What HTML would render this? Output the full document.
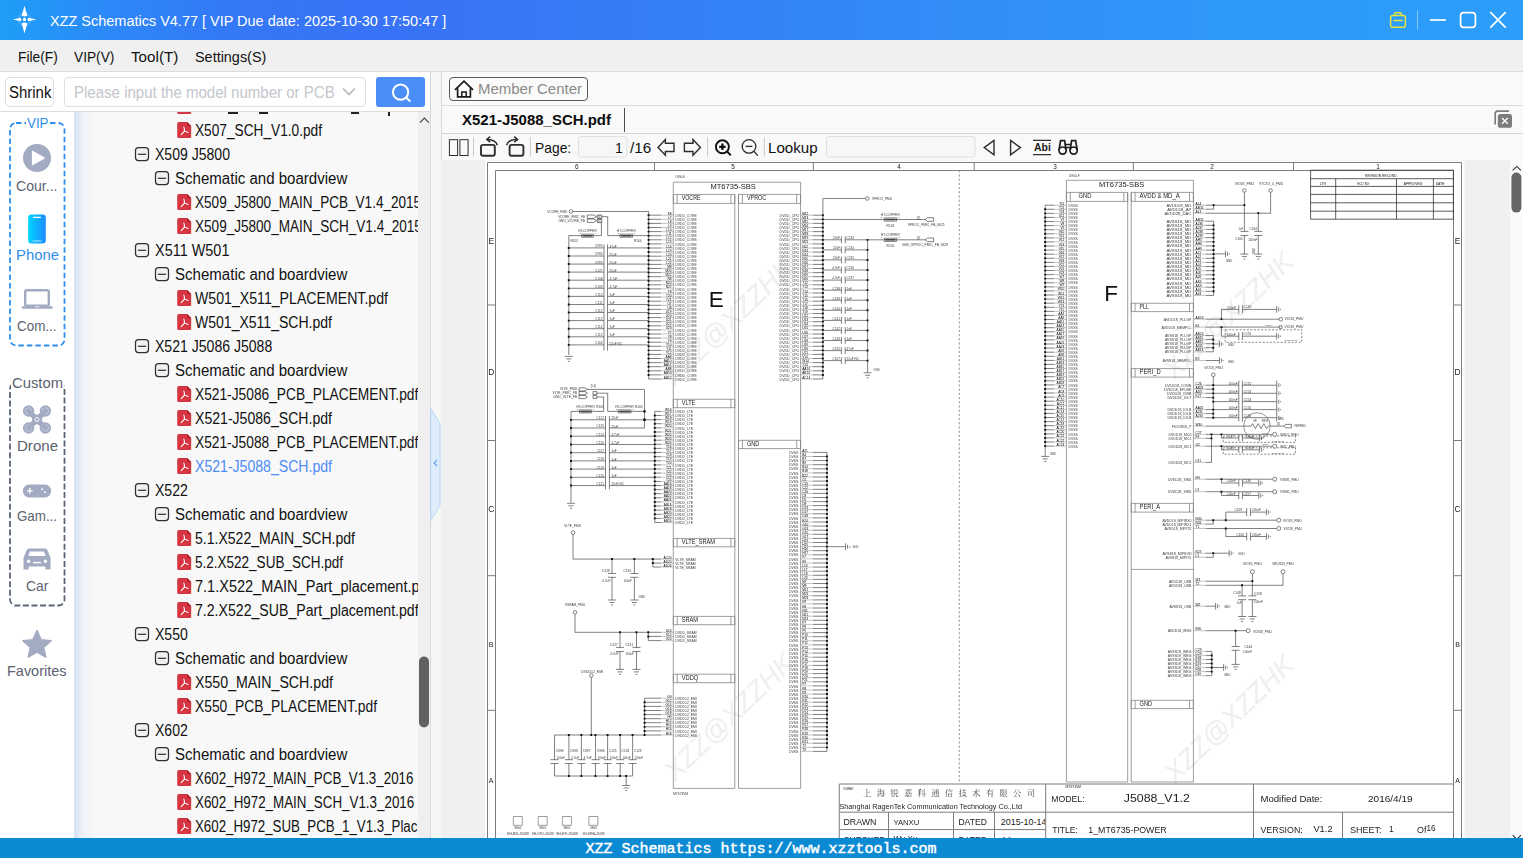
<!DOCTYPE html>
<html lang="en"><head><meta charset="utf-8"><title>XZZ Schematics</title>
<style>
html,body{margin:0;padding:0}
body{width:1523px;height:858px;overflow:hidden;position:relative;background:#fff;font-family:"Liberation Sans","Noto Sans CJK SC",sans-serif}
.a{position:absolute}
.t{position:absolute;white-space:nowrap;transform-origin:0 50%}
#tb{position:absolute;left:0;top:0;width:1523px;height:40px;background:linear-gradient(90deg,#1e9ef7 0%,#2495f8 3%,#2e86f8 8%,#3577f6 16%,#3872f6 26%,#367bf6 40%,#328bf8 60%,#2e98f9 80%,#2c9efa 100%)}
#mb{position:absolute;left:0;top:40px;width:1523px;height:31px;background:#f0f0f0;border-bottom:1px solid #dcdcdc}
#sr{position:absolute;left:0;top:72px;width:430px;height:39px;background:#fff;border-bottom:1px solid #dedede}
.btn{border:1px solid #dcdfe6;border-radius:4px;box-sizing:border-box;background:#fff}
#tree{position:absolute;left:74px;top:112px;width:344px;height:726px;overflow:hidden;background:linear-gradient(90deg,#d4e0f3 0,#eef2f8 9px,#f8f8f8 20px,#f8f8f8 100%)}
#sb{position:absolute;left:0;top:838px;width:1523px;height:20px;background:#0b8ad4}
#sbt{position:absolute;left:585.5px;top:840px;width:351px;height:18px;line-height:19px;font-family:"Liberation Mono",monospace;font-size:15px;color:#fff;-webkit-text-stroke:.45px #fff;white-space:nowrap}
</style></head>
<body>
<div id="tb"></div>
<svg class="a" style="left:10px;top:5px" width="30" height="30" viewBox="0 0 30 30">
<circle cx="14.5" cy="14.5" r="6.2" fill="none" stroke="#fff" stroke-opacity=".35" stroke-width="0.8"/>
<path d="M14.5 0.800 L17.300 10.600 Q14.5 12.400 11.700 10.600 Z M14.5 28.400 L17.300 18.400 Q14.5 16.600 11.700 18.400 Z M2.800 14.5 L10.800 12.700 Q12 14.5 10.800 16.300 Z M26.400 14.5 L18.200 12.700 Q17 14.5 18.200 16.300 Z" fill="#fff"/>
<circle cx="14.5" cy="14.5" r="1.7" fill="#fff"/></svg>
<span class="t" style="left:50.20px;top:13.08px;font-size:15.5px;line-height:15.5px;color:#fff;transform:scaleX(0.9336);">XZZ Schematics V4.77 [ VIP Due date: 2025-10-30 17:50:47 ]</span>
<svg class="a" style="left:1380px;top:0" width="143" height="40" viewBox="1380 0 143 40" fill="none">
<g stroke="#e6e43c" stroke-width="1.5" stroke-linejoin="round" stroke-linecap="round">
<rect x="1390.6" y="15.6" width="14.8" height="11.6" rx="2"/><path d="M1394.6 15.4v-1.2a1.4 1.4 0 0 1 1.4-1.4h4a1.4 1.4 0 0 1 1.4 1.4v1.2"/><path d="M1394 20.6h8.2"/></g>
<path d="M1417.5 10v20" stroke="#fff" stroke-opacity=".45" stroke-width="1"/>
<g stroke="#fff" stroke-width="1.7">
<path d="M1430 20h16"/><rect x="1460.6" y="12.6" width="14.8" height="14.8" rx="3.2"/><path d="M1490.3 12.2l15.4 15.4M1505.7 12.2l-15.4 15.4"/></g></svg>
<div id="mb"></div>
<span class="t" style="left:18.00px;top:49.18px;font-size:15.5px;line-height:15.5px;color:#111;transform:scaleX(0.8890);">File(F)</span>
<span class="t" style="left:74.20px;top:49.18px;font-size:15.5px;line-height:15.5px;color:#111;transform:scaleX(0.8850);">VIP(V)</span>
<span class="t" style="left:131.30px;top:49.18px;font-size:15.5px;line-height:15.5px;color:#111;transform:scaleX(0.9808);">Tool(T)</span>
<span class="t" style="left:195.30px;top:49.18px;font-size:15.5px;line-height:15.5px;color:#111;transform:scaleX(0.9300);">Settings(S)</span>
<div id="sr"></div>
<div class="a btn" style="left:5px;top:77px;width:49px;height:30px"></div>
<span class="t" style="left:8.60px;top:84.40px;font-size:16.3px;line-height:16.3px;color:#111;transform:scaleX(0.9177);">Shrink</span>
<div class="a btn" style="left:64px;top:77px;width:302px;height:30px"></div>
<span class="t" style="left:73.50px;top:84.40px;font-size:16.3px;line-height:16.3px;color:#c3c6cc;transform:scaleX(0.9233);">Please input the model number or PCB</span>
<svg class="a" style="left:341px;top:86px" width="16" height="12" viewBox="0 0 16 12" fill="none"><path d="M2 2.5l6 6 6-6" stroke="#b8b8b8" stroke-width="1.6"/></svg>
<div class="a" style="left:376px;top:77px;width:49px;height:30px;background:#4b8ef8;border-radius:3px"></div>
<svg class="a" style="left:388px;top:80px" width="26" height="26" viewBox="0 0 26 26" fill="none" stroke="#fff" stroke-width="2" stroke-linecap="round"><circle cx="12.6" cy="12.2" r="7.6"/><path d="M18.4 17.8l3.4 3.2"/></svg>
<div class="a" style="left:0;top:112px;width:74px;height:726px;background:#fff"></div>
<svg class="a" style="left:0;top:112px" width="74" height="726" viewBox="0 112 74 726" fill="none">
<rect x="10" y="123" width="54.5" height="222.5" rx="6" stroke="#2f8fef" stroke-width="1.8" stroke-dasharray="5.5 3"/>
<rect x="26" y="114" width="23" height="14" fill="#fff"/>
<rect x="10" y="383" width="54.5" height="222.5" rx="6" stroke="#5b6678" stroke-width="1.8" stroke-dasharray="6 2.600"/>
<rect x="11" y="374" width="53" height="15" fill="#fff"/>
<circle cx="37" cy="158" r="14" fill="#a3abc2"/><path d="M32.5 151.2v13.6l11.8-6.8z" fill="#fff" stroke="#fff" stroke-width="1.2" stroke-linejoin="round"/>
<defs><linearGradient id="pg" x1="0" x2="1"><stop offset="0" stop-color="#00d4ff"/><stop offset="1" stop-color="#1e8cff"/></linearGradient></defs>
<rect x="28.2" y="214.5" width="17.6" height="29" rx="3" fill="url(#pg)"/><path d="M33.5 217.3h7" stroke="#fff" stroke-width="1.2" stroke-linecap="round"/><path d="M32.5 241h9" stroke="#fff" stroke-opacity=".7" stroke-width="1"/>
<rect x="25.2" y="290.2" width="23.6" height="15.6" rx="1.5" stroke="#a3abc2" stroke-width="2.4"/><path d="M23 307.5h28.500" stroke="#a3abc2" stroke-width="2.6" stroke-linecap="round"/><path d="M35 306.8h4.5" stroke="#fff" stroke-width="0.8"/>
<g fill="#a3abc2"><circle cx="28.6" cy="411" r="5.700"/><circle cx="28.6" cy="428" r="5.700"/><circle cx="45.4" cy="411" r="5.700"/><circle cx="45.4" cy="428" r="5.700"/></g>
<g fill="none" stroke="#c9cedc" stroke-width=".8"><circle cx="28.6" cy="411" r="3.300"/><circle cx="28.6" cy="428" r="3.300"/><circle cx="45.4" cy="411" r="3.300"/><circle cx="45.4" cy="428" r="3.300"/></g>
<path d="M30 412.400l14 14.200M44 412.400l-14 14.200" stroke="#a3abc2" stroke-width="5.200"/><circle cx="37" cy="419.500" r="5" fill="#a3abc2"/><circle cx="37" cy="419.500" r="2" fill="none" stroke="#fff" stroke-width=".9"/>
<rect x="22.8" y="484.6" width="28.4" height="12.8" rx="6.4" fill="#a3abc2"/><path d="M29.8 488v5.6M27 490.8h5.6" stroke="#fff" stroke-width="1.3"/><circle cx="42.2" cy="489.3" r="1" fill="#fff"/><circle cx="45" cy="492.2" r="1" fill="#fff"/>
<path d="M23.5 569.5v-11.8l3.2-7.6q.6-1.6 2.4-1.6h15.8q1.8 0 2.4 1.6l3.2 7.6v11.8h-5.2v-3h-16.6v3z" fill="#a3abc2"/><path d="M28.2 556l1.9-4.6h13.8l1.9 4.6z" fill="#fff"/><circle cx="28.6" cy="561.2" r="1.7" fill="#fff"/><circle cx="45.4" cy="561.2" r="1.7" fill="#fff"/><path d="M33 562.6h8" stroke="#fff" stroke-width="1.4"/>
<path d="M37 630.5l4.1 9.2 10 1-7.5 6.7 2.2 9.8-8.8-5.1-8.8 5.1 2.2-9.8-7.5-6.7 10-1z" fill="#a3abc2" stroke="#a3abc2" stroke-width="1.5" stroke-linejoin="round"/>
</svg>
<span class="t" style="left:26.50px;top:115.08px;font-size:15.5px;line-height:15.5px;color:#2f8fef;transform:scaleX(0.8605);">VIP</span>
<span class="t" style="left:16.00px;top:177.70px;font-size:15px;line-height:15px;color:#5b6270;transform:scaleX(0.9392);">Cour...</span>
<span class="t" style="left:15.60px;top:247.30px;font-size:15px;line-height:15px;color:#2f8fef;transform:scaleX(0.9913);">Phone</span>
<span class="t" style="left:17.30px;top:317.50px;font-size:15px;line-height:15px;color:#5b6270;transform:scaleX(0.8942);">Com...</span>
<span class="t" style="left:12.00px;top:375.10px;font-size:15px;line-height:15px;color:#5b6270;transform:scaleX(0.9868);">Custom</span>
<span class="t" style="left:16.60px;top:437.60px;font-size:15px;line-height:15px;color:#5b6270;transform:scaleX(1.0035);">Drone</span>
<span class="t" style="left:17.20px;top:507.70px;font-size:15px;line-height:15px;color:#5b6270;transform:scaleX(0.8888);">Gam...</span>
<span class="t" style="left:26.00px;top:577.60px;font-size:15px;line-height:15px;color:#5b6270;transform:scaleX(0.9309);">Car</span>
<span class="t" style="left:7.30px;top:662.60px;font-size:15px;line-height:15px;color:#5b6270;transform:scaleX(0.9646);">Favorites</span>
<div id="tree">
<svg class="a" style="left:0;top:0" width="344" height="726" viewBox="74 112 344 726">
<g transform="translate(0,-24)"><g transform="translate(177,122)"><path d="M1.8 0h8.400l4 4v10.400a1.600 1.600 0 0 1-1.600 1.600H1.800A1.600 1.600 0 0 1 .2 14.400V1.600A1.600 1.600 0 0 1 1.800 0z" fill="#d63541"/><path d="M10.200 0l4 4h-2.800a1.200 1.200 0 0 1-1.200-1.200z" fill="#a3222d"/><path d="M6.900 5.400q.9 2.200.4 3.900L4.200 12.600M7.300 9.300q2 .2 3.700 1.100" fill="none" stroke="#fff" stroke-width="1.150" stroke-linecap="round" stroke-linejoin="round"/></g></g>
<g transform="translate(177,122)"><path d="M1.8 0h8.400l4 4v10.400a1.600 1.600 0 0 1-1.600 1.600H1.800A1.600 1.600 0 0 1 .2 14.400V1.600A1.600 1.600 0 0 1 1.800 0z" fill="#d63541"/><path d="M10.200 0l4 4h-2.800a1.200 1.200 0 0 1-1.200-1.200z" fill="#a3222d"/><path d="M6.900 5.400q.9 2.200.4 3.900L4.200 12.600M7.300 9.300q2 .2 3.700 1.100" fill="none" stroke="#fff" stroke-width="1.150" stroke-linecap="round" stroke-linejoin="round"/></g>
<rect x="135.5" y="147.5" width="13" height="13" rx="3" fill="#f1f1f1" stroke="#303030" stroke-width="1.25"/><path d="M137.9 154.3h8.200" stroke="#303030" stroke-width="1.200"/>
<rect x="155.5" y="171.5" width="13" height="13" rx="3" fill="#f1f1f1" stroke="#303030" stroke-width="1.25"/><path d="M157.9 178.3h8.200" stroke="#303030" stroke-width="1.200"/>
<g transform="translate(177,194)"><path d="M1.8 0h8.400l4 4v10.400a1.600 1.600 0 0 1-1.600 1.600H1.800A1.600 1.600 0 0 1 .2 14.400V1.600A1.600 1.600 0 0 1 1.800 0z" fill="#d63541"/><path d="M10.200 0l4 4h-2.800a1.200 1.200 0 0 1-1.200-1.200z" fill="#a3222d"/><path d="M6.900 5.400q.9 2.200.4 3.900L4.200 12.600M7.300 9.300q2 .2 3.700 1.100" fill="none" stroke="#fff" stroke-width="1.150" stroke-linecap="round" stroke-linejoin="round"/></g>
<g transform="translate(177,218)"><path d="M1.8 0h8.400l4 4v10.400a1.600 1.600 0 0 1-1.600 1.600H1.800A1.600 1.600 0 0 1 .2 14.400V1.600A1.600 1.600 0 0 1 1.800 0z" fill="#d63541"/><path d="M10.200 0l4 4h-2.800a1.200 1.200 0 0 1-1.200-1.200z" fill="#a3222d"/><path d="M6.900 5.400q.9 2.200.4 3.900L4.200 12.600M7.300 9.300q2 .2 3.700 1.100" fill="none" stroke="#fff" stroke-width="1.150" stroke-linecap="round" stroke-linejoin="round"/></g>
<rect x="135.5" y="243.5" width="13" height="13" rx="3" fill="#f1f1f1" stroke="#303030" stroke-width="1.25"/><path d="M137.9 250.3h8.200" stroke="#303030" stroke-width="1.200"/>
<rect x="155.5" y="267.5" width="13" height="13" rx="3" fill="#f1f1f1" stroke="#303030" stroke-width="1.25"/><path d="M157.9 274.3h8.200" stroke="#303030" stroke-width="1.200"/>
<g transform="translate(177,290)"><path d="M1.8 0h8.400l4 4v10.400a1.600 1.600 0 0 1-1.600 1.600H1.800A1.600 1.600 0 0 1 .2 14.400V1.600A1.600 1.600 0 0 1 1.800 0z" fill="#d63541"/><path d="M10.200 0l4 4h-2.800a1.200 1.200 0 0 1-1.200-1.200z" fill="#a3222d"/><path d="M6.900 5.400q.9 2.200.4 3.900L4.200 12.600M7.300 9.300q2 .2 3.700 1.100" fill="none" stroke="#fff" stroke-width="1.150" stroke-linecap="round" stroke-linejoin="round"/></g>
<g transform="translate(177,314)"><path d="M1.8 0h8.400l4 4v10.400a1.600 1.600 0 0 1-1.600 1.600H1.800A1.600 1.600 0 0 1 .2 14.400V1.600A1.600 1.600 0 0 1 1.800 0z" fill="#d63541"/><path d="M10.200 0l4 4h-2.800a1.200 1.200 0 0 1-1.200-1.200z" fill="#a3222d"/><path d="M6.900 5.400q.9 2.200.4 3.900L4.200 12.600M7.300 9.300q2 .2 3.700 1.100" fill="none" stroke="#fff" stroke-width="1.150" stroke-linecap="round" stroke-linejoin="round"/></g>
<rect x="135.5" y="339.5" width="13" height="13" rx="3" fill="#f1f1f1" stroke="#303030" stroke-width="1.25"/><path d="M137.9 346.3h8.200" stroke="#303030" stroke-width="1.200"/>
<rect x="155.5" y="363.5" width="13" height="13" rx="3" fill="#f1f1f1" stroke="#303030" stroke-width="1.25"/><path d="M157.9 370.3h8.200" stroke="#303030" stroke-width="1.200"/>
<g transform="translate(177,386)"><path d="M1.8 0h8.400l4 4v10.400a1.600 1.600 0 0 1-1.600 1.600H1.800A1.600 1.600 0 0 1 .2 14.400V1.600A1.600 1.600 0 0 1 1.800 0z" fill="#d63541"/><path d="M10.200 0l4 4h-2.800a1.200 1.200 0 0 1-1.200-1.200z" fill="#a3222d"/><path d="M6.900 5.400q.9 2.200.4 3.900L4.200 12.600M7.300 9.300q2 .2 3.700 1.100" fill="none" stroke="#fff" stroke-width="1.150" stroke-linecap="round" stroke-linejoin="round"/></g>
<g transform="translate(177,410)"><path d="M1.8 0h8.400l4 4v10.400a1.600 1.600 0 0 1-1.600 1.600H1.800A1.600 1.600 0 0 1 .2 14.400V1.600A1.600 1.600 0 0 1 1.800 0z" fill="#d63541"/><path d="M10.200 0l4 4h-2.800a1.200 1.200 0 0 1-1.200-1.200z" fill="#a3222d"/><path d="M6.900 5.400q.9 2.200.4 3.900L4.200 12.600M7.300 9.300q2 .2 3.700 1.100" fill="none" stroke="#fff" stroke-width="1.150" stroke-linecap="round" stroke-linejoin="round"/></g>
<g transform="translate(177,434)"><path d="M1.8 0h8.400l4 4v10.400a1.600 1.600 0 0 1-1.600 1.600H1.800A1.600 1.600 0 0 1 .2 14.400V1.600A1.600 1.600 0 0 1 1.800 0z" fill="#d63541"/><path d="M10.200 0l4 4h-2.800a1.200 1.200 0 0 1-1.200-1.200z" fill="#a3222d"/><path d="M6.900 5.400q.9 2.200.4 3.900L4.200 12.600M7.300 9.300q2 .2 3.700 1.100" fill="none" stroke="#fff" stroke-width="1.150" stroke-linecap="round" stroke-linejoin="round"/></g>
<g transform="translate(177,458)"><path d="M1.8 0h8.400l4 4v10.400a1.600 1.600 0 0 1-1.600 1.600H1.800A1.600 1.600 0 0 1 .2 14.400V1.600A1.600 1.600 0 0 1 1.800 0z" fill="#d63541"/><path d="M10.200 0l4 4h-2.800a1.200 1.200 0 0 1-1.200-1.200z" fill="#a3222d"/><path d="M6.900 5.400q.9 2.200.4 3.900L4.200 12.600M7.300 9.300q2 .2 3.700 1.100" fill="none" stroke="#fff" stroke-width="1.150" stroke-linecap="round" stroke-linejoin="round"/></g>
<rect x="135.5" y="483.5" width="13" height="13" rx="3" fill="#f1f1f1" stroke="#303030" stroke-width="1.25"/><path d="M137.9 490.3h8.200" stroke="#303030" stroke-width="1.200"/>
<rect x="155.5" y="507.5" width="13" height="13" rx="3" fill="#f1f1f1" stroke="#303030" stroke-width="1.25"/><path d="M157.9 514.3h8.200" stroke="#303030" stroke-width="1.200"/>
<g transform="translate(177,530)"><path d="M1.8 0h8.400l4 4v10.400a1.600 1.600 0 0 1-1.600 1.600H1.800A1.600 1.600 0 0 1 .2 14.400V1.600A1.600 1.600 0 0 1 1.800 0z" fill="#d63541"/><path d="M10.200 0l4 4h-2.800a1.200 1.200 0 0 1-1.200-1.200z" fill="#a3222d"/><path d="M6.900 5.400q.9 2.200.4 3.900L4.200 12.600M7.300 9.300q2 .2 3.700 1.100" fill="none" stroke="#fff" stroke-width="1.150" stroke-linecap="round" stroke-linejoin="round"/></g>
<g transform="translate(177,554)"><path d="M1.8 0h8.400l4 4v10.400a1.600 1.600 0 0 1-1.600 1.600H1.800A1.600 1.600 0 0 1 .2 14.400V1.600A1.600 1.600 0 0 1 1.800 0z" fill="#d63541"/><path d="M10.200 0l4 4h-2.800a1.200 1.200 0 0 1-1.200-1.200z" fill="#a3222d"/><path d="M6.900 5.400q.9 2.200.4 3.900L4.200 12.600M7.300 9.300q2 .2 3.700 1.100" fill="none" stroke="#fff" stroke-width="1.150" stroke-linecap="round" stroke-linejoin="round"/></g>
<g transform="translate(177,578)"><path d="M1.8 0h8.400l4 4v10.400a1.600 1.600 0 0 1-1.600 1.600H1.800A1.600 1.600 0 0 1 .2 14.400V1.600A1.600 1.600 0 0 1 1.800 0z" fill="#d63541"/><path d="M10.200 0l4 4h-2.800a1.200 1.200 0 0 1-1.200-1.200z" fill="#a3222d"/><path d="M6.900 5.400q.9 2.200.4 3.900L4.200 12.600M7.300 9.300q2 .2 3.700 1.100" fill="none" stroke="#fff" stroke-width="1.150" stroke-linecap="round" stroke-linejoin="round"/></g>
<g transform="translate(177,602)"><path d="M1.8 0h8.400l4 4v10.400a1.600 1.600 0 0 1-1.600 1.600H1.800A1.600 1.600 0 0 1 .2 14.400V1.600A1.600 1.600 0 0 1 1.800 0z" fill="#d63541"/><path d="M10.200 0l4 4h-2.800a1.200 1.200 0 0 1-1.200-1.200z" fill="#a3222d"/><path d="M6.900 5.400q.9 2.200.4 3.900L4.200 12.600M7.300 9.300q2 .2 3.700 1.100" fill="none" stroke="#fff" stroke-width="1.150" stroke-linecap="round" stroke-linejoin="round"/></g>
<rect x="135.5" y="627.5" width="13" height="13" rx="3" fill="#f1f1f1" stroke="#303030" stroke-width="1.25"/><path d="M137.9 634.3h8.200" stroke="#303030" stroke-width="1.200"/>
<rect x="155.5" y="651.5" width="13" height="13" rx="3" fill="#f1f1f1" stroke="#303030" stroke-width="1.25"/><path d="M157.9 658.3h8.200" stroke="#303030" stroke-width="1.200"/>
<g transform="translate(177,674)"><path d="M1.8 0h8.400l4 4v10.400a1.600 1.600 0 0 1-1.600 1.600H1.800A1.600 1.600 0 0 1 .2 14.400V1.600A1.600 1.600 0 0 1 1.800 0z" fill="#d63541"/><path d="M10.200 0l4 4h-2.800a1.200 1.200 0 0 1-1.200-1.200z" fill="#a3222d"/><path d="M6.900 5.400q.9 2.200.4 3.900L4.200 12.600M7.300 9.300q2 .2 3.700 1.100" fill="none" stroke="#fff" stroke-width="1.150" stroke-linecap="round" stroke-linejoin="round"/></g>
<g transform="translate(177,698)"><path d="M1.8 0h8.400l4 4v10.400a1.600 1.600 0 0 1-1.600 1.600H1.800A1.600 1.600 0 0 1 .2 14.400V1.600A1.600 1.600 0 0 1 1.800 0z" fill="#d63541"/><path d="M10.200 0l4 4h-2.800a1.200 1.200 0 0 1-1.200-1.200z" fill="#a3222d"/><path d="M6.900 5.400q.9 2.200.4 3.900L4.200 12.600M7.300 9.300q2 .2 3.700 1.100" fill="none" stroke="#fff" stroke-width="1.150" stroke-linecap="round" stroke-linejoin="round"/></g>
<rect x="135.5" y="723.5" width="13" height="13" rx="3" fill="#f1f1f1" stroke="#303030" stroke-width="1.25"/><path d="M137.9 730.3h8.200" stroke="#303030" stroke-width="1.200"/>
<rect x="155.5" y="747.5" width="13" height="13" rx="3" fill="#f1f1f1" stroke="#303030" stroke-width="1.25"/><path d="M157.9 754.3h8.200" stroke="#303030" stroke-width="1.200"/>
<g transform="translate(177,770)"><path d="M1.8 0h8.400l4 4v10.400a1.600 1.600 0 0 1-1.600 1.600H1.800A1.600 1.600 0 0 1 .2 14.400V1.600A1.600 1.600 0 0 1 1.800 0z" fill="#d63541"/><path d="M10.200 0l4 4h-2.800a1.200 1.200 0 0 1-1.200-1.200z" fill="#a3222d"/><path d="M6.900 5.400q.9 2.200.4 3.900L4.200 12.600M7.300 9.300q2 .2 3.700 1.100" fill="none" stroke="#fff" stroke-width="1.150" stroke-linecap="round" stroke-linejoin="round"/></g>
<g transform="translate(177,794)"><path d="M1.8 0h8.400l4 4v10.400a1.600 1.600 0 0 1-1.600 1.600H1.800A1.600 1.600 0 0 1 .2 14.400V1.600A1.600 1.600 0 0 1 1.800 0z" fill="#d63541"/><path d="M10.200 0l4 4h-2.800a1.200 1.200 0 0 1-1.200-1.200z" fill="#a3222d"/><path d="M6.900 5.400q.9 2.200.4 3.900L4.200 12.600M7.300 9.300q2 .2 3.700 1.100" fill="none" stroke="#fff" stroke-width="1.150" stroke-linecap="round" stroke-linejoin="round"/></g>
<g transform="translate(177,818)"><path d="M1.8 0h8.400l4 4v10.400a1.600 1.600 0 0 1-1.600 1.600H1.800A1.600 1.600 0 0 1 .2 14.400V1.600A1.600 1.600 0 0 1 1.800 0z" fill="#d63541"/><path d="M10.200 0l4 4h-2.800a1.200 1.200 0 0 1-1.200-1.200z" fill="#a3222d"/><path d="M6.900 5.400q.9 2.200.4 3.900L4.200 12.600M7.300 9.300q2 .2 3.700 1.100" fill="none" stroke="#fff" stroke-width="1.150" stroke-linecap="round" stroke-linejoin="round"/></g>
</svg>
<div class="a" style="left:154px;top:0;width:10px;height:1.6px;background:#222"></div>
<div class="a" style="left:185px;top:0;width:9px;height:1.6px;background:#222"></div>
<div class="a" style="left:277px;top:0;width:8px;height:1.6px;background:#222"></div>
<div class="a" style="left:314px;top:0;width:2px;height:4px;background:#222"></div>
<span class="t" style="left:121.00px;top:10.76px;font-size:16px;line-height:16px;color:#111;transform:scaleX(0.8549);">X507_SCH_V1.0.pdf</span>
<span class="t" style="left:80.60px;top:34.76px;font-size:16px;line-height:16px;color:#111;transform:scaleX(0.8781);">X509 J5800</span>
<span class="t" style="left:101.30px;top:58.76px;font-size:16px;line-height:16px;color:#111;transform:scaleX(0.9404);">Schematic and boardview</span>
<span class="t" style="left:121.00px;top:82.76px;font-size:16px;line-height:16px;color:#111;transform:scaleX(0.8475);">X509_J5800_MAIN_PCB_V1.4_2015</span>
<span class="t" style="left:121.00px;top:106.76px;font-size:16px;line-height:16px;color:#111;transform:scaleX(0.8475);">X509_J5800_MAIN_SCH_V1.4_2015</span>
<span class="t" style="left:80.60px;top:130.76px;font-size:16px;line-height:16px;color:#111;transform:scaleX(0.9028);">X511 W501</span>
<span class="t" style="left:101.30px;top:154.76px;font-size:16px;line-height:16px;color:#111;transform:scaleX(0.9404);">Schematic and boardview</span>
<span class="t" style="left:121.00px;top:178.76px;font-size:16px;line-height:16px;color:#111;transform:scaleX(0.8833);">W501_X511_PLACEMENT.pdf</span>
<span class="t" style="left:121.00px;top:202.76px;font-size:16px;line-height:16px;color:#111;transform:scaleX(0.8768);">W501_X511_SCH.pdf</span>
<span class="t" style="left:80.60px;top:226.76px;font-size:16px;line-height:16px;color:#111;transform:scaleX(0.8784);">X521 J5086 J5088</span>
<span class="t" style="left:101.30px;top:250.76px;font-size:16px;line-height:16px;color:#111;transform:scaleX(0.9404);">Schematic and boardview</span>
<span class="t" style="left:121.00px;top:274.76px;font-size:16px;line-height:16px;color:#111;transform:scaleX(0.8597);">X521-J5086_PCB_PLACEMENT.pdf</span>
<span class="t" style="left:121.00px;top:298.76px;font-size:16px;line-height:16px;color:#111;transform:scaleX(0.8801);">X521-J5086_SCH.pdf</span>
<span class="t" style="left:121.00px;top:322.76px;font-size:16px;line-height:16px;color:#111;transform:scaleX(0.8597);">X521-J5088_PCB_PLACEMENT.pdf</span>
<span class="t" style="left:121.00px;top:346.76px;font-size:16px;line-height:16px;color:#4e8cf6;transform:scaleX(0.8801);">X521-J5088_SCH.pdf</span>
<span class="t" style="left:80.60px;top:370.76px;font-size:16px;line-height:16px;color:#111;transform:scaleX(0.8784);">X522</span>
<span class="t" style="left:101.30px;top:394.76px;font-size:16px;line-height:16px;color:#111;transform:scaleX(0.9404);">Schematic and boardview</span>
<span class="t" style="left:121.00px;top:418.76px;font-size:16px;line-height:16px;color:#111;transform:scaleX(0.8776);">5.1.X522_MAIN_SCH.pdf</span>
<span class="t" style="left:121.00px;top:442.76px;font-size:16px;line-height:16px;color:#111;transform:scaleX(0.8446);">5.2.X522_SUB_SCH.pdf</span>
<span class="t" style="left:121.00px;top:466.76px;font-size:16px;line-height:16px;color:#111;transform:scaleX(0.9084);">7.1.X522_MAIN_Part_placement.pdf</span>
<span class="t" style="left:121.00px;top:490.76px;font-size:16px;line-height:16px;color:#111;transform:scaleX(0.8822);">7.2.X522_SUB_Part_placement.pdf</span>
<span class="t" style="left:80.60px;top:514.76px;font-size:16px;line-height:16px;color:#111;transform:scaleX(0.8784);">X550</span>
<span class="t" style="left:101.30px;top:538.76px;font-size:16px;line-height:16px;color:#111;transform:scaleX(0.9404);">Schematic and boardview</span>
<span class="t" style="left:121.00px;top:562.76px;font-size:16px;line-height:16px;color:#111;transform:scaleX(0.8867);">X550_MAIN_SCH.pdf</span>
<span class="t" style="left:121.00px;top:586.76px;font-size:16px;line-height:16px;color:#111;transform:scaleX(0.8635);">X550_PCB_PLACEMENT.pdf</span>
<span class="t" style="left:80.60px;top:610.76px;font-size:16px;line-height:16px;color:#111;transform:scaleX(0.8784);">X602</span>
<span class="t" style="left:101.30px;top:634.76px;font-size:16px;line-height:16px;color:#111;transform:scaleX(0.9404);">Schematic and boardview</span>
<span class="t" style="left:121.00px;top:658.76px;font-size:16px;line-height:16px;color:#111;transform:scaleX(0.8353);">X602_H972_MAIN_PCB_V1.3_2016</span>
<span class="t" style="left:121.00px;top:682.76px;font-size:16px;line-height:16px;color:#111;transform:scaleX(0.8353);">X602_H972_MAIN_SCH_V1.3_2016</span>
<span class="t" style="left:121.00px;top:706.76px;font-size:16px;line-height:16px;color:#111;transform:scaleX(0.8306);">X602_H972_SUB_PCB_1_V1.3_Place</span>
</div>
<div class="a" style="left:418px;top:112px;width:12.5px;height:726px;background:#efefef"></div>
<svg class="a" style="left:418px;top:112px" width="13" height="726" viewBox="418 112 13 726" fill="none"><path d="M420 122.6l4.4-4.6 4.4 4.600" stroke="#444" stroke-width="1.1"/><rect x="419" y="656.5" width="10" height="71" rx="5" fill="#616161"/></svg>
<div class="a" style="left:430px;top:72px;width:1px;height:766px;background:#d9d9d9"></div>
<div class="a" style="left:431px;top:72px;width:9.5px;height:766px;background:#f5f7f5"></div>
<svg class="a" style="left:430px;top:405px" width="12" height="120" viewBox="430 405 12 120" fill="none"><path d="M430.8 408.5L440 423.6V505.5L430.800 520.6z" fill="#dfecfb" stroke="#b9d5f5" stroke-width="1"/><path d="M437.2 459.8l-3.2 3.2 3.2 3.200" stroke="#5a9cf0" stroke-width="1.1"/></svg>
<div class="a" style="left:440.5px;top:72px;width:1082.5px;height:88px;background:#f9f9f9;border-left:1px solid #dadada"></div>
<div class="a" style="left:441px;top:105px;width:1082px;height:1px;background:#dcdcdc"></div>
<div class="a" style="left:441px;top:133px;width:1082px;height:1px;background:#d4d4d4"></div>
<div class="a" style="left:448.5px;top:76.5px;width:139px;height:24.500px;border:1px solid #5a5a5a;border-radius:4px;box-sizing:border-box;background:#fafafa"></div>
<svg class="a" style="left:453px;top:78px" width="22" height="22" viewBox="453 78 22 22" fill="none" stroke="#1a1a1a" stroke-width="1.7" stroke-linejoin="miter"><path d="M455 89.8l9-8.600 9 8.600"/><path d="M457.6 88.200v8.600h12.800v-8.600"/><path d="M461.8 96.600v-4.600h4.400v4.600" stroke-width="1.5"/></svg>
<span class="t" style="left:477.70px;top:80.98px;font-size:15.5px;line-height:15.5px;color:#8a8a8a;transform:scaleX(0.9658);">Member Center</span>
<span class="t" style="left:461.80px;top:112.28px;font-size:15.5px;line-height:15.5px;color:#0c0c0c;font-weight:bold;transform:scaleX(0.9662);">X521-J5088_SCH.pdf</span>
<div class="a" style="left:624px;top:108px;width:1.3px;height:24px;background:#4a4a4a"></div>
<svg class="a" style="left:1490px;top:107px" width="26" height="24" viewBox="1490 107 26 24" fill="none"><path d="M1495.2 124.400V113.400a2.200 2.200 0 0 1 2.200-2.200H1509" stroke="#7c7c7c" stroke-width="1.7"/><rect x="1497.8" y="114" width="14.200" height="13.800" rx="2.600" fill="#7c7c7c"/><path d="M1502 118l5.800 5.800M1507.800 118l-5.800 5.800" stroke="#fff" stroke-width="1.3"/></svg>
<svg class="a" style="left:441px;top:134px" width="700" height="26" viewBox="441 134 700 26" fill="none" stroke="#2e2e2e">
<rect x="449.400" y="139.700" width="8.200" height="15.800" stroke-width="1"/><rect x="459.900" y="139.700" width="8.200" height="15.800" stroke-width="1"/>
<path d="M473.5 137.300v19.400" stroke="#c9c9c9" stroke-width="1"/>
<path d="M530.4 137.300v19.400" stroke="#c9c9c9" stroke-width="1"/>
<path d="M707.6 137.300v19.400" stroke="#c9c9c9" stroke-width="1"/>
<path d="M764.3 137.300v19.400" stroke="#c9c9c9" stroke-width="1"/>
<rect x="481" y="144.900" width="13.800" height="10.800" rx="2" stroke-width="1.900"/><path d="M497.400 145.200q-1.600-5.600-9.800-5.800" stroke-width="1.500"/><path d="M490.200 136.600l-3.400 2.800 3.400 2.800" stroke-width="1.500"/>
<rect x="509.600" y="144.900" width="13.800" height="10.800" rx="2" stroke-width="1.900"/><path d="M506.600 145.200q1.600-5.600 9.800-5.800" stroke-width="1.500"/><path d="M514.200 136.600l3.400 2.800-3.400 2.800" stroke-width="1.500"/>
<rect x="578.500" y="136.500" width="48.500" height="20.600" rx="2.500" fill="#f7f7f7" stroke="#e0e0e0" stroke-width="1"/>
<path d="M658 147.400l7.400-7.800v3.700h8.600v8.200h-8.600v3.700z" stroke-width="1.400" stroke-linejoin="miter"/>
<path d="M700.400 147.400l-7.400-7.800v3.700h-8.600v8.200h8.600v3.700z" stroke-width="1.400" stroke-linejoin="miter"/>
<circle cx="722.400" cy="146.800" r="6.500" stroke="#111" stroke-width="1.900"/><path d="M727.200 151.600l3.600 3.800" stroke="#111" stroke-width="2"/><path d="M719.200 146.800h6.400M722.400 143.600v6.400" stroke="#111" stroke-width="2.200"/>
<circle cx="749" cy="146.400" r="6.800" stroke-width="1.300"/><path d="M754 151.400l3.800 4.200" stroke-width="1.400"/><path d="M745.600 146.400h6.800" stroke-width="1.300"/>
<rect x="826.500" y="136.500" width="148.500" height="20.600" rx="2.500" fill="#f7f7f7" stroke="#e0e0e0" stroke-width="1"/>
<path d="M994 140.400v14.400l-9.800-7.200z" stroke-width="1.400"/><path d="M1010.600 140.400v14.400l9.800-7.200z" stroke-width="1.400"/>
<path d="M1033 140.400h18M1033 154.600h18" stroke-width="1.100"/>
<g stroke="#1c1c1c" stroke-width="1.700"><circle cx="1062.600" cy="150.600" r="3.600"/><circle cx="1073.600" cy="150.600" r="3.600"/><path d="M1059 150l1.600-9.400h4l1.400 9.400M1070.200 150l1.400-9.400h4l1.600 9.400"/><path d="M1065.800 144.400h4.600M1066 147.600h4.200" stroke-width="1.500"/></g>
</svg>
<span class="t" style="left:534.80px;top:140.30px;font-size:15px;line-height:15px;color:#111;transform:scaleX(0.9235);">Page:</span>
<span class="t" style="left:614.60px;top:140.30px;font-size:15px;line-height:15px;color:#111;transform:scaleX(0.9300);">1</span>
<span class="t" style="left:630.20px;top:140.30px;font-size:15px;line-height:15px;color:#111;transform:scaleX(1.0215);">/16</span>
<span class="t" style="left:768.40px;top:140.30px;font-size:15px;line-height:15px;color:#111;transform:scaleX(1.0079);">Lookup</span>
<span class="t" style="left:1033.60px;top:142.39px;font-size:11px;line-height:11px;color:#222;font-weight:bold;transform:scaleX(0.9481);">Abi</span>
<div class="a" style="left:441px;top:160px;width:1069px;height:678px;background:#f0f0f0"></div>
<div class="a" style="left:1510px;top:160px;width:13px;height:678px;background:#fafafa"></div>
<svg class="a" style="left:1510px;top:160px" width="13" height="678" viewBox="1510 160 13 678" fill="none"><path d="M1512.600 170.400l4.200-4 4.200 4" stroke="#333" stroke-width="1.100"/><rect x="1511.400" y="172.600" width="10" height="40" rx="5" fill="#666"/><path d="M1512.600 835.200l4.200 4 4.200-4" stroke="#333" stroke-width="1.100"/></svg>
<svg class="a" style="left:441px;top:160px;opacity:.999" width="1069" height="678" viewBox="441 160 1069 678" font-family="Liberation Sans,sans-serif" fill="#3a3a3a">
<rect x="485" y="160.5" width="979.5" height="678" fill="#fff"/>
<g font-size="27.2" font-style="italic" fill="#edeff1" text-anchor="middle">
<text transform="translate(728 321) rotate(-44)" x="0" y="9.8">XZZ@XZZHK</text>
<text transform="translate(1228 315) rotate(-44)" x="0" y="9.8">XZZ@XZZHK</text>
<text transform="translate(728.6 716.5) rotate(-44)" x="0" y="9.8">XZZ@XZZHK</text>
<text transform="translate(1228.7 718.5) rotate(-44)" x="0" y="9.8">XZZ@XZZHK</text>
</g>
<clipPath id="cd"><rect x="995" y="812" width="50.300" height="26"/></clipPath>
<g clip-path="url(#cd)" font-size="8.600" fill="#222"><text x="1000.800" y="824.700" textLength="45.600" lengthAdjust="spacingAndGlyphs">2015-10-14</text></g>
<text x="949" y="796.300" font-family="Noto Serif CJK SC,serif" font-size="8.400" fill="#4a4a4a" text-anchor="middle" textLength="172" lengthAdjust="spacing">上海锐嘉科通信技术有限公司</text>
<path fill="none" stroke="#7c7c7c" stroke-width="1" d="M487.5 838.0 L487.5 162.5 L1461.5 162.5 L1461.5 838.0M495.5 838.0 L495.5 170.5 L1453.5 170.5 L1453.5 838.0M654.5 162.5 L654.5 170.5M813.3 162.5 L813.3 170.5M974.2 162.5 L974.2 170.5M1133.3 162.5 L1133.3 170.5M1293.5 162.5 L1293.5 170.5M487.5 305.0 L495.5 305.0M1453.5 305.0 L1461.5 305.0M487.5 440.5 L495.5 440.5M1453.5 440.5 L1461.5 440.5M487.5 575.7 L495.5 575.7M1453.5 575.7 L1461.5 575.7M487.5 710.3 L495.5 710.3M1453.5 710.3 L1461.5 710.3M839.3 784.0 L1453.4 784.0M839.3 784.0 L839.3 838.0M1045.7 784.0 L1045.7 838.0M1253.5 784.0 L1253.5 838.0M839.3 812.2 L1453.4 812.2M839.3 829.6 L1045.7 829.6M888.5 812.2 L888.5 838.0M953.5 812.2 L953.5 838.0M994.5 812.2 L994.5 838.0M1342.5 812.2 L1342.5 838.0"/>
<path fill="none" stroke="#777" stroke-width=".8" stroke-dasharray="2.2 2" d="M959.3 170.2 L959.3 782.0"/>
<path fill="none" stroke="#7d7d7d" stroke-width=".75" d="M673.3 194.4 L673.3 182.2 L800.6 182.2 L800.6 194.4M673.3 194.4 L673.3 788.4 L734.8 788.4 L734.8 194.4M738.5 194.4 L738.5 788.4 L800.6 788.4 L800.6 194.4M673.3 194.4H734.8V203.4H673.3ZM677.2 194.4 L677.2 203.4M730.9 194.4 L730.9 203.4M738.5 194.4H800.6V203.4H738.5ZM742.4 194.4 L742.4 203.4M796.7 194.4 L796.7 203.4M673.3 399.3H734.8V407.7H673.3ZM677.2 399.3 L677.2 407.7M730.9 399.3 L730.9 407.7M673.3 538.4H734.8V546.8H673.3ZM677.2 538.4 L677.2 546.8M730.9 538.4 L730.9 546.8M673.3 616.4H734.8V624.7H673.3ZM677.2 616.4 L677.2 624.7M730.9 616.4 L730.9 624.7M673.3 674.2H734.8V682.7H673.3ZM677.2 674.2 L677.2 682.7M730.9 674.2 L730.9 682.7M738.5 440.3H800.6V448.6H738.5ZM742.4 440.3 L742.4 448.6M796.7 440.3 L796.7 448.6M513.3 816.5H522.3V825.3H513.3ZM538.2 816.5H547.2V825.3H538.2ZM562.4 816.5H571.4V825.3H562.4ZM588.9 816.5H597.9V825.3H588.9ZM1066.4 192.4 L1066.4 180.3 L1193.4 180.3 L1193.4 192.4M1066.4 192.4 L1066.4 782.0 L1127.7 782.0 L1127.7 192.4M1131.2 192.4 L1131.2 782.0 L1193.4 782.0 L1193.4 192.4M1066.4 192.4H1127.7V201.4H1066.4ZM1070.3 192.4 L1070.3 201.4M1123.8 192.4 L1123.8 201.4M1131.2 192.4H1193.4V201.4H1131.2ZM1135.1 192.4 L1135.1 201.4M1189.5 192.4 L1189.5 201.4M1131.2 303.3H1193.4V311.6H1131.2ZM1135.1 303.3 L1135.1 311.6M1189.5 303.3 L1189.5 311.6M1131.2 368.6H1193.4V377.1H1131.2ZM1135.1 368.6 L1135.1 377.1M1189.5 368.6 L1189.5 377.1M1131.2 503.4H1193.4V512.1H1131.2ZM1135.1 503.4 L1135.1 512.1M1189.5 503.4 L1189.5 512.1M1131.2 700.3H1193.4V708.6H1131.2ZM1135.1 700.3 L1135.1 708.6M1189.5 700.3 L1189.5 708.6M1131.2 569.4 L1193.4 569.4"/>
<path fill="none" stroke="#3c3c3c" stroke-width=".65" d="M648.6 215.2 L661.0 215.2M648.6 219.3 L661.0 219.3M648.6 223.4 L661.0 223.4M648.6 227.5 L661.0 227.5M648.6 231.6 L661.0 231.6M648.6 235.7 L661.0 235.7M648.6 239.8 L661.0 239.8M648.6 243.9 L661.0 243.9M648.6 248.0 L661.0 248.0M648.6 252.1 L661.0 252.1M648.6 256.2 L661.0 256.2M648.6 260.3 L661.0 260.3M648.6 264.4 L661.0 264.4M648.6 268.5 L661.0 268.5M648.6 272.6 L661.0 272.6M648.6 276.7 L661.0 276.7M648.6 280.8 L661.0 280.8M648.6 284.8 L661.0 284.8M648.6 288.9 L661.0 288.9M648.6 293.0 L661.0 293.0M648.6 297.1 L661.0 297.1M648.6 301.2 L661.0 301.2M648.6 305.3 L661.0 305.3M648.6 309.4 L661.0 309.4M648.6 313.5 L661.0 313.5M648.6 317.6 L661.0 317.6M648.6 321.7 L661.0 321.7M648.6 325.8 L661.0 325.8M648.6 329.9 L661.0 329.9M648.6 334.0 L661.0 334.0M648.6 338.1 L661.0 338.1M648.6 342.2 L661.0 342.2M648.6 346.3 L661.0 346.3M648.6 350.4 L661.0 350.4M648.6 354.4 L661.0 354.4M648.6 358.5 L661.0 358.5M648.6 362.6 L661.0 362.6M648.6 366.7 L661.0 366.7M648.6 370.8 L661.0 370.8M648.6 374.9 L661.0 374.9M648.6 379.0 L661.0 379.0M648.6 211.5 L648.6 379.0M572.8 211.5 L648.6 211.5M587.3 215.0 L593.6 215.0 L596.6 216.7 L593.6 218.4 L587.3 218.4 L587.3 215.0M587.3 219.0 L593.6 219.0 L596.6 220.7 L593.6 222.4 L587.3 222.4 L587.3 219.0M597.4 215.0H601.8V218.6H597.4ZM597.4 219.0H601.8V222.6H597.4ZM601.8 216.7 L607.7 216.7 L607.7 235.6 L648.6 235.6M601.4 222.6 L601.4 235.6 L568.8 235.6 L568.8 355.0M564.8 356.4 L572.8 356.4M566.3 358.9 L571.3 358.9M567.8 361.4 L569.8 361.4M581.7 234.2H593.3V237.2H581.7ZM620.0 234.2H632.7V237.2H620.0ZM568.8 247.9 L604.0 247.9M607.5 247.9 L648.6 247.9M568.8 256.0 L604.0 256.0M607.5 256.0 L648.6 256.0M568.8 264.1 L604.0 264.1M607.5 264.1 L648.6 264.1M568.8 272.1 L604.0 272.1M607.5 272.1 L648.6 272.1M568.8 280.2 L604.0 280.2M607.5 280.2 L648.6 280.2M568.8 288.3 L604.0 288.3M607.5 288.3 L648.6 288.3M568.8 296.4 L604.0 296.4M607.5 296.4 L648.6 296.4M568.8 304.5 L604.0 304.5M607.5 304.5 L648.6 304.5M568.8 312.5 L604.0 312.5M607.5 312.5 L648.6 312.5M568.8 320.6 L604.0 320.6M607.5 320.6 L648.6 320.6M568.8 328.7 L604.0 328.7M607.5 328.7 L648.6 328.7M568.8 336.8 L604.0 336.8M607.5 336.8 L648.6 336.8M568.8 344.9 L604.0 344.9M607.5 344.9 L648.6 344.9M604.0 244.4 L604.0 350.6M607.5 244.4 L607.5 350.6M822.9 215.2 L812.9 215.2M822.9 219.3 L812.9 219.3M822.9 223.4 L812.9 223.4M822.9 227.5 L812.9 227.5M822.9 231.6 L812.9 231.6M822.9 235.7 L812.9 235.7M822.9 239.8 L812.9 239.8M822.9 243.9 L812.9 243.9M822.9 248.0 L812.9 248.0M822.9 252.1 L812.9 252.1M822.9 256.2 L812.9 256.2M822.9 260.3 L812.9 260.3M822.9 264.4 L812.9 264.4M822.9 268.5 L812.9 268.5M822.9 272.6 L812.9 272.6M822.9 276.7 L812.9 276.7M822.9 280.8 L812.9 280.8M822.9 284.8 L812.9 284.8M822.9 288.9 L812.9 288.9M822.9 293.0 L812.9 293.0M822.9 297.1 L812.9 297.1M822.9 301.2 L812.9 301.2M822.9 305.3 L812.9 305.3M822.9 309.4 L812.9 309.4M822.9 313.5 L812.9 313.5M822.9 317.6 L812.9 317.6M822.9 321.7 L812.9 321.7M822.9 325.8 L812.9 325.8M822.9 329.9 L812.9 329.9M822.9 334.0 L812.9 334.0M822.9 338.1 L812.9 338.1M822.9 342.2 L812.9 342.2M822.9 346.3 L812.9 346.3M822.9 350.4 L812.9 350.4M822.9 354.4 L812.9 354.4M822.9 358.5 L812.9 358.5M822.9 362.6 L812.9 362.6M822.9 366.7 L812.9 366.7M822.9 370.8 L812.9 370.8M822.9 374.9 L812.9 374.9M822.9 379.0 L812.9 379.0M822.9 379.0 L822.9 198.5 L865.5 198.5M822.9 219.5 L925.0 219.5M867.6 239.8 L925.0 239.8M884.2 217.9H896.7V221.1H884.2ZM925.0 219.5 L927.6 217.7 L933.6 217.7 L933.6 221.3 L927.6 221.3 L925.0 219.5M884.2 238.2H896.7V241.4H884.2ZM925.0 239.8 L927.6 238.0 L933.6 238.0 L933.6 241.6 L927.6 241.6 L925.0 239.8M822.9 239.8 L841.4 239.8M845.2 239.8 L867.6 239.8M841.4 236.4 L841.4 243.2M845.2 236.4 L845.2 243.2M822.9 249.9 L841.4 249.9M845.2 249.9 L867.6 249.9M841.4 246.5 L841.4 253.3M845.2 246.5 L845.2 253.3M822.9 259.9 L841.4 259.9M845.2 259.9 L867.6 259.9M841.4 256.5 L841.4 263.3M845.2 256.5 L845.2 263.3M822.9 270.0 L841.4 270.0M845.2 270.0 L867.6 270.0M841.4 266.6 L841.4 273.4M845.2 266.6 L845.2 273.4M822.9 280.1 L841.4 280.1M845.2 280.1 L867.6 280.1M841.4 276.7 L841.4 283.5M845.2 276.7 L845.2 283.5M822.9 290.2 L841.4 290.2M845.2 290.2 L867.6 290.2M841.4 286.8 L841.4 293.6M845.2 286.8 L845.2 293.6M822.9 300.2 L841.4 300.2M845.2 300.2 L867.6 300.2M841.4 296.8 L841.4 303.6M845.2 296.8 L845.2 303.6M822.9 310.3 L841.4 310.3M845.2 310.3 L867.6 310.3M841.4 306.9 L841.4 313.7M845.2 306.9 L845.2 313.7M822.9 320.4 L841.4 320.4M845.2 320.4 L867.6 320.4M841.4 317.0 L841.4 323.8M845.2 317.0 L845.2 323.8M822.9 330.4 L841.4 330.4M845.2 330.4 L867.6 330.4M841.4 327.0 L841.4 333.8M845.2 327.0 L845.2 333.8M822.9 340.5 L841.4 340.5M845.2 340.5 L867.6 340.5M841.4 337.1 L841.4 343.9M845.2 337.1 L845.2 343.9M822.9 350.6 L841.4 350.6M845.2 350.6 L867.6 350.6M841.4 347.2 L841.4 354.0M845.2 347.2 L845.2 354.0M822.9 360.6 L841.4 360.6M845.2 360.6 L867.6 360.6M841.4 357.2 L841.4 364.0M845.2 357.2 L845.2 364.0M867.6 239.8 L867.6 372.6M863.6 372.8 L871.6 372.8M865.1 375.3 L870.1 375.3M866.6 377.8 L868.6 377.8M654.8 411.4 L661.0 411.4M654.8 415.5 L661.0 415.5M654.8 419.6 L661.0 419.6M654.8 423.7 L661.0 423.7M654.8 427.9 L661.0 427.9M654.8 432.0 L661.0 432.0M654.8 436.1 L661.0 436.1M654.8 440.2 L661.0 440.2M654.8 444.3 L661.0 444.3M654.8 448.4 L661.0 448.4M654.8 452.5 L661.0 452.5M654.8 456.7 L661.0 456.7M654.8 460.8 L661.0 460.8M654.8 464.9 L661.0 464.9M654.8 469.0 L661.0 469.0M654.8 473.1 L661.0 473.1M654.8 477.2 L661.0 477.2M654.8 481.4 L661.0 481.4M654.8 485.5 L661.0 485.5M654.8 489.6 L661.0 489.6M654.8 493.7 L661.0 493.7M654.8 497.8 L661.0 497.8M654.8 501.9 L661.0 501.9M654.8 506.0 L661.0 506.0M654.8 510.2 L661.0 510.2M654.8 514.3 L661.0 514.3M654.8 518.4 L661.0 518.4M654.8 522.5 L661.0 522.5M654.8 411.4 L654.8 522.5M579.0 387.8 L585.0 387.8 L587.5 389.4 L585.0 391.0 L579.0 391.0 L579.0 387.8M579.0 391.6 L585.0 391.6 L587.5 393.2 L585.0 394.8 L579.0 394.8 L579.0 391.6M579.0 395.4 L585.0 395.4 L587.5 397.0 L585.0 398.6 L579.0 398.6 L579.0 395.4M593.0 391.6H596.8V394.6H593.0ZM593.0 395.4H596.8V398.4H593.0ZM587.5 389.4 L644.5 389.4 L644.5 428.0 L609.4 428.0M596.8 393.2 L607.7 393.2 L607.7 411.4 L644.5 411.4M596.8 397.0 L603.6 397.0 L603.6 411.4 L571.0 411.4 L571.0 502.6M567.0 503.3 L575.0 503.3M568.5 505.8 L573.5 505.8M570.0 508.3 L572.0 508.3M579.4 409.9H591.5V412.9H579.4ZM618.3 409.9H631.0V412.9H618.3ZM571.0 419.8 L605.5 419.8M609.4 419.8 L654.8 419.8M571.0 428.0 L605.5 428.0M571.0 436.2 L605.5 436.2M609.4 436.2 L654.8 436.2M571.0 444.5 L605.5 444.5M609.4 444.5 L654.8 444.5M571.0 452.7 L605.5 452.7M609.4 452.7 L654.8 452.7M571.0 460.9 L605.5 460.9M609.4 460.9 L654.8 460.9M571.0 469.1 L605.5 469.1M609.4 469.1 L654.8 469.1M571.0 477.3 L605.5 477.3M609.4 477.3 L654.8 477.3M571.0 485.6 L605.5 485.6M609.4 485.6 L654.8 485.6M605.5 416.0 L605.5 489.4M609.4 416.0 L609.4 489.4M573.0 534.4 L573.0 559.1 L661.0 559.1M652.9 563.1 L661.0 563.1M652.9 567.0 L661.0 567.0M652.9 559.1 L652.9 567.0M612.0 559.1 L612.0 573.5M608.0 573.5 L616.0 573.5M608.0 577.3 L616.0 577.3M612.0 577.3 L612.0 600.0M608.0 600.0 L616.0 600.0M609.5 602.5 L614.5 602.5M611.0 605.0 L613.0 605.0M634.4 559.1 L634.4 573.5M630.4 573.5 L638.4 573.5M630.4 577.3 L638.4 577.3M634.4 577.3 L634.4 600.0M630.4 600.0 L638.4 600.0M631.9 602.5 L636.9 602.5M633.4 605.0 L635.4 605.0M575.0 614.2 L575.0 632.3 L661.0 632.3M648.3 636.4 L661.0 636.4M648.3 640.6 L661.0 640.6M648.3 632.3 L648.3 640.6M620.0 632.3 L620.0 647.4M616.0 647.4 L624.0 647.4M616.0 651.5 L624.0 651.5M620.0 651.5 L620.0 669.4M616.0 669.4 L624.0 669.4M617.5 671.9 L622.5 671.9M619.0 674.4 L621.0 674.4M636.5 632.3 L636.5 647.4M632.5 647.4 L640.5 647.4M632.5 651.5 L640.5 651.5M636.5 651.5 L636.5 669.4M632.5 669.4 L640.5 669.4M634.0 671.9 L639.0 671.9M635.5 674.4 L637.5 674.4M591.3 677.3 L591.3 735.0M644.6 698.2 L661.0 698.2M644.6 702.3 L661.0 702.3M644.6 706.4 L661.0 706.4M644.6 710.5 L661.0 710.5M644.6 714.6 L661.0 714.6M644.6 718.7 L661.0 718.7M644.6 722.7 L661.0 722.7M644.6 726.8 L661.0 726.8M644.6 730.9 L661.0 730.9M644.6 735.0 L661.0 735.0M644.6 698.2 L644.6 735.0M554.5 735.0 L644.6 735.0M554.5 776.0 L632.6 776.0M554.5 735.0 L554.5 759.7M550.5 759.7 L558.5 759.7M550.5 763.5 L558.5 763.5M554.5 763.5 L554.5 776.0M568.9 735.0 L568.9 759.7M564.9 759.7 L572.9 759.7M564.9 763.5 L572.9 763.5M568.9 763.5 L568.9 776.0M581.4 735.0 L581.4 759.7M577.4 759.7 L585.4 759.7M577.4 763.5 L585.4 763.5M581.4 763.5 L581.4 776.0M595.5 735.0 L595.5 759.7M591.5 759.7 L599.5 759.7M591.5 763.5 L599.5 763.5M595.5 763.5 L595.5 776.0M607.6 735.0 L607.6 759.7M603.6 759.7 L611.6 759.7M603.6 763.5 L611.6 763.5M607.6 763.5 L607.6 776.0M620.2 735.0 L620.2 759.7M616.2 759.7 L624.2 759.7M616.2 763.5 L624.2 763.5M620.2 763.5 L620.2 776.0M632.6 735.0 L632.6 759.7M628.6 759.7 L636.6 759.7M628.6 763.5 L636.6 763.5M632.6 763.5 L632.6 776.0M626.2 776.0 L626.2 785.5M622.2 785.5 L630.2 785.5M623.7 788.0 L628.7 788.0M625.2 790.5 L627.2 790.5M827.0 452.4 L812.9 452.4M827.0 456.5 L812.9 456.5M827.0 460.6 L812.9 460.6M827.0 464.7 L812.9 464.7M827.0 468.8 L812.9 468.8M827.0 472.9 L812.9 472.9M827.0 477.0 L812.9 477.0M827.0 481.1 L812.9 481.1M827.0 485.2 L812.9 485.2M827.0 489.3 L812.9 489.3M827.0 493.4 L812.9 493.4M827.0 497.5 L812.9 497.5M827.0 501.6 L812.9 501.6M827.0 505.6 L812.9 505.6M827.0 509.7 L812.9 509.7M827.0 513.8 L812.9 513.8M827.0 517.9 L812.9 517.9M827.0 522.0 L812.9 522.0M827.0 526.1 L812.9 526.1M827.0 530.2 L812.9 530.2M827.0 534.3 L812.9 534.3M827.0 538.4 L812.9 538.4M827.0 542.5 L812.9 542.5M827.0 546.6 L812.9 546.6M827.0 550.7 L812.9 550.7M827.0 554.8 L812.9 554.8M827.0 558.9 L812.9 558.9M827.0 563.0 L812.9 563.0M827.0 567.1 L812.9 567.1M827.0 571.2 L812.9 571.2M827.0 575.3 L812.9 575.3M827.0 579.4 L812.9 579.4M827.0 583.5 L812.9 583.5M827.0 587.6 L812.9 587.6M827.0 591.7 L812.9 591.7M827.0 595.8 L812.9 595.8M827.0 599.9 L812.9 599.9M827.0 603.9 L812.9 603.9M827.0 608.0 L812.9 608.0M827.0 612.1 L812.9 612.1M827.0 616.2 L812.9 616.2M827.0 620.3 L812.9 620.3M827.0 624.4 L812.9 624.4M827.0 628.5 L812.9 628.5M827.0 632.6 L812.9 632.6M827.0 636.7 L812.9 636.7M827.0 640.8 L812.9 640.8M827.0 644.9 L812.9 644.9M827.0 649.0 L812.9 649.0M827.0 653.1 L812.9 653.1M827.0 657.2 L812.9 657.2M827.0 661.3 L812.9 661.3M827.0 665.4 L812.9 665.4M827.0 669.5 L812.9 669.5M827.0 673.6 L812.9 673.6M827.0 677.7 L812.9 677.7M827.0 681.8 L812.9 681.8M827.0 685.9 L812.9 685.9M827.0 690.0 L812.9 690.0M827.0 694.1 L812.9 694.1M827.0 698.2 L812.9 698.2M827.0 702.2 L812.9 702.2M827.0 706.3 L812.9 706.3M827.0 710.4 L812.9 710.4M827.0 714.5 L812.9 714.5M827.0 718.6 L812.9 718.6M827.0 722.7 L812.9 722.7M827.0 726.8 L812.9 726.8M827.0 730.9 L812.9 730.9M827.0 735.0 L812.9 735.0M827.0 739.1 L812.9 739.1M827.0 743.2 L812.9 743.2M827.0 747.3 L812.9 747.3M827.0 751.4 L812.9 751.4M827.0 452.4 L827.0 751.4M827.0 546.7 L845.5 546.7M845.5 543.4 L845.5 550.0M847.5 544.7 L847.5 548.7M849.3 546.1 L849.3 547.3M1045.2 205.2 L1054.1 205.2M1045.2 209.3 L1054.1 209.3M1045.2 213.4 L1054.1 213.4M1045.2 217.4 L1054.1 217.4M1045.2 221.5 L1054.1 221.5M1045.2 225.6 L1054.1 225.6M1045.2 229.7 L1054.1 229.7M1045.2 233.8 L1054.1 233.8M1045.2 237.9 L1054.1 237.9M1045.2 241.9 L1054.1 241.9M1045.2 246.0 L1054.1 246.0M1045.2 250.1 L1054.1 250.1M1045.2 254.2 L1054.1 254.2M1045.2 258.3 L1054.1 258.3M1045.2 262.4 L1054.1 262.4M1045.2 266.4 L1054.1 266.4M1045.2 270.5 L1054.1 270.5M1045.2 274.6 L1054.1 274.6M1045.2 278.7 L1054.1 278.7M1045.2 282.8 L1054.1 282.8M1045.2 286.9 L1054.1 286.9M1045.2 290.9 L1054.1 290.9M1045.2 295.0 L1054.1 295.0M1045.2 299.1 L1054.1 299.1M1045.2 303.2 L1054.1 303.2M1045.2 307.3 L1054.1 307.3M1045.2 311.4 L1054.1 311.4M1045.2 315.4 L1054.1 315.4M1045.2 319.5 L1054.1 319.5M1045.2 323.6 L1054.1 323.6M1045.2 327.7 L1054.1 327.7M1045.2 331.8 L1054.1 331.8M1045.2 335.9 L1054.1 335.9M1045.2 339.9 L1054.1 339.9M1045.2 344.0 L1054.1 344.0M1045.2 348.1 L1054.1 348.1M1045.2 352.2 L1054.1 352.2M1045.2 356.3 L1054.1 356.3M1045.2 360.4 L1054.1 360.4M1045.2 364.4 L1054.1 364.4M1045.2 368.5 L1054.1 368.5M1045.2 372.6 L1054.1 372.6M1045.2 376.7 L1054.1 376.7M1045.2 380.8 L1054.1 380.8M1045.2 384.9 L1054.1 384.9M1045.2 388.9 L1054.1 388.9M1045.2 393.0 L1054.1 393.0M1045.2 397.1 L1054.1 397.1M1045.2 401.2 L1054.1 401.2M1045.2 405.3 L1054.1 405.3M1045.2 409.4 L1054.1 409.4M1045.2 413.4 L1054.1 413.4M1045.2 417.5 L1054.1 417.5M1045.2 421.6 L1054.1 421.6M1045.2 425.7 L1054.1 425.7M1045.2 429.8 L1054.1 429.8M1045.2 433.9 L1054.1 433.9M1045.2 437.9 L1054.1 437.9M1045.2 442.0 L1054.1 442.0M1045.2 446.1 L1054.1 446.1M1045.2 205.2 L1045.2 456.4M1041.2 456.4 L1049.2 456.4M1042.7 458.9 L1047.7 458.9M1044.2 461.4 L1046.2 461.4M1244.4 205.2 L1205.7 205.2M1213.6 209.2 L1205.7 209.2M1270.6 213.2 L1205.7 213.2M1213.6 205.2 L1213.6 209.2M1270.6 213.2 L1270.6 192.3M1244.4 192.3 L1244.4 231.4M1240.4 231.4 L1248.4 231.4M1240.4 235.5 L1248.4 235.5M1244.4 235.5 L1244.4 254.1M1240.4 254.1 L1248.4 254.1M1241.9 256.6 L1246.9 256.6M1243.4 259.1 L1245.4 259.1M1258.3 213.2 L1258.3 231.4M1254.3 231.4 L1262.3 231.4M1254.3 235.5 L1262.3 235.5M1258.3 235.5 L1258.3 254.1M1254.3 254.1 L1262.3 254.1M1255.8 256.6 L1260.8 256.6M1257.3 259.1 L1259.3 259.1M1213.6 221.2 L1205.7 221.2M1213.6 225.3 L1205.7 225.3M1213.6 229.4 L1205.7 229.4M1213.6 233.6 L1205.7 233.6M1213.6 237.7 L1205.7 237.7M1213.6 241.8 L1205.7 241.8M1213.6 245.9 L1205.7 245.9M1213.6 250.1 L1205.7 250.1M1213.6 254.2 L1205.7 254.2M1213.6 258.3 L1205.7 258.3M1213.6 262.4 L1205.7 262.4M1213.6 266.5 L1205.7 266.5M1213.6 270.7 L1205.7 270.7M1213.6 274.8 L1205.7 274.8M1213.6 278.9 L1205.7 278.9M1213.6 283.0 L1205.7 283.0M1213.6 287.2 L1205.7 287.2M1213.6 291.3 L1205.7 291.3M1213.6 295.4 L1205.7 295.4M1213.6 221.2 L1213.6 295.4M1213.6 253.9 L1225.5 253.9M1225.5 250.6 L1225.5 257.2M1227.5 251.9 L1227.5 255.9M1229.3 253.3 L1229.3 254.5M1279.0 319.2 L1205.7 319.2M1279.2 327.1 L1205.7 327.1M1279.2 325.8H1282.0V328.4H1279.2ZM1221.4 319.2 L1221.4 309.4 L1238.8 309.4M1242.4 309.4 L1276.7 309.4M1221.4 327.1 L1221.4 336.2 L1238.8 336.2M1242.4 336.2 L1276.7 336.2M1238.8 305.4 L1238.8 313.4M1242.4 305.4 L1242.4 313.4M1276.7 306.1 L1276.7 312.7M1278.7 307.4 L1278.7 311.4M1280.5 308.8 L1280.5 310.0M1238.8 332.2 L1238.8 340.2M1242.4 332.2 L1242.4 340.2M1276.7 332.9 L1276.7 339.5M1278.7 334.2 L1278.7 338.2M1280.5 335.6 L1280.5 336.8M1213.3 335.5 L1205.7 335.5M1213.3 339.6 L1205.7 339.6M1213.3 343.7 L1205.7 343.7M1213.3 347.7 L1205.7 347.7M1213.3 351.8 L1205.7 351.8M1213.3 335.5 L1213.3 351.8M1213.3 344.0 L1219.4 344.0M1219.4 340.7 L1219.4 347.3M1221.4 342.0 L1221.4 346.0M1223.2 343.4 L1223.2 344.6M1219.4 360.5 L1205.7 360.5M1219.4 357.2 L1219.4 363.8M1221.4 358.5 L1221.4 362.5M1223.2 359.9 L1223.2 361.1M1213.3 376.6 L1213.3 417.7M1213.3 385.2 L1205.7 385.2M1213.3 389.2 L1205.7 389.2M1213.3 393.3 L1205.7 393.3M1213.3 397.6 L1205.7 397.6M1213.3 409.6 L1205.7 409.6M1213.3 413.6 L1205.7 413.6M1213.3 417.7 L1205.7 417.7M1213.3 385.2 L1238.8 385.2M1242.4 385.2 L1276.7 385.2M1278.8 383.2 L1278.8 387.2M1280.6 384.6 L1280.6 385.8M1213.3 393.3 L1238.8 393.3M1242.4 393.3 L1276.7 393.3M1278.8 391.3 L1278.8 395.3M1280.6 392.7 L1280.6 393.9M1213.3 401.6 L1238.8 401.6M1242.4 401.6 L1276.7 401.6M1278.8 399.6 L1278.8 403.6M1280.6 401.0 L1280.6 402.2M1213.3 409.6 L1238.8 409.6M1242.4 409.6 L1276.7 409.6M1278.8 407.6 L1278.8 411.6M1280.6 409.0 L1280.6 410.2M1213.3 417.7 L1238.8 417.7M1242.4 417.7 L1276.7 417.7M1278.8 415.7 L1278.8 419.7M1280.6 417.1 L1280.6 418.3M1238.8 380.6 L1238.8 421.5M1242.4 380.6 L1242.4 421.5M1276.7 380.6 L1276.7 421.5M1251.2 426.1 L1205.7 426.1M1251.2 426.1 L1252.6 423.6 L1255.4 428.6 L1258.2 423.6 L1261.0 428.6 L1263.8 423.6 L1266.6 428.6 L1268.2 426.1 L1283.8 426.1M1283.8 426.1 L1285.8 424.4 L1291.4 424.4 L1291.4 427.8 L1285.8 427.8 L1283.8 426.1M1272.8 434.4 L1205.7 434.4M1211.5 438.3 L1205.7 438.3M1272.8 446.2 L1205.7 446.2M1211.5 462.4 L1205.7 462.4M1211.5 434.4 L1211.5 462.4M1221.4 434.4 L1221.4 438.0 L1238.8 438.0M1242.4 438.0 L1259.4 438.0M1238.8 435.0 L1238.8 441.4M1242.4 435.0 L1242.4 441.4M1259.4 434.7 L1259.4 441.3M1261.4 436.0 L1261.4 440.0M1263.2 437.4 L1263.2 438.6M1221.4 446.2 L1221.4 449.8 L1238.8 449.8M1242.4 449.8 L1259.4 449.8M1238.8 446.8 L1238.8 453.2M1242.4 446.8 L1242.4 453.2M1259.4 446.5 L1259.4 453.1M1261.4 447.8 L1261.4 451.8M1263.2 449.2 L1263.2 450.4M1272.8 479.2 L1205.7 479.2M1221.4 479.2 L1221.4 483.0 L1238.8 483.0M1242.4 483.0 L1258.8 483.0M1238.8 479.6 L1238.8 486.6M1242.4 479.6 L1242.4 486.6M1258.8 479.7 L1258.8 486.3M1260.8 481.0 L1260.8 485.0M1262.6 482.4 L1262.6 483.6M1272.8 491.7 L1205.7 491.7M1221.4 491.7 L1221.4 495.5 L1238.8 495.5M1242.4 495.5 L1258.8 495.5M1238.8 492.1 L1238.8 499.1M1242.4 492.1 L1242.4 499.1M1258.8 492.2 L1258.8 498.8M1260.8 493.5 L1260.8 497.5M1262.6 494.9 L1262.6 496.1M1276.9 520.2 L1205.7 520.2M1213.3 524.1 L1205.7 524.1M1276.9 528.5 L1205.7 528.5M1213.3 520.2 L1213.3 524.1M1225.8 520.2 L1225.8 512.1 L1246.7 512.1M1250.5 512.1 L1266.4 512.1M1246.7 508.1 L1246.7 516.1M1250.5 508.1 L1250.5 516.1M1266.4 508.8 L1266.4 515.4M1268.4 510.1 L1268.4 514.1M1270.2 511.5 L1270.2 512.7M1225.8 528.5 L1225.8 536.5 L1246.7 536.5M1250.5 536.5 L1266.4 536.5M1246.7 532.5 L1246.7 540.5M1250.5 532.5 L1250.5 540.5M1266.4 533.2 L1266.4 539.8M1268.4 534.5 L1268.4 538.5M1270.2 535.9 L1270.2 537.1M1229.2 553.2 L1205.7 553.2M1213.3 557.3 L1205.7 557.3M1213.3 553.2 L1213.3 557.3M1229.2 549.9 L1229.2 556.5M1231.2 551.2 L1231.2 555.2M1233.0 552.6 L1233.0 553.8M1252.4 581.2 L1205.7 581.2M1283.0 585.3 L1205.7 585.3M1283.0 585.3 L1283.0 573.6M1242.1 585.3 L1242.1 595.9M1238.1 595.9 L1246.1 595.9M1238.1 599.7 L1246.1 599.7M1242.1 599.7 L1242.1 616.5M1238.1 616.5 L1246.1 616.5M1239.6 619.0 L1244.6 619.0M1241.1 621.5 L1243.1 621.5M1252.4 573.6 L1252.4 595.9M1248.4 595.9 L1256.4 595.9M1248.4 599.7 L1256.4 599.7M1252.4 599.7 L1252.4 616.5M1248.4 616.5 L1256.4 616.5M1249.9 619.0 L1254.9 619.0M1251.4 621.5 L1253.4 621.5M1215.6 606.2 L1205.7 606.2M1215.6 602.9 L1215.6 609.5M1217.6 604.2 L1217.6 608.2M1219.4 605.6 L1219.4 606.8M1246.4 630.7 L1205.7 630.7M1235.6 630.7 L1235.6 646.5M1231.6 646.5 L1239.6 646.5M1231.6 650.3 L1239.6 650.3M1235.6 650.3 L1235.6 664.4M1231.6 664.4 L1239.6 664.4M1233.1 666.9 L1238.1 666.9M1234.6 669.4 L1236.6 669.4M1211.8 651.4 L1205.7 651.4M1211.8 655.4 L1205.7 655.4M1211.8 659.5 L1205.7 659.5M1211.8 663.5 L1205.7 663.5M1211.8 667.6 L1205.7 667.6M1211.8 671.6 L1205.7 671.6M1211.8 675.7 L1205.7 675.7M1211.8 651.4 L1211.8 675.7M1211.8 667.5 L1223.6 667.5M1223.6 664.2 L1223.6 670.8M1225.6 665.5 L1225.6 669.5M1227.4 666.9 L1227.4 668.1"/>
<path fill="none" stroke="#9a9a9a" stroke-width=".6" d="M661.0 215.2 L673.3 215.2M661.0 219.3 L673.3 219.3M661.0 223.4 L673.3 223.4M661.0 227.5 L673.3 227.5M661.0 231.6 L673.3 231.6M661.0 235.7 L673.3 235.7M661.0 239.8 L673.3 239.8M661.0 243.9 L673.3 243.9M661.0 248.0 L673.3 248.0M661.0 252.1 L673.3 252.1M661.0 256.2 L673.3 256.2M661.0 260.3 L673.3 260.3M661.0 264.4 L673.3 264.4M661.0 268.5 L673.3 268.5M661.0 272.6 L673.3 272.6M661.0 276.7 L673.3 276.7M661.0 280.8 L673.3 280.8M661.0 284.8 L673.3 284.8M661.0 288.9 L673.3 288.9M661.0 293.0 L673.3 293.0M661.0 297.1 L673.3 297.1M661.0 301.2 L673.3 301.2M661.0 305.3 L673.3 305.3M661.0 309.4 L673.3 309.4M661.0 313.5 L673.3 313.5M661.0 317.6 L673.3 317.6M661.0 321.7 L673.3 321.7M661.0 325.8 L673.3 325.8M661.0 329.9 L673.3 329.9M661.0 334.0 L673.3 334.0M661.0 338.1 L673.3 338.1M661.0 342.2 L673.3 342.2M661.0 346.3 L673.3 346.3M661.0 350.4 L673.3 350.4M661.0 354.4 L673.3 354.4M661.0 358.5 L673.3 358.5M661.0 362.6 L673.3 362.6M661.0 366.7 L673.3 366.7M661.0 370.8 L673.3 370.8M661.0 374.9 L673.3 374.9M661.0 379.0 L673.3 379.0M812.9 215.2 L800.6 215.2M812.9 219.3 L800.6 219.3M812.9 223.4 L800.6 223.4M812.9 227.5 L800.6 227.5M812.9 231.6 L800.6 231.6M812.9 235.7 L800.6 235.7M812.9 239.8 L800.6 239.8M812.9 243.9 L800.6 243.9M812.9 248.0 L800.6 248.0M812.9 252.1 L800.6 252.1M812.9 256.2 L800.6 256.2M812.9 260.3 L800.6 260.3M812.9 264.4 L800.6 264.4M812.9 268.5 L800.6 268.5M812.9 272.6 L800.6 272.6M812.9 276.7 L800.6 276.7M812.9 280.8 L800.6 280.8M812.9 284.8 L800.6 284.8M812.9 288.9 L800.6 288.9M812.9 293.0 L800.6 293.0M812.9 297.1 L800.6 297.1M812.9 301.2 L800.6 301.2M812.9 305.3 L800.6 305.3M812.9 309.4 L800.6 309.4M812.9 313.5 L800.6 313.5M812.9 317.6 L800.6 317.6M812.9 321.7 L800.6 321.7M812.9 325.8 L800.6 325.8M812.9 329.9 L800.6 329.9M812.9 334.0 L800.6 334.0M812.9 338.1 L800.6 338.1M812.9 342.2 L800.6 342.2M812.9 346.3 L800.6 346.3M812.9 350.4 L800.6 350.4M812.9 354.4 L800.6 354.4M812.9 358.5 L800.6 358.5M812.9 362.6 L800.6 362.6M812.9 366.7 L800.6 366.7M812.9 370.8 L800.6 370.8M812.9 374.9 L800.6 374.9M812.9 379.0 L800.6 379.0M661.0 411.4 L673.3 411.4M661.0 415.5 L673.3 415.5M661.0 419.6 L673.3 419.6M661.0 423.7 L673.3 423.7M661.0 427.9 L673.3 427.9M661.0 432.0 L673.3 432.0M661.0 436.1 L673.3 436.1M661.0 440.2 L673.3 440.2M661.0 444.3 L673.3 444.3M661.0 448.4 L673.3 448.4M661.0 452.5 L673.3 452.5M661.0 456.7 L673.3 456.7M661.0 460.8 L673.3 460.8M661.0 464.9 L673.3 464.9M661.0 469.0 L673.3 469.0M661.0 473.1 L673.3 473.1M661.0 477.2 L673.3 477.2M661.0 481.4 L673.3 481.4M661.0 485.5 L673.3 485.5M661.0 489.6 L673.3 489.6M661.0 493.7 L673.3 493.7M661.0 497.8 L673.3 497.8M661.0 501.9 L673.3 501.9M661.0 506.0 L673.3 506.0M661.0 510.2 L673.3 510.2M661.0 514.3 L673.3 514.3M661.0 518.4 L673.3 518.4M661.0 522.5 L673.3 522.5M661.0 559.1 L673.3 559.1M661.0 563.1 L673.3 563.1M661.0 567.0 L673.3 567.0M661.0 632.3 L673.3 632.3M661.0 636.4 L673.3 636.4M661.0 640.6 L673.3 640.6M661.0 698.2 L673.3 698.2M661.0 702.3 L673.3 702.3M661.0 706.4 L673.3 706.4M661.0 710.5 L673.3 710.5M661.0 714.6 L673.3 714.6M661.0 718.7 L673.3 718.7M661.0 722.7 L673.3 722.7M661.0 726.8 L673.3 726.8M661.0 730.9 L673.3 730.9M661.0 735.0 L673.3 735.0M812.9 452.4 L800.6 452.4M812.9 456.5 L800.6 456.5M812.9 460.6 L800.6 460.6M812.9 464.7 L800.6 464.7M812.9 468.8 L800.6 468.8M812.9 472.9 L800.6 472.9M812.9 477.0 L800.6 477.0M812.9 481.1 L800.6 481.1M812.9 485.2 L800.6 485.2M812.9 489.3 L800.6 489.3M812.9 493.4 L800.6 493.4M812.9 497.5 L800.6 497.5M812.9 501.6 L800.6 501.6M812.9 505.6 L800.6 505.6M812.9 509.7 L800.6 509.7M812.9 513.8 L800.6 513.8M812.9 517.9 L800.6 517.9M812.9 522.0 L800.6 522.0M812.9 526.1 L800.6 526.1M812.9 530.2 L800.6 530.2M812.9 534.3 L800.6 534.3M812.9 538.4 L800.6 538.4M812.9 542.5 L800.6 542.5M812.9 546.6 L800.6 546.6M812.9 550.7 L800.6 550.7M812.9 554.8 L800.6 554.8M812.9 558.9 L800.6 558.9M812.9 563.0 L800.6 563.0M812.9 567.1 L800.6 567.1M812.9 571.2 L800.6 571.2M812.9 575.3 L800.6 575.3M812.9 579.4 L800.6 579.4M812.9 583.5 L800.6 583.5M812.9 587.6 L800.6 587.6M812.9 591.7 L800.6 591.7M812.9 595.8 L800.6 595.8M812.9 599.9 L800.6 599.9M812.9 603.9 L800.6 603.9M812.9 608.0 L800.6 608.0M812.9 612.1 L800.6 612.1M812.9 616.2 L800.6 616.2M812.9 620.3 L800.6 620.3M812.9 624.4 L800.6 624.4M812.9 628.5 L800.6 628.5M812.9 632.6 L800.6 632.6M812.9 636.7 L800.6 636.7M812.9 640.8 L800.6 640.8M812.9 644.9 L800.6 644.9M812.9 649.0 L800.6 649.0M812.9 653.1 L800.6 653.1M812.9 657.2 L800.6 657.2M812.9 661.3 L800.6 661.3M812.9 665.4 L800.6 665.4M812.9 669.5 L800.6 669.5M812.9 673.6 L800.6 673.6M812.9 677.7 L800.6 677.7M812.9 681.8 L800.6 681.8M812.9 685.9 L800.6 685.9M812.9 690.0 L800.6 690.0M812.9 694.1 L800.6 694.1M812.9 698.2 L800.6 698.2M812.9 702.2 L800.6 702.2M812.9 706.3 L800.6 706.3M812.9 710.4 L800.6 710.4M812.9 714.5 L800.6 714.5M812.9 718.6 L800.6 718.6M812.9 722.7 L800.6 722.7M812.9 726.8 L800.6 726.8M812.9 730.9 L800.6 730.9M812.9 735.0 L800.6 735.0M812.9 739.1 L800.6 739.1M812.9 743.2 L800.6 743.2M812.9 747.3 L800.6 747.3M812.9 751.4 L800.6 751.4M1054.1 205.2 L1066.4 205.2M1054.1 209.3 L1066.4 209.3M1054.1 213.4 L1066.4 213.4M1054.1 217.4 L1066.4 217.4M1054.1 221.5 L1066.4 221.5M1054.1 225.6 L1066.4 225.6M1054.1 229.7 L1066.4 229.7M1054.1 233.8 L1066.4 233.8M1054.1 237.9 L1066.4 237.9M1054.1 241.9 L1066.4 241.9M1054.1 246.0 L1066.4 246.0M1054.1 250.1 L1066.4 250.1M1054.1 254.2 L1066.4 254.2M1054.1 258.3 L1066.4 258.3M1054.1 262.4 L1066.4 262.4M1054.1 266.4 L1066.4 266.4M1054.1 270.5 L1066.4 270.5M1054.1 274.6 L1066.4 274.6M1054.1 278.7 L1066.4 278.7M1054.1 282.8 L1066.4 282.8M1054.1 286.9 L1066.4 286.9M1054.1 290.9 L1066.4 290.9M1054.1 295.0 L1066.4 295.0M1054.1 299.1 L1066.4 299.1M1054.1 303.2 L1066.4 303.2M1054.1 307.3 L1066.4 307.3M1054.1 311.4 L1066.4 311.4M1054.1 315.4 L1066.4 315.4M1054.1 319.5 L1066.4 319.5M1054.1 323.6 L1066.4 323.6M1054.1 327.7 L1066.4 327.7M1054.1 331.8 L1066.4 331.8M1054.1 335.9 L1066.4 335.9M1054.1 339.9 L1066.4 339.9M1054.1 344.0 L1066.4 344.0M1054.1 348.1 L1066.4 348.1M1054.1 352.2 L1066.4 352.2M1054.1 356.3 L1066.4 356.3M1054.1 360.4 L1066.4 360.4M1054.1 364.4 L1066.4 364.4M1054.1 368.5 L1066.4 368.5M1054.1 372.6 L1066.4 372.6M1054.1 376.7 L1066.4 376.7M1054.1 380.8 L1066.4 380.8M1054.1 384.9 L1066.4 384.9M1054.1 388.9 L1066.4 388.9M1054.1 393.0 L1066.4 393.0M1054.1 397.1 L1066.4 397.1M1054.1 401.2 L1066.4 401.2M1054.1 405.3 L1066.4 405.3M1054.1 409.4 L1066.4 409.4M1054.1 413.4 L1066.4 413.4M1054.1 417.5 L1066.4 417.5M1054.1 421.6 L1066.4 421.6M1054.1 425.7 L1066.4 425.7M1054.1 429.8 L1066.4 429.8M1054.1 433.9 L1066.4 433.9M1054.1 437.9 L1066.4 437.9M1054.1 442.0 L1066.4 442.0M1054.1 446.1 L1066.4 446.1M1205.7 205.2 L1193.4 205.2M1205.7 209.2 L1193.4 209.2M1205.7 213.2 L1193.4 213.2M1205.7 221.2 L1193.4 221.2M1205.7 225.3 L1193.4 225.3M1205.7 229.4 L1193.4 229.4M1205.7 233.6 L1193.4 233.6M1205.7 237.7 L1193.4 237.7M1205.7 241.8 L1193.4 241.8M1205.7 245.9 L1193.4 245.9M1205.7 250.1 L1193.4 250.1M1205.7 254.2 L1193.4 254.2M1205.7 258.3 L1193.4 258.3M1205.7 262.4 L1193.4 262.4M1205.7 266.5 L1193.4 266.5M1205.7 270.7 L1193.4 270.7M1205.7 274.8 L1193.4 274.8M1205.7 278.9 L1193.4 278.9M1205.7 283.0 L1193.4 283.0M1205.7 287.2 L1193.4 287.2M1205.7 291.3 L1193.4 291.3M1205.7 295.4 L1193.4 295.4M1205.7 319.2 L1193.4 319.2M1205.7 327.1 L1193.4 327.1M1205.7 335.5 L1193.4 335.5M1205.7 339.6 L1193.4 339.6M1205.7 343.7 L1193.4 343.7M1205.7 347.7 L1193.4 347.7M1205.7 351.8 L1193.4 351.8M1205.7 360.5 L1193.4 360.5M1205.7 385.2 L1193.4 385.2M1205.7 389.2 L1193.4 389.2M1205.7 393.3 L1193.4 393.3M1205.7 397.6 L1193.4 397.6M1205.7 409.6 L1193.4 409.6M1205.7 413.6 L1193.4 413.6M1205.7 417.7 L1193.4 417.7M1205.7 426.1 L1193.4 426.1M1205.7 434.4 L1193.4 434.4M1205.7 438.3 L1193.4 438.3M1205.7 446.2 L1193.4 446.2M1205.7 462.4 L1193.4 462.4M1205.7 479.2 L1193.4 479.2M1205.7 491.7 L1193.4 491.7M1205.7 520.2 L1193.4 520.2M1205.7 524.1 L1193.4 524.1M1205.7 528.5 L1193.4 528.5M1205.7 553.2 L1193.4 553.2M1205.7 557.3 L1193.4 557.3M1205.7 581.2 L1193.4 581.2M1205.7 585.3 L1193.4 585.3M1205.7 606.2 L1193.4 606.2M1205.7 630.7 L1193.4 630.7M1205.7 651.4 L1193.4 651.4M1205.7 655.4 L1193.4 655.4M1205.7 659.5 L1193.4 659.5M1205.7 663.5 L1193.4 663.5M1205.7 667.6 L1193.4 667.6M1205.7 671.6 L1193.4 671.6M1205.7 675.7 L1193.4 675.7"/>
<path fill="none" stroke="#444" stroke-width="1.5" d="M582.9 235.7 L592.1 235.7M621.2 235.7 L631.5 235.7M885.4 219.5 L895.5 219.5M885.4 239.8 L895.5 239.8M580.6 411.4 L590.3 411.4M619.5 411.4 L629.8 411.4"/>
<path fill="none" stroke="#555" stroke-width=".7" stroke-dasharray="2 1.6" d="M1225.2 329.8H1301.7V342.3H1225.2ZM1223.2 436.0H1295.5V442.4H1223.2ZM1223.2 447.8H1295.5V454.2H1223.2Z"/>
<path fill="none" stroke="#333" stroke-width=".8" d="M1310.6 170.2H1453.4V219.2H1310.6ZM1310.6 178.7 L1453.4 178.7M1310.6 186.4 L1453.4 186.4M1310.6 194.4 L1453.4 194.4M1310.6 202.8 L1453.4 202.8M1310.6 211.2 L1453.4 211.2M1335.7 178.7 L1335.7 219.2M1396.5 178.7 L1396.5 219.2M1433.4 178.7 L1433.4 219.2"/>
<path fill="#111" d="M647.6 214.3h1.9v1.9h-1.9zM647.6 218.4h1.9v1.9h-1.9zM647.6 222.5h1.9v1.9h-1.9zM647.6 226.6h1.9v1.9h-1.9zM647.6 230.7h1.9v1.9h-1.9zM647.6 234.8h1.9v1.9h-1.9zM647.6 238.9h1.9v1.9h-1.9zM647.6 243.0h1.9v1.9h-1.9zM647.6 247.1h1.9v1.9h-1.9zM647.6 251.1h1.9v1.9h-1.9zM647.6 255.2h1.9v1.9h-1.9zM647.6 259.3h1.9v1.9h-1.9zM647.6 263.4h1.9v1.9h-1.9zM647.6 267.5h1.9v1.9h-1.9zM647.6 271.6h1.9v1.9h-1.9zM647.6 275.7h1.9v1.9h-1.9zM647.6 279.8h1.9v1.9h-1.9zM647.6 283.9h1.9v1.9h-1.9zM647.6 288.0h1.9v1.9h-1.9zM647.6 292.1h1.9v1.9h-1.9zM647.6 296.2h1.9v1.9h-1.9zM647.6 300.3h1.9v1.9h-1.9zM647.6 304.4h1.9v1.9h-1.9zM647.6 308.5h1.9v1.9h-1.9zM647.6 312.6h1.9v1.9h-1.9zM647.6 316.7h1.9v1.9h-1.9zM647.6 320.7h1.9v1.9h-1.9zM647.6 324.8h1.9v1.9h-1.9zM647.6 328.9h1.9v1.9h-1.9zM647.6 333.0h1.9v1.9h-1.9zM647.6 337.1h1.9v1.9h-1.9zM647.6 341.2h1.9v1.9h-1.9zM647.6 345.3h1.9v1.9h-1.9zM647.6 349.4h1.9v1.9h-1.9zM647.6 353.5h1.9v1.9h-1.9zM647.6 357.6h1.9v1.9h-1.9zM647.6 361.7h1.9v1.9h-1.9zM647.6 365.8h1.9v1.9h-1.9zM647.6 369.9h1.9v1.9h-1.9zM647.6 374.0h1.9v1.9h-1.9zM647.6 234.7h1.9v1.9h-1.9zM567.8 247.0h1.9v1.9h-1.9zM567.8 255.0h1.9v1.9h-1.9zM567.8 263.1h1.9v1.9h-1.9zM567.8 271.2h1.9v1.9h-1.9zM567.8 279.3h1.9v1.9h-1.9zM567.8 287.4h1.9v1.9h-1.9zM567.8 295.4h1.9v1.9h-1.9zM567.8 303.5h1.9v1.9h-1.9zM567.8 311.6h1.9v1.9h-1.9zM567.8 319.7h1.9v1.9h-1.9zM567.8 327.8h1.9v1.9h-1.9zM567.8 335.8h1.9v1.9h-1.9zM567.8 343.9h1.9v1.9h-1.9zM821.9 214.3h1.9v1.9h-1.9zM821.9 218.4h1.9v1.9h-1.9zM821.9 222.5h1.9v1.9h-1.9zM821.9 226.6h1.9v1.9h-1.9zM821.9 230.7h1.9v1.9h-1.9zM821.9 234.8h1.9v1.9h-1.9zM821.9 238.9h1.9v1.9h-1.9zM821.9 243.0h1.9v1.9h-1.9zM821.9 247.1h1.9v1.9h-1.9zM821.9 251.1h1.9v1.9h-1.9zM821.9 255.2h1.9v1.9h-1.9zM821.9 259.3h1.9v1.9h-1.9zM821.9 263.4h1.9v1.9h-1.9zM821.9 267.5h1.9v1.9h-1.9zM821.9 271.6h1.9v1.9h-1.9zM821.9 275.7h1.9v1.9h-1.9zM821.9 279.8h1.9v1.9h-1.9zM821.9 283.9h1.9v1.9h-1.9zM821.9 288.0h1.9v1.9h-1.9zM821.9 292.1h1.9v1.9h-1.9zM821.9 296.2h1.9v1.9h-1.9zM821.9 300.3h1.9v1.9h-1.9zM821.9 304.4h1.9v1.9h-1.9zM821.9 308.5h1.9v1.9h-1.9zM821.9 312.6h1.9v1.9h-1.9zM821.9 316.7h1.9v1.9h-1.9zM821.9 320.7h1.9v1.9h-1.9zM821.9 324.8h1.9v1.9h-1.9zM821.9 328.9h1.9v1.9h-1.9zM821.9 333.0h1.9v1.9h-1.9zM821.9 337.1h1.9v1.9h-1.9zM821.9 341.2h1.9v1.9h-1.9zM821.9 345.3h1.9v1.9h-1.9zM821.9 349.4h1.9v1.9h-1.9zM821.9 353.5h1.9v1.9h-1.9zM821.9 357.6h1.9v1.9h-1.9zM821.9 361.7h1.9v1.9h-1.9zM821.9 365.8h1.9v1.9h-1.9zM821.9 369.9h1.9v1.9h-1.9zM821.9 374.0h1.9v1.9h-1.9zM866.6 238.9h1.9v1.9h-1.9zM866.6 248.9h1.9v1.9h-1.9zM866.6 259.0h1.9v1.9h-1.9zM866.6 269.1h1.9v1.9h-1.9zM866.6 279.1h1.9v1.9h-1.9zM866.6 289.2h1.9v1.9h-1.9zM866.6 299.3h1.9v1.9h-1.9zM866.6 309.3h1.9v1.9h-1.9zM866.6 319.4h1.9v1.9h-1.9zM866.6 329.5h1.9v1.9h-1.9zM866.6 339.6h1.9v1.9h-1.9zM866.6 349.6h1.9v1.9h-1.9zM866.6 359.7h1.9v1.9h-1.9zM653.8 414.6h1.9v1.9h-1.9zM653.8 418.7h1.9v1.9h-1.9zM653.8 422.8h1.9v1.9h-1.9zM653.8 426.9h1.9v1.9h-1.9zM653.8 431.0h1.9v1.9h-1.9zM653.8 435.1h1.9v1.9h-1.9zM653.8 439.3h1.9v1.9h-1.9zM653.8 443.4h1.9v1.9h-1.9zM653.8 447.5h1.9v1.9h-1.9zM653.8 451.6h1.9v1.9h-1.9zM653.8 455.7h1.9v1.9h-1.9zM653.8 459.8h1.9v1.9h-1.9zM653.8 463.9h1.9v1.9h-1.9zM653.8 468.1h1.9v1.9h-1.9zM653.8 472.2h1.9v1.9h-1.9zM653.8 476.3h1.9v1.9h-1.9zM653.8 480.4h1.9v1.9h-1.9zM653.8 484.5h1.9v1.9h-1.9zM653.8 488.6h1.9v1.9h-1.9zM653.8 492.8h1.9v1.9h-1.9zM653.8 496.9h1.9v1.9h-1.9zM653.8 501.0h1.9v1.9h-1.9zM653.8 505.1h1.9v1.9h-1.9zM653.8 509.2h1.9v1.9h-1.9zM653.8 513.3h1.9v1.9h-1.9zM653.8 517.4h1.9v1.9h-1.9zM643.3 410.2h2.4v2.4h-2.4zM643.3 418.6h2.4v2.4h-2.4zM570.0 418.9h1.9v1.9h-1.9zM570.0 427.1h1.9v1.9h-1.9zM570.0 435.3h1.9v1.9h-1.9zM570.0 443.5h1.9v1.9h-1.9zM570.0 451.7h1.9v1.9h-1.9zM570.0 460.0h1.9v1.9h-1.9zM570.0 468.2h1.9v1.9h-1.9zM570.0 476.4h1.9v1.9h-1.9zM570.0 484.6h1.9v1.9h-1.9zM651.9 558.1h1.9v1.9h-1.9zM651.9 562.1h1.9v1.9h-1.9zM611.0 558.1h1.9v1.9h-1.9zM633.4 558.1h1.9v1.9h-1.9zM647.3 631.3h1.9v1.9h-1.9zM647.3 635.5h1.9v1.9h-1.9zM619.0 631.3h1.9v1.9h-1.9zM635.5 631.3h1.9v1.9h-1.9zM643.6 701.3h1.9v1.9h-1.9zM643.6 705.4h1.9v1.9h-1.9zM643.6 709.5h1.9v1.9h-1.9zM643.6 713.6h1.9v1.9h-1.9zM643.6 717.7h1.9v1.9h-1.9zM643.6 721.8h1.9v1.9h-1.9zM643.6 725.9h1.9v1.9h-1.9zM643.6 730.0h1.9v1.9h-1.9zM643.6 734.1h1.9v1.9h-1.9zM567.9 734.0h1.9v1.9h-1.9zM567.9 775.0h1.9v1.9h-1.9zM580.4 734.0h1.9v1.9h-1.9zM580.4 775.0h1.9v1.9h-1.9zM594.5 734.0h1.9v1.9h-1.9zM594.5 775.0h1.9v1.9h-1.9zM606.6 734.0h1.9v1.9h-1.9zM606.6 775.0h1.9v1.9h-1.9zM619.2 734.0h1.9v1.9h-1.9zM619.2 775.0h1.9v1.9h-1.9zM631.6 734.0h1.9v1.9h-1.9zM590.3 734.0h1.9v1.9h-1.9zM625.2 775.0h1.9v1.9h-1.9zM826.0 455.5h1.9v1.9h-1.9zM826.0 459.6h1.9v1.9h-1.9zM826.0 463.7h1.9v1.9h-1.9zM826.0 467.8h1.9v1.9h-1.9zM826.0 471.9h1.9v1.9h-1.9zM826.0 476.0h1.9v1.9h-1.9zM826.0 480.1h1.9v1.9h-1.9zM826.0 484.2h1.9v1.9h-1.9zM826.0 488.3h1.9v1.9h-1.9zM826.0 492.4h1.9v1.9h-1.9zM826.0 496.5h1.9v1.9h-1.9zM826.0 500.6h1.9v1.9h-1.9zM826.0 504.7h1.9v1.9h-1.9zM826.0 508.8h1.9v1.9h-1.9zM826.0 512.9h1.9v1.9h-1.9zM826.0 517.0h1.9v1.9h-1.9zM826.0 521.1h1.9v1.9h-1.9zM826.0 525.2h1.9v1.9h-1.9zM826.0 529.3h1.9v1.9h-1.9zM826.0 533.4h1.9v1.9h-1.9zM826.0 537.5h1.9v1.9h-1.9zM826.0 541.6h1.9v1.9h-1.9zM826.0 545.7h1.9v1.9h-1.9zM826.0 549.8h1.9v1.9h-1.9zM826.0 553.8h1.9v1.9h-1.9zM826.0 557.9h1.9v1.9h-1.9zM826.0 562.0h1.9v1.9h-1.9zM826.0 566.1h1.9v1.9h-1.9zM826.0 570.2h1.9v1.9h-1.9zM826.0 574.3h1.9v1.9h-1.9zM826.0 578.4h1.9v1.9h-1.9zM826.0 582.5h1.9v1.9h-1.9zM826.0 586.6h1.9v1.9h-1.9zM826.0 590.7h1.9v1.9h-1.9zM826.0 594.8h1.9v1.9h-1.9zM826.0 598.9h1.9v1.9h-1.9zM826.0 603.0h1.9v1.9h-1.9zM826.0 607.1h1.9v1.9h-1.9zM826.0 611.2h1.9v1.9h-1.9zM826.0 615.3h1.9v1.9h-1.9zM826.0 619.4h1.9v1.9h-1.9zM826.0 623.5h1.9v1.9h-1.9zM826.0 627.6h1.9v1.9h-1.9zM826.0 631.7h1.9v1.9h-1.9zM826.0 635.8h1.9v1.9h-1.9zM826.0 639.9h1.9v1.9h-1.9zM826.0 644.0h1.9v1.9h-1.9zM826.0 648.1h1.9v1.9h-1.9zM826.0 652.1h1.9v1.9h-1.9zM826.0 656.2h1.9v1.9h-1.9zM826.0 660.3h1.9v1.9h-1.9zM826.0 664.4h1.9v1.9h-1.9zM826.0 668.5h1.9v1.9h-1.9zM826.0 672.6h1.9v1.9h-1.9zM826.0 676.7h1.9v1.9h-1.9zM826.0 680.8h1.9v1.9h-1.9zM826.0 684.9h1.9v1.9h-1.9zM826.0 689.0h1.9v1.9h-1.9zM826.0 693.1h1.9v1.9h-1.9zM826.0 697.2h1.9v1.9h-1.9zM826.0 701.3h1.9v1.9h-1.9zM826.0 705.4h1.9v1.9h-1.9zM826.0 709.5h1.9v1.9h-1.9zM826.0 713.6h1.9v1.9h-1.9zM826.0 717.7h1.9v1.9h-1.9zM826.0 721.8h1.9v1.9h-1.9zM826.0 725.9h1.9v1.9h-1.9zM826.0 730.0h1.9v1.9h-1.9zM826.0 734.1h1.9v1.9h-1.9zM826.0 738.2h1.9v1.9h-1.9zM826.0 742.3h1.9v1.9h-1.9zM826.0 746.4h1.9v1.9h-1.9zM1044.2 208.3h1.9v1.9h-1.9zM1044.2 212.4h1.9v1.9h-1.9zM1044.2 216.5h1.9v1.9h-1.9zM1044.2 220.6h1.9v1.9h-1.9zM1044.2 224.7h1.9v1.9h-1.9zM1044.2 228.7h1.9v1.9h-1.9zM1044.2 232.8h1.9v1.9h-1.9zM1044.2 236.9h1.9v1.9h-1.9zM1044.2 241.0h1.9v1.9h-1.9zM1044.2 245.1h1.9v1.9h-1.9zM1044.2 249.2h1.9v1.9h-1.9zM1044.2 253.2h1.9v1.9h-1.9zM1044.2 257.3h1.9v1.9h-1.9zM1044.2 261.4h1.9v1.9h-1.9zM1044.2 265.5h1.9v1.9h-1.9zM1044.2 269.6h1.9v1.9h-1.9zM1044.2 273.7h1.9v1.9h-1.9zM1044.2 277.7h1.9v1.9h-1.9zM1044.2 281.8h1.9v1.9h-1.9zM1044.2 285.9h1.9v1.9h-1.9zM1044.2 290.0h1.9v1.9h-1.9zM1044.2 294.1h1.9v1.9h-1.9zM1044.2 298.2h1.9v1.9h-1.9zM1044.2 302.2h1.9v1.9h-1.9zM1044.2 306.3h1.9v1.9h-1.9zM1044.2 310.4h1.9v1.9h-1.9zM1044.2 314.5h1.9v1.9h-1.9zM1044.2 318.6h1.9v1.9h-1.9zM1044.2 322.7h1.9v1.9h-1.9zM1044.2 326.7h1.9v1.9h-1.9zM1044.2 330.8h1.9v1.9h-1.9zM1044.2 334.9h1.9v1.9h-1.9zM1044.2 339.0h1.9v1.9h-1.9zM1044.2 343.1h1.9v1.9h-1.9zM1044.2 347.2h1.9v1.9h-1.9zM1044.2 351.2h1.9v1.9h-1.9zM1044.2 355.3h1.9v1.9h-1.9zM1044.2 359.4h1.9v1.9h-1.9zM1044.2 363.5h1.9v1.9h-1.9zM1044.2 367.6h1.9v1.9h-1.9zM1044.2 371.7h1.9v1.9h-1.9zM1044.2 375.7h1.9v1.9h-1.9zM1044.2 379.8h1.9v1.9h-1.9zM1044.2 383.9h1.9v1.9h-1.9zM1044.2 388.0h1.9v1.9h-1.9zM1044.2 392.1h1.9v1.9h-1.9zM1044.2 396.2h1.9v1.9h-1.9zM1044.2 400.2h1.9v1.9h-1.9zM1044.2 404.3h1.9v1.9h-1.9zM1044.2 408.4h1.9v1.9h-1.9zM1044.2 412.5h1.9v1.9h-1.9zM1044.2 416.6h1.9v1.9h-1.9zM1044.2 420.7h1.9v1.9h-1.9zM1044.2 424.7h1.9v1.9h-1.9zM1044.2 428.8h1.9v1.9h-1.9zM1044.2 432.9h1.9v1.9h-1.9zM1044.2 437.0h1.9v1.9h-1.9zM1044.2 441.1h1.9v1.9h-1.9zM1044.2 445.2h1.9v1.9h-1.9zM1212.6 204.2h1.9v1.9h-1.9zM1243.5 204.2h1.9v1.9h-1.9zM1257.3 212.2h1.9v1.9h-1.9zM1212.6 224.4h1.9v1.9h-1.9zM1212.6 228.5h1.9v1.9h-1.9zM1212.6 232.6h1.9v1.9h-1.9zM1212.6 236.7h1.9v1.9h-1.9zM1212.6 240.9h1.9v1.9h-1.9zM1212.6 245.0h1.9v1.9h-1.9zM1212.6 249.1h1.9v1.9h-1.9zM1212.6 253.2h1.9v1.9h-1.9zM1212.6 257.3h1.9v1.9h-1.9zM1212.6 261.5h1.9v1.9h-1.9zM1212.6 265.6h1.9v1.9h-1.9zM1212.6 269.7h1.9v1.9h-1.9zM1212.6 273.8h1.9v1.9h-1.9zM1212.6 278.0h1.9v1.9h-1.9zM1212.6 282.1h1.9v1.9h-1.9zM1212.6 286.2h1.9v1.9h-1.9zM1212.6 290.3h1.9v1.9h-1.9zM1220.5 318.2h1.9v1.9h-1.9zM1220.5 326.2h1.9v1.9h-1.9zM1212.3 338.6h1.9v1.9h-1.9zM1212.3 342.7h1.9v1.9h-1.9zM1212.3 346.8h1.9v1.9h-1.9zM1212.3 384.2h1.9v1.9h-1.9zM1212.3 388.3h1.9v1.9h-1.9zM1212.3 392.4h1.9v1.9h-1.9zM1212.3 396.7h1.9v1.9h-1.9zM1212.3 408.7h1.9v1.9h-1.9zM1212.3 412.7h1.9v1.9h-1.9zM1212.3 416.8h1.9v1.9h-1.9zM1212.3 400.7h1.9v1.9h-1.9zM1210.5 433.4h1.9v1.9h-1.9zM1210.5 437.4h1.9v1.9h-1.9zM1220.5 433.4h1.9v1.9h-1.9zM1220.5 445.2h1.9v1.9h-1.9zM1220.5 478.2h1.9v1.9h-1.9zM1220.5 490.8h1.9v1.9h-1.9zM1212.3 519.3h1.9v1.9h-1.9zM1224.8 519.3h1.9v1.9h-1.9zM1224.8 527.5h1.9v1.9h-1.9zM1212.3 552.2h1.9v1.9h-1.9zM1251.5 580.2h1.9v1.9h-1.9zM1241.1 584.3h1.9v1.9h-1.9zM1234.6 629.8h1.9v1.9h-1.9zM1210.8 654.5h1.9v1.9h-1.9zM1210.8 658.5h1.9v1.9h-1.9zM1210.8 662.6h1.9v1.9h-1.9zM1210.8 666.6h1.9v1.9h-1.9zM1210.8 670.7h1.9v1.9h-1.9z"/>
<circle cx="571.0" cy="211.5" r="1.8" fill="#fff" stroke="#333" stroke-width=".6"/>
<circle cx="867.3" cy="198.5" r="1.8" fill="#fff" stroke="#333" stroke-width=".6"/>
<circle cx="573.0" cy="532.6" r="1.8" fill="#fff" stroke="#333" stroke-width=".6"/>
<circle cx="575.0" cy="612.4" r="1.8" fill="#fff" stroke="#333" stroke-width=".6"/>
<circle cx="591.4" cy="675.5" r="1.8" fill="#fff" stroke="#333" stroke-width=".6"/>
<circle cx="1270.6" cy="190.5" r="1.8" fill="#fff" stroke="#333" stroke-width=".6"/>
<circle cx="1244.4" cy="190.5" r="1.8" fill="#fff" stroke="#333" stroke-width=".6"/>
<text font-size="2.6" transform="translate(1254.6 254) rotate(-90)">GND</text>
<circle cx="1280.8" cy="319.2" r="1.8" fill="#fff" stroke="#333" stroke-width=".6"/>
<circle cx="1213.3" cy="374.8" r="1.8" fill="#fff" stroke="#333" stroke-width=".6"/>
<circle cx="1257" cy="426" r="13.3" fill="none" stroke="#555" stroke-width=".6"/>
<circle cx="1274.7" cy="434.4" r="2" fill="#fff" stroke="#333" stroke-width=".6"/>
<circle cx="1274.7" cy="446.2" r="2" fill="#fff" stroke="#333" stroke-width=".6"/>
<circle cx="1274.7" cy="479.2" r="2" fill="#fff" stroke="#333" stroke-width=".6"/>
<circle cx="1274.7" cy="491.7" r="2" fill="#fff" stroke="#333" stroke-width=".6"/>
<circle cx="1278.8" cy="520.2" r="2" fill="#fff" stroke="#333" stroke-width=".6"/>
<circle cx="1278.8" cy="528.5" r="2" fill="#fff" stroke="#333" stroke-width=".6"/>
<circle cx="1252.4" cy="571.7" r="2" fill="#fff" stroke="#333" stroke-width=".6"/>
<circle cx="1283.0" cy="571.7" r="2" fill="#fff" stroke="#333" stroke-width=".6"/>
<circle cx="1248.2" cy="630.7" r="2" fill="#fff" stroke="#333" stroke-width=".6"/>
<g font-size="6.4"><text x="576.8" y="168.9" text-anchor="middle" fill="#222">6</text><text x="733.0" y="168.9" text-anchor="middle" fill="#222">5</text><text x="899.0" y="168.9" text-anchor="middle" fill="#222">4</text><text x="1055.0" y="168.9" text-anchor="middle" fill="#222">3</text><text x="1212.0" y="168.9" text-anchor="middle" fill="#222">2</text><text x="1378.0" y="168.9" text-anchor="middle" fill="#222">1</text></g>
<g font-size="8.4"><text x="491.2" y="244.0" text-anchor="middle" fill="#222">E</text><text x="1457.6" y="244.0" text-anchor="middle" fill="#222">E</text><text x="491.2" y="375.0" text-anchor="middle" fill="#222">D</text><text x="1457.6" y="375.0" text-anchor="middle" fill="#222">D</text><text x="491.2" y="512.3" text-anchor="middle" fill="#222">C</text><text x="1457.6" y="512.3" text-anchor="middle" fill="#222">C</text><text x="1088.3" y="833.2" textLength="78.4" lengthAdjust="spacingAndGlyphs" fill="#222">1_MT6735-POWER</text></g>
<g font-size="7"><text x="491.2" y="646.8" text-anchor="middle" fill="#222">B</text><text x="1457.6" y="646.8" text-anchor="middle" fill="#222">B</text><text x="491.2" y="783.0" text-anchor="middle" fill="#222">A</text><text x="1457.6" y="783.0" text-anchor="middle" fill="#222">A</text></g>
<g font-size="2.9"><text x="675.4" y="178.3" textLength="9.5" lengthAdjust="spacingAndGlyphs">U900-E</text><text x="673.0" y="795.0" textLength="15.0" lengthAdjust="spacingAndGlyphs">MT6735M</text><text x="907.7" y="225.7" textLength="36.8" lengthAdjust="spacingAndGlyphs">VPROC_PMIC_FB_6625</text><text x="902.0" y="246.0" textLength="46.0" lengthAdjust="spacingAndGlyphs">GND_VPROC_PMIC_FB_6328</text><text x="1069.0" y="177.4" textLength="10.6" lengthAdjust="spacingAndGlyphs">U900-F</text><text x="1238.2" y="230.4">1uF</text><text x="1249.4" y="230.2" textLength="7.6" lengthAdjust="spacingAndGlyphs">C164</text><text x="1235.2" y="240.2" textLength="7.6" lengthAdjust="spacingAndGlyphs">C165</text><text x="1248.2" y="240.8" textLength="9.4" lengthAdjust="spacingAndGlyphs">100nF</text><text x="1227.0" y="308.6" textLength="9.4" lengthAdjust="spacingAndGlyphs">100nF</text><text x="1243.6" y="308.4" textLength="7.8" lengthAdjust="spacingAndGlyphs">C150</text><text x="1226.4" y="335.6" textLength="9.4" lengthAdjust="spacingAndGlyphs">100nF</text><text x="1243.6" y="335.2" textLength="7.8" lengthAdjust="spacingAndGlyphs">C151</text><text x="1237.6" y="384.5" text-anchor="end" textLength="9.0" lengthAdjust="spacingAndGlyphs">100nF</text><text x="1243.8" y="384.5" textLength="7.6" lengthAdjust="spacingAndGlyphs">C152</text><text x="1237.6" y="392.6" text-anchor="end" textLength="9.0" lengthAdjust="spacingAndGlyphs">100nF</text><text x="1243.8" y="392.6" textLength="7.6" lengthAdjust="spacingAndGlyphs">C153</text><text x="1237.6" y="400.9" text-anchor="end" textLength="9.0" lengthAdjust="spacingAndGlyphs">100nF</text><text x="1243.8" y="400.9" textLength="7.6" lengthAdjust="spacingAndGlyphs">C154</text><text x="1237.6" y="408.9" text-anchor="end" textLength="9.0" lengthAdjust="spacingAndGlyphs">100nF</text><text x="1243.8" y="408.9" textLength="7.6" lengthAdjust="spacingAndGlyphs">C155</text><text x="1237.6" y="417.0" text-anchor="end" textLength="9.0" lengthAdjust="spacingAndGlyphs">100nF</text><text x="1243.8" y="417.0" textLength="7.6" lengthAdjust="spacingAndGlyphs">C156</text><text x="1294.4" y="426.6" textLength="11.6" lengthAdjust="spacingAndGlyphs">REFBNC</text><text x="1234.5" y="511.3" textLength="7.6" lengthAdjust="spacingAndGlyphs">C159</text><text x="1252.0" y="511.3" textLength="9.0" lengthAdjust="spacingAndGlyphs">220nF</text><text x="1236.4" y="535.7" textLength="7.6" lengthAdjust="spacingAndGlyphs">C160</text><text x="1252.0" y="535.7" textLength="9.0" lengthAdjust="spacingAndGlyphs">220nF</text><text x="1233.3" y="594.0" textLength="7.6" lengthAdjust="spacingAndGlyphs">C148</text><text x="1236.5" y="604.0">1uF</text><text x="1254.0" y="595.0" textLength="7.8" lengthAdjust="spacingAndGlyphs">C158</text><text x="1254.0" y="602.8" textLength="9.0" lengthAdjust="spacingAndGlyphs">100nF</text><text x="1244.4" y="647.6" textLength="7.8" lengthAdjust="spacingAndGlyphs">C144</text><text x="1243.0" y="653.4" textLength="9.0" lengthAdjust="spacingAndGlyphs">100nF</text><text x="1380.8" y="176.6" text-anchor="middle" textLength="31.6" lengthAdjust="spacingAndGlyphs" fill="#111">REVISION RECORD</text><text x="1322.9" y="184.6" text-anchor="middle" textLength="6.2" lengthAdjust="spacingAndGlyphs" fill="#111">LTR</text><text x="1363.7" y="184.6" text-anchor="middle" textLength="12.4" lengthAdjust="spacingAndGlyphs" fill="#111">ECO NO:</text><text x="1413.4" y="184.6" text-anchor="middle" textLength="19.4" lengthAdjust="spacingAndGlyphs" fill="#111">APPROVED:</text><text x="1440.5" y="184.6" text-anchor="middle" textLength="9.6" lengthAdjust="spacingAndGlyphs" fill="#111">DATE:</text></g>
<g font-size="7.3"><text x="733.1" y="189.3" text-anchor="middle" textLength="45.4" lengthAdjust="spacingAndGlyphs" fill="#222">MT6735-SBS</text><text x="1121.6" y="187.4" text-anchor="middle" textLength="45.2" lengthAdjust="spacingAndGlyphs" fill="#222">MT6735-SBS</text><text x="839.4" y="808.6" textLength="182.6" lengthAdjust="spacingAndGlyphs" fill="#222">Shanghai RagenTek Communication Technology Co.,Ltd</text></g>
<g font-size="6.3"><text x="681.7" y="200.4" textLength="18.8" lengthAdjust="spacingAndGlyphs" fill="#222">VOCRE</text><text x="746.9" y="200.4" textLength="19.4" lengthAdjust="spacingAndGlyphs" fill="#222">VPROC</text><text x="681.7" y="404.7" textLength="13.6" lengthAdjust="spacingAndGlyphs" fill="#222">VLTE</text><text x="681.7" y="543.8" textLength="33.4" lengthAdjust="spacingAndGlyphs" fill="#222">VLTE_SRAM</text><text x="681.7" y="621.7" textLength="16.4" lengthAdjust="spacingAndGlyphs" fill="#222">SRAM</text><text x="681.7" y="679.7" textLength="16.6" lengthAdjust="spacingAndGlyphs" fill="#222">VDDQ</text><text x="746.9" y="445.6" textLength="12.5" lengthAdjust="spacingAndGlyphs" fill="#222">GND</text><text x="1078.5" y="198.4" textLength="12.8" lengthAdjust="spacingAndGlyphs" fill="#222">GND</text><text x="1139.6" y="198.4" textLength="40.2" lengthAdjust="spacingAndGlyphs" fill="#222">AVDD &amp; MD_A</text><text x="1139.6" y="308.6" textLength="9.4" lengthAdjust="spacingAndGlyphs" fill="#222">PLL</text><text x="1139.6" y="374.1" textLength="21.0" lengthAdjust="spacingAndGlyphs" fill="#222">PERI_D</text><text x="1139.6" y="509.1" textLength="20.4" lengthAdjust="spacingAndGlyphs" fill="#222">PERI_A</text><text x="1139.6" y="705.6" textLength="12.4" lengthAdjust="spacingAndGlyphs" fill="#222">GND</text></g>
<g font-size="22.5"><text x="716.3" y="307.2" text-anchor="middle" fill="#111">E</text><text x="1111.2" y="301.0" text-anchor="middle" fill="#111">F</text></g>
<g font-size="3.2"><text x="671.6" y="214.8" text-anchor="end" fill="#000">K8</text><text x="671.6" y="218.8" text-anchor="end" fill="#000">L7</text><text x="671.6" y="222.9" text-anchor="end" fill="#000">L8</text><text x="671.6" y="227.0" text-anchor="end" fill="#000">L9</text><text x="671.6" y="231.1" text-anchor="end" fill="#000">L10</text><text x="671.6" y="235.2" text-anchor="end" fill="#000">L11</text><text x="671.6" y="239.3" text-anchor="end" fill="#000">L12</text><text x="671.6" y="243.4" text-anchor="end" fill="#000">L15</text><text x="671.6" y="247.5" text-anchor="end" fill="#000">L16</text><text x="671.6" y="251.6" text-anchor="end" fill="#000">L19</text><text x="671.6" y="255.7" text-anchor="end" fill="#000">L20</text><text x="671.6" y="259.8" text-anchor="end" fill="#000">L21</text><text x="671.6" y="263.9" text-anchor="end" fill="#000">L22</text><text x="671.6" y="268.0" text-anchor="end" fill="#000">M8</text><text x="671.6" y="272.1" text-anchor="end" fill="#000">M20</text><text x="671.6" y="276.2" text-anchor="end" fill="#000">M22</text><text x="671.6" y="280.3" text-anchor="end" fill="#000">N8</text><text x="671.6" y="284.3" text-anchor="end" fill="#000">N20</text><text x="671.6" y="288.4" text-anchor="end" fill="#000">N22</text><text x="671.6" y="292.5" text-anchor="end" fill="#000">T8</text><text x="671.6" y="296.6" text-anchor="end" fill="#000">T20</text><text x="671.6" y="300.7" text-anchor="end" fill="#000">T21</text><text x="671.6" y="304.8" text-anchor="end" fill="#000">U7</text><text x="671.6" y="308.9" text-anchor="end" fill="#000">U8</text><text x="671.6" y="313.0" text-anchor="end" fill="#000">U19</text><text x="671.6" y="317.1" text-anchor="end" fill="#000">U20</text><text x="671.6" y="321.2" text-anchor="end" fill="#000">U21</text><text x="671.6" y="325.3" text-anchor="end" fill="#000">U22</text><text x="671.6" y="329.4" text-anchor="end" fill="#000">U23</text><text x="671.6" y="333.5" text-anchor="end" fill="#000">Y7</text><text x="671.6" y="337.6" text-anchor="end" fill="#000">Y8</text><text x="671.6" y="341.7" text-anchor="end" fill="#000">Y9</text><text x="671.6" y="345.8" text-anchor="end" fill="#000">Y10</text><text x="671.6" y="349.9" text-anchor="end" fill="#000">Y11</text><text x="671.6" y="353.9" text-anchor="end" fill="#000">Y12</text><text x="671.6" y="358.0" text-anchor="end" fill="#000">AA8</text><text x="671.6" y="362.1" text-anchor="end" fill="#000">AA10</text><text x="671.6" y="366.2" text-anchor="end" fill="#000">AA12</text><text x="671.6" y="370.3" text-anchor="end" fill="#000">AB8</text><text x="671.6" y="374.4" text-anchor="end" fill="#000">AB10</text><text x="671.6" y="378.5" text-anchor="end" fill="#000">AB12</text><text x="802.2" y="214.8" fill="#000">M12</text><text x="802.2" y="218.8" fill="#000">M13</text><text x="802.2" y="222.9" fill="#000">M15</text><text x="802.2" y="227.0" fill="#000">M16</text><text x="802.2" y="231.1" fill="#000">M17</text><text x="802.2" y="235.2" fill="#000">M18</text><text x="802.2" y="239.3" fill="#000">M19</text><text x="802.2" y="243.4" fill="#000">M21</text><text x="802.2" y="247.5" fill="#000">N12</text><text x="802.2" y="251.6" fill="#000">N13</text><text x="802.2" y="255.7" fill="#000">N14</text><text x="802.2" y="259.8" fill="#000">N15</text><text x="802.2" y="263.9" fill="#000">N16</text><text x="802.2" y="268.0" fill="#000">N17</text><text x="802.2" y="272.1" fill="#000">N18</text><text x="802.2" y="276.2" fill="#000">N19</text><text x="802.2" y="280.3" fill="#000">N20</text><text x="802.2" y="284.3" fill="#000">T12</text><text x="802.2" y="288.4" fill="#000">T13</text><text x="802.2" y="292.5" fill="#000">T14</text><text x="802.2" y="296.6" fill="#000">T15</text><text x="802.2" y="300.7" fill="#000">T16</text><text x="802.2" y="304.8" fill="#000">T17</text><text x="802.2" y="308.9" fill="#000">T18</text><text x="802.2" y="313.0" fill="#000">T19</text><text x="802.2" y="317.1" fill="#000">U12</text><text x="802.2" y="321.2" fill="#000">U13</text><text x="802.2" y="325.3" fill="#000">U14</text><text x="802.2" y="329.4" fill="#000">U15</text><text x="802.2" y="333.5" fill="#000">U16</text><text x="802.2" y="337.6" fill="#000">U17</text><text x="802.2" y="341.7" fill="#000">U18</text><text x="802.2" y="345.8" fill="#000">U19</text><text x="802.2" y="349.9" fill="#000">U20</text><text x="802.2" y="353.9" fill="#000">U21</text><text x="802.2" y="358.0" fill="#000">V14</text><text x="802.2" y="362.1" fill="#000">W14</text><text x="802.2" y="366.2" fill="#000">Y14</text><text x="802.2" y="370.3" fill="#000">AA14</text><text x="802.2" y="374.4" fill="#000">AB14</text><text x="802.2" y="378.5" fill="#000">AC14</text><text x="671.6" y="410.9" text-anchor="end" fill="#000">W16</text><text x="671.6" y="415.0" text-anchor="end" fill="#000">W17</text><text x="671.6" y="419.1" text-anchor="end" fill="#000">W18</text><text x="671.6" y="423.2" text-anchor="end" fill="#000">W19</text><text x="671.6" y="427.4" text-anchor="end" fill="#000">W20</text><text x="671.6" y="431.5" text-anchor="end" fill="#000">W21</text><text x="671.6" y="435.6" text-anchor="end" fill="#000">W22</text><text x="671.6" y="439.7" text-anchor="end" fill="#000">W23</text><text x="671.6" y="443.8" text-anchor="end" fill="#000">W24</text><text x="671.6" y="447.9" text-anchor="end" fill="#000">Y16</text><text x="671.6" y="452.0" text-anchor="end" fill="#000">Y17</text><text x="671.6" y="456.2" text-anchor="end" fill="#000">Y18</text><text x="671.6" y="460.3" text-anchor="end" fill="#000">Y19</text><text x="671.6" y="464.4" text-anchor="end" fill="#000">Y20</text><text x="671.6" y="468.5" text-anchor="end" fill="#000">Y21</text><text x="671.6" y="472.6" text-anchor="end" fill="#000">Y22</text><text x="671.6" y="476.7" text-anchor="end" fill="#000">Y23</text><text x="671.6" y="480.9" text-anchor="end" fill="#000">Y24</text><text x="671.6" y="485.0" text-anchor="end" fill="#000">AA16</text><text x="671.6" y="489.1" text-anchor="end" fill="#000">AA18</text><text x="671.6" y="493.2" text-anchor="end" fill="#000">AA20</text><text x="671.6" y="497.3" text-anchor="end" fill="#000">AA22</text><text x="671.6" y="501.4" text-anchor="end" fill="#000">AA24</text><text x="671.6" y="505.5" text-anchor="end" fill="#000">AB16</text><text x="671.6" y="509.7" text-anchor="end" fill="#000">AB18</text><text x="671.6" y="513.8" text-anchor="end" fill="#000">AB20</text><text x="671.6" y="517.9" text-anchor="end" fill="#000">AB22</text><text x="671.6" y="522.0" text-anchor="end" fill="#000">AB24</text><text x="671.6" y="558.6" text-anchor="end" fill="#000">AC20</text><text x="671.6" y="562.6" text-anchor="end" fill="#000">AD20</text><text x="671.6" y="566.5" text-anchor="end" fill="#000">AD24</text><text x="671.6" y="631.8" text-anchor="end" fill="#000">U14</text><text x="671.6" y="635.9" text-anchor="end" fill="#000">V15</text><text x="671.6" y="640.1" text-anchor="end" fill="#000">V20</text><text x="671.6" y="697.7" text-anchor="end" fill="#000">G9</text><text x="671.6" y="701.8" text-anchor="end" fill="#000">G12</text><text x="671.6" y="705.9" text-anchor="end" fill="#000">G14</text><text x="671.6" y="710.0" text-anchor="end" fill="#000">G16</text><text x="671.6" y="714.1" text-anchor="end" fill="#000">G18</text><text x="671.6" y="718.2" text-anchor="end" fill="#000">H9</text><text x="671.6" y="722.2" text-anchor="end" fill="#000">H12</text><text x="671.6" y="726.3" text-anchor="end" fill="#000">H14</text><text x="671.6" y="730.4" text-anchor="end" fill="#000">H16</text><text x="671.6" y="734.5" text-anchor="end" fill="#000">H18</text><text x="802.2" y="451.9" fill="#000">A21</text><text x="802.2" y="456.0" fill="#000">B4</text><text x="802.2" y="460.1" fill="#000">B7</text><text x="802.2" y="464.2" fill="#000">B9</text><text x="802.2" y="468.3" fill="#000">B14</text><text x="802.2" y="472.4" fill="#000">B18</text><text x="802.2" y="476.5" fill="#000">B22</text><text x="802.2" y="480.6" fill="#000">C5</text><text x="802.2" y="484.7" fill="#000">C15</text><text x="802.2" y="488.8" fill="#000">C22</text><text x="802.2" y="492.9" fill="#000">C26</text><text x="802.2" y="497.0" fill="#000">D3</text><text x="802.2" y="501.1" fill="#000">D5</text><text x="802.2" y="505.1" fill="#000">D8</text><text x="802.2" y="509.2" fill="#000">D13</text><text x="802.2" y="513.3" fill="#000">D17</text><text x="802.2" y="517.4" fill="#000">D18</text><text x="802.2" y="521.5" fill="#000">E24</text><text x="802.2" y="525.6" fill="#000">G10</text><text x="802.2" y="529.7" fill="#000">G13</text><text x="802.2" y="533.8" fill="#000">G15</text><text x="802.2" y="537.9" fill="#000">G17</text><text x="802.2" y="542.0" fill="#000">H13</text><text x="802.2" y="546.1" fill="#000">H15</text><text x="802.2" y="550.2" fill="#000">H16</text><text x="802.2" y="554.3" fill="#000">H17</text><text x="802.2" y="558.4" fill="#000">K7</text><text x="802.2" y="562.5" fill="#000">K9</text><text x="802.2" y="566.6" fill="#000">L13</text><text x="802.2" y="570.7" fill="#000">L17</text><text x="802.2" y="574.8" fill="#000">L18</text><text x="802.2" y="578.9" fill="#000">L23</text><text x="802.2" y="583.0" fill="#000">M7</text><text x="802.2" y="587.1" fill="#000">M9</text><text x="802.2" y="591.2" fill="#000">M11</text><text x="802.2" y="595.3" fill="#000">M21</text><text x="802.2" y="599.4" fill="#000">M23</text><text x="802.2" y="603.4" fill="#000">N7</text><text x="802.2" y="607.5" fill="#000">N9</text><text x="802.2" y="611.6" fill="#000">N11</text><text x="802.2" y="615.7" fill="#000">N21</text><text x="802.2" y="619.8" fill="#000">N23</text><text x="802.2" y="623.9" fill="#000">P7</text><text x="802.2" y="628.0" fill="#000">P8</text><text x="802.2" y="632.1" fill="#000">P9</text><text x="802.2" y="636.2" fill="#000">P10</text><text x="802.2" y="640.3" fill="#000">P11</text><text x="802.2" y="644.4" fill="#000">P12</text><text x="802.2" y="648.5" fill="#000">P13</text><text x="802.2" y="652.6" fill="#000">P14</text><text x="802.2" y="656.7" fill="#000">P15</text><text x="802.2" y="660.8" fill="#000">P16</text><text x="802.2" y="664.9" fill="#000">P17</text><text x="802.2" y="669.0" fill="#000">P18</text><text x="802.2" y="673.1" fill="#000">P19</text><text x="802.2" y="677.2" fill="#000">P20</text><text x="802.2" y="681.3" fill="#000">P21</text><text x="802.2" y="685.4" fill="#000">R7</text><text x="802.2" y="689.5" fill="#000">R8</text><text x="802.2" y="693.6" fill="#000">R9</text><text x="802.2" y="697.7" fill="#000">R10</text><text x="802.2" y="701.7" fill="#000">R11</text><text x="802.2" y="705.8" fill="#000">R12</text><text x="802.2" y="709.9" fill="#000">R13</text><text x="802.2" y="714.0" fill="#000">R14</text><text x="802.2" y="718.1" fill="#000">R15</text><text x="802.2" y="722.2" fill="#000">R16</text><text x="802.2" y="726.3" fill="#000">R17</text><text x="802.2" y="730.4" fill="#000">R18</text><text x="802.2" y="734.5" fill="#000">R19</text><text x="802.2" y="738.6" fill="#000">R20</text><text x="802.2" y="742.7" fill="#000">R21</text><text x="802.2" y="746.8" fill="#000">T7</text><text x="802.2" y="750.9" fill="#000">T9</text><text x="1064.4" y="204.7" text-anchor="end" fill="#000">T11</text><text x="1064.4" y="208.8" text-anchor="end" fill="#000">T21</text><text x="1064.4" y="212.9" text-anchor="end" fill="#000">T23</text><text x="1064.4" y="216.9" text-anchor="end" fill="#000">U11</text><text x="1064.4" y="221.0" text-anchor="end" fill="#000">V7</text><text x="1064.4" y="225.1" text-anchor="end" fill="#000">V8</text><text x="1064.4" y="229.2" text-anchor="end" fill="#000">V9</text><text x="1064.4" y="233.3" text-anchor="end" fill="#000">V10</text><text x="1064.4" y="237.4" text-anchor="end" fill="#000">V11</text><text x="1064.4" y="241.4" text-anchor="end" fill="#000">V12</text><text x="1064.4" y="245.5" text-anchor="end" fill="#000">V13</text><text x="1064.4" y="249.6" text-anchor="end" fill="#000">V15</text><text x="1064.4" y="253.7" text-anchor="end" fill="#000">V16</text><text x="1064.4" y="257.8" text-anchor="end" fill="#000">V17</text><text x="1064.4" y="261.9" text-anchor="end" fill="#000">V18</text><text x="1064.4" y="265.9" text-anchor="end" fill="#000">V21</text><text x="1064.4" y="270.0" text-anchor="end" fill="#000">V22</text><text x="1064.4" y="274.1" text-anchor="end" fill="#000">V23</text><text x="1064.4" y="278.2" text-anchor="end" fill="#000">W7</text><text x="1064.4" y="282.3" text-anchor="end" fill="#000">W8</text><text x="1064.4" y="286.4" text-anchor="end" fill="#000">W9</text><text x="1064.4" y="290.4" text-anchor="end" fill="#000">W10</text><text x="1064.4" y="294.5" text-anchor="end" fill="#000">W11</text><text x="1064.4" y="298.6" text-anchor="end" fill="#000">W12</text><text x="1064.4" y="302.7" text-anchor="end" fill="#000">W13</text><text x="1064.4" y="306.8" text-anchor="end" fill="#000">Y13</text><text x="1064.4" y="310.9" text-anchor="end" fill="#000">Y15</text><text x="1064.4" y="314.9" text-anchor="end" fill="#000">AA7</text><text x="1064.4" y="319.0" text-anchor="end" fill="#000">AA9</text><text x="1064.4" y="323.1" text-anchor="end" fill="#000">AA11</text><text x="1064.4" y="327.2" text-anchor="end" fill="#000">AA13</text><text x="1064.4" y="331.3" text-anchor="end" fill="#000">AA15</text><text x="1064.4" y="335.4" text-anchor="end" fill="#000">AA17</text><text x="1064.4" y="339.4" text-anchor="end" fill="#000">AA19</text><text x="1064.4" y="343.5" text-anchor="end" fill="#000">AA21</text><text x="1064.4" y="347.6" text-anchor="end" fill="#000">AA23</text><text x="1064.4" y="351.7" text-anchor="end" fill="#000">AB7</text><text x="1064.4" y="355.8" text-anchor="end" fill="#000">AB9</text><text x="1064.4" y="359.9" text-anchor="end" fill="#000">AB11</text><text x="1064.4" y="363.9" text-anchor="end" fill="#000">AB13</text><text x="1064.4" y="368.0" text-anchor="end" fill="#000">AB15</text><text x="1064.4" y="372.1" text-anchor="end" fill="#000">AB17</text><text x="1064.4" y="376.2" text-anchor="end" fill="#000">AB19</text><text x="1064.4" y="380.3" text-anchor="end" fill="#000">AB21</text><text x="1064.4" y="384.4" text-anchor="end" fill="#000">AB23</text><text x="1064.4" y="388.4" text-anchor="end" fill="#000">AC7</text><text x="1064.4" y="392.5" text-anchor="end" fill="#000">AC8</text><text x="1064.4" y="396.6" text-anchor="end" fill="#000">AC9</text><text x="1064.4" y="400.7" text-anchor="end" fill="#000">AC10</text><text x="1064.4" y="404.8" text-anchor="end" fill="#000">AC11</text><text x="1064.4" y="408.9" text-anchor="end" fill="#000">AC12</text><text x="1064.4" y="412.9" text-anchor="end" fill="#000">AC13</text><text x="1064.4" y="417.0" text-anchor="end" fill="#000">AC15</text><text x="1064.4" y="421.1" text-anchor="end" fill="#000">AC17</text><text x="1064.4" y="425.2" text-anchor="end" fill="#000">AC18</text><text x="1064.4" y="429.3" text-anchor="end" fill="#000">AC19</text><text x="1064.4" y="433.4" text-anchor="end" fill="#000">AC20</text><text x="1064.4" y="437.4" text-anchor="end" fill="#000">AC21</text><text x="1064.4" y="441.5" text-anchor="end" fill="#000">AC22</text><text x="1064.4" y="445.6" text-anchor="end" fill="#000">AC23</text><text x="1191.4" y="206.7" text-anchor="end" textLength="25.0" lengthAdjust="spacingAndGlyphs">AVDD18_MD</text><text x="1195.6" y="204.7" fill="#000">AL4</text><text x="1191.4" y="210.7" text-anchor="end" textLength="24.2" lengthAdjust="spacingAndGlyphs">AVDD18_AP</text><text x="1195.6" y="208.7" fill="#000">AM11</text><text x="1191.4" y="214.7" text-anchor="end" textLength="27.0" lengthAdjust="spacingAndGlyphs">AVDD28_DAC</text><text x="1195.6" y="212.7" fill="#000">AL3</text><text x="1191.4" y="222.7" text-anchor="end" textLength="25.0" lengthAdjust="spacingAndGlyphs">AVSS18_MD</text><text x="1195.6" y="220.7" fill="#000">AM11</text><text x="1191.4" y="226.8" text-anchor="end" textLength="25.0" lengthAdjust="spacingAndGlyphs">AVSS18_MD</text><text x="1195.6" y="224.8" fill="#000">AJ36</text><text x="1191.4" y="230.9" text-anchor="end" textLength="25.0" lengthAdjust="spacingAndGlyphs">AVSS18_MD</text><text x="1195.6" y="228.9" fill="#000">AJ37</text><text x="1191.4" y="235.1" text-anchor="end" textLength="25.0" lengthAdjust="spacingAndGlyphs">AVSS18_MD</text><text x="1195.6" y="233.1" fill="#000">AJ38</text><text x="1191.4" y="239.2" text-anchor="end" textLength="25.0" lengthAdjust="spacingAndGlyphs">AVSS18_MD</text><text x="1195.6" y="237.2" fill="#000">AJ39</text><text x="1191.4" y="243.3" text-anchor="end" textLength="25.0" lengthAdjust="spacingAndGlyphs">AVSS18_MD</text><text x="1195.6" y="241.3" fill="#000">AH3</text><text x="1191.4" y="247.4" text-anchor="end" textLength="25.0" lengthAdjust="spacingAndGlyphs">AVSS18_MD</text><text x="1195.6" y="245.4" fill="#000">AH6</text><text x="1191.4" y="251.6" text-anchor="end" textLength="25.0" lengthAdjust="spacingAndGlyphs">AVSS18_MD</text><text x="1195.6" y="249.6" fill="#000">AH9</text><text x="1191.4" y="255.7" text-anchor="end" textLength="25.0" lengthAdjust="spacingAndGlyphs">AVSS18_MD</text><text x="1195.6" y="253.7" fill="#000">AJ1</text><text x="1191.4" y="259.8" text-anchor="end" textLength="25.0" lengthAdjust="spacingAndGlyphs">AVSS18_MD</text><text x="1195.6" y="257.8" fill="#000">AJ2</text><text x="1191.4" y="263.9" text-anchor="end" textLength="25.0" lengthAdjust="spacingAndGlyphs">AVSS18_MD</text><text x="1195.6" y="261.9" fill="#000">AJ3</text><text x="1191.4" y="268.0" text-anchor="end" textLength="25.0" lengthAdjust="spacingAndGlyphs">AVSS18_MD</text><text x="1195.6" y="266.0" fill="#000">AJ4</text><text x="1191.4" y="272.2" text-anchor="end" textLength="25.0" lengthAdjust="spacingAndGlyphs">AVSS18_MD</text><text x="1195.6" y="270.2" fill="#000">AJ5</text><text x="1191.4" y="276.3" text-anchor="end" textLength="25.0" lengthAdjust="spacingAndGlyphs">AVSS18_MD</text><text x="1195.6" y="274.3" fill="#000">AJ6</text><text x="1191.4" y="280.4" text-anchor="end" textLength="25.0" lengthAdjust="spacingAndGlyphs">AVSS18_MD</text><text x="1195.6" y="278.4" fill="#000">AJ8</text><text x="1191.4" y="284.5" text-anchor="end" textLength="25.0" lengthAdjust="spacingAndGlyphs">AVSS18_MD</text><text x="1195.6" y="282.5" fill="#000">AK5</text><text x="1191.4" y="288.7" text-anchor="end" textLength="25.0" lengthAdjust="spacingAndGlyphs">AVSS18_MD</text><text x="1195.6" y="286.7" fill="#000">AK9</text><text x="1191.4" y="292.8" text-anchor="end" textLength="25.0" lengthAdjust="spacingAndGlyphs">AVSS18_MD</text><text x="1195.6" y="290.8" fill="#000">AL6</text><text x="1191.4" y="296.9" text-anchor="end" textLength="25.0" lengthAdjust="spacingAndGlyphs">AVSS18_MD</text><text x="1195.6" y="294.9" fill="#000">AL8</text><text x="1191.4" y="320.7" text-anchor="end" textLength="27.6" lengthAdjust="spacingAndGlyphs">AVDD18_PLLGP</text><text x="1195.6" y="318.7" fill="#000">AD16</text><text x="1191.4" y="328.6" text-anchor="end" textLength="30.0" lengthAdjust="spacingAndGlyphs">AVDD18_MEMPLL</text><text x="1195.6" y="326.6" fill="#000">E1</text><text x="1191.4" y="337.0" text-anchor="end" textLength="26.4" lengthAdjust="spacingAndGlyphs">AVSS18_PLLGP</text><text x="1195.6" y="335.0" fill="#000">AD14</text><text x="1191.4" y="341.1" text-anchor="end" textLength="26.4" lengthAdjust="spacingAndGlyphs">AVSS18_PLLGP</text><text x="1195.6" y="339.1" fill="#000">AK15</text><text x="1191.4" y="345.2" text-anchor="end" textLength="26.4" lengthAdjust="spacingAndGlyphs">AVSS18_PLLGP</text><text x="1195.6" y="343.2" fill="#000">AE15</text><text x="1191.4" y="349.2" text-anchor="end" textLength="26.4" lengthAdjust="spacingAndGlyphs">AVSS18_PLLGP</text><text x="1195.6" y="347.2" fill="#000">AJ15</text><text x="1191.4" y="353.3" text-anchor="end" textLength="26.4" lengthAdjust="spacingAndGlyphs">AVSS18_PLLGP</text><text x="1195.6" y="351.3" fill="#000">AK13</text><text x="1191.4" y="362.0" text-anchor="end" textLength="29.0" lengthAdjust="spacingAndGlyphs">AVSS18_MEMPLL</text><text x="1195.6" y="360.0" fill="#000">E2</text><text x="1191.4" y="386.7" text-anchor="end" textLength="26.4" lengthAdjust="spacingAndGlyphs">DVDD18_CONN</text><text x="1195.6" y="384.7" fill="#000">C26</text><text x="1191.4" y="390.8" text-anchor="end" textLength="27.4" lengthAdjust="spacingAndGlyphs">DVDD18_EFUSE</text><text x="1195.6" y="388.8" fill="#000">AB23</text><text x="1191.4" y="394.8" text-anchor="end" textLength="24.4" lengthAdjust="spacingAndGlyphs">DVDD18_IORB</text><text x="1195.6" y="392.8" fill="#000">AD3</text><text x="1191.4" y="399.1" text-anchor="end" textLength="24.0" lengthAdjust="spacingAndGlyphs">DVDD18_IOLT</text><text x="1195.6" y="397.1" fill="#000">K27</text><text x="1191.4" y="411.1" text-anchor="end" textLength="24.0" lengthAdjust="spacingAndGlyphs">DVDD18_IOLB</text><text x="1195.6" y="409.1" fill="#000">AA20</text><text x="1191.4" y="415.1" text-anchor="end" textLength="24.0" lengthAdjust="spacingAndGlyphs">DVDD18_IOLB</text><text x="1195.6" y="413.1" fill="#000">AJ31</text><text x="1191.4" y="419.2" text-anchor="end" textLength="24.0" lengthAdjust="spacingAndGlyphs">DVDD18_IOLB</text><text x="1195.6" y="417.2" fill="#000">AJ34</text><text x="1191.4" y="427.6" text-anchor="end" textLength="19.6" lengthAdjust="spacingAndGlyphs">FSOURCE_P</text><text x="1195.6" y="425.6" fill="#000">W30</text><text x="1191.4" y="435.9" text-anchor="end" textLength="23.0" lengthAdjust="spacingAndGlyphs">DVDD18_MC0</text><text x="1195.6" y="433.9" fill="#000">C27</text><text x="1191.4" y="439.8" text-anchor="end" textLength="23.0" lengthAdjust="spacingAndGlyphs">DVDD18_MC1</text><text x="1195.6" y="437.8" fill="#000">F3</text><text x="1191.4" y="447.7" text-anchor="end" textLength="23.0" lengthAdjust="spacingAndGlyphs">DVDD28_MC1</text><text x="1195.6" y="445.7" fill="#000">G2</text><text x="1191.4" y="463.9" text-anchor="end" textLength="23.0" lengthAdjust="spacingAndGlyphs">DVDD28_MC2</text><text x="1195.6" y="461.9" fill="#000">L31</text><text x="1191.4" y="480.7" text-anchor="end" textLength="23.4" lengthAdjust="spacingAndGlyphs">DVDD28_SIM1</text><text x="1195.6" y="478.7" fill="#000">H3</text><text x="1191.4" y="493.2" text-anchor="end" textLength="23.4" lengthAdjust="spacingAndGlyphs">DVDD28_SIM2</text><text x="1195.6" y="491.2" fill="#000">L3</text><text x="1191.4" y="521.8" text-anchor="end" textLength="29.0" lengthAdjust="spacingAndGlyphs">AVDD18_MIPIRX0</text><text x="1195.6" y="519.8" fill="#000">N30</text><text x="1191.4" y="525.6" text-anchor="end" textLength="29.0" lengthAdjust="spacingAndGlyphs">AVDD18_MIPIRX1</text><text x="1195.6" y="523.6" fill="#000">N31</text><text x="1191.4" y="530.0" text-anchor="end" textLength="27.0" lengthAdjust="spacingAndGlyphs">AVDD18_MIPITX</text><text x="1195.6" y="528.0" fill="#000">T1</text><text x="1191.4" y="554.7" text-anchor="end" textLength="29.0" lengthAdjust="spacingAndGlyphs">AVSS18_MIPIDSI</text><text x="1195.6" y="552.7" fill="#000">N27</text><text x="1191.4" y="558.8" text-anchor="end" textLength="26.0" lengthAdjust="spacingAndGlyphs">AVSS18_MIPITX</text><text x="1195.6" y="556.8" fill="#000">L1</text><text x="1191.4" y="582.7" text-anchor="end" textLength="22.4" lengthAdjust="spacingAndGlyphs">AVDD18_USB</text><text x="1195.6" y="580.7" fill="#000">W1</text><text x="1191.4" y="586.8" text-anchor="end" textLength="22.4" lengthAdjust="spacingAndGlyphs">AVDD33_USB</text><text x="1195.6" y="584.8" fill="#000">T2</text><text x="1191.4" y="607.7" text-anchor="end" textLength="22.0" lengthAdjust="spacingAndGlyphs">AVSS33_USB</text><text x="1195.6" y="605.7" fill="#000">W2</text><text x="1191.4" y="632.2" text-anchor="end" textLength="23.4" lengthAdjust="spacingAndGlyphs">AVDD18_WBG</text><text x="1195.6" y="630.2" fill="#000">B30</text><text x="1191.4" y="652.9" text-anchor="end" textLength="23.6" lengthAdjust="spacingAndGlyphs">AVSS18_WBG</text><text x="1195.6" y="650.9" fill="#000">C29</text><text x="1191.4" y="656.9" text-anchor="end" textLength="23.6" lengthAdjust="spacingAndGlyphs">AVSS18_WBG</text><text x="1195.6" y="654.9" fill="#000">D29</text><text x="1191.4" y="661.0" text-anchor="end" textLength="23.6" lengthAdjust="spacingAndGlyphs">AVSS18_WBG</text><text x="1195.6" y="659.0" fill="#000">E28</text><text x="1191.4" y="665.0" text-anchor="end" textLength="23.6" lengthAdjust="spacingAndGlyphs">AVSS18_WBG</text><text x="1195.6" y="663.0" fill="#000">E31</text><text x="1191.4" y="669.1" text-anchor="end" textLength="23.6" lengthAdjust="spacingAndGlyphs">AVSS18_WBG</text><text x="1195.6" y="667.1" fill="#000">F27</text><text x="1191.4" y="673.1" text-anchor="end" textLength="23.6" lengthAdjust="spacingAndGlyphs">AVSS18_WBG</text><text x="1195.6" y="671.1" fill="#000">F28</text><text x="1191.4" y="677.2" text-anchor="end" textLength="23.6" lengthAdjust="spacingAndGlyphs">AVSS18_WBG</text><text x="1195.6" y="675.2" fill="#000">L30</text></g>
<g font-size="3.3"><text x="675.3" y="216.8" textLength="21.4" lengthAdjust="spacingAndGlyphs">DVDD_CORE</text><text x="675.3" y="220.9" textLength="21.4" lengthAdjust="spacingAndGlyphs">DVDD_CORE</text><text x="675.3" y="225.0" textLength="21.4" lengthAdjust="spacingAndGlyphs">DVDD_CORE</text><text x="675.3" y="229.1" textLength="21.4" lengthAdjust="spacingAndGlyphs">DVDD_CORE</text><text x="675.3" y="233.2" textLength="21.4" lengthAdjust="spacingAndGlyphs">DVDD_CORE</text><text x="675.3" y="237.3" textLength="21.4" lengthAdjust="spacingAndGlyphs">DVDD_CORE</text><text x="675.3" y="241.4" textLength="21.4" lengthAdjust="spacingAndGlyphs">DVDD_CORE</text><text x="675.3" y="245.5" textLength="21.4" lengthAdjust="spacingAndGlyphs">DVDD_CORE</text><text x="675.3" y="249.6" textLength="21.4" lengthAdjust="spacingAndGlyphs">DVDD_CORE</text><text x="675.3" y="253.7" textLength="21.4" lengthAdjust="spacingAndGlyphs">DVDD_CORE</text><text x="675.3" y="257.8" textLength="21.4" lengthAdjust="spacingAndGlyphs">DVDD_CORE</text><text x="675.3" y="261.9" textLength="21.4" lengthAdjust="spacingAndGlyphs">DVDD_CORE</text><text x="675.3" y="266.0" textLength="21.4" lengthAdjust="spacingAndGlyphs">DVDD_CORE</text><text x="675.3" y="270.1" textLength="21.4" lengthAdjust="spacingAndGlyphs">DVDD_CORE</text><text x="675.3" y="274.2" textLength="21.4" lengthAdjust="spacingAndGlyphs">DVDD_CORE</text><text x="675.3" y="278.3" textLength="21.4" lengthAdjust="spacingAndGlyphs">DVDD_CORE</text><text x="675.3" y="282.4" textLength="21.4" lengthAdjust="spacingAndGlyphs">DVDD_CORE</text><text x="675.3" y="286.4" textLength="21.4" lengthAdjust="spacingAndGlyphs">DVDD_CORE</text><text x="675.3" y="290.5" textLength="21.4" lengthAdjust="spacingAndGlyphs">DVDD_CORE</text><text x="675.3" y="294.6" textLength="21.4" lengthAdjust="spacingAndGlyphs">DVDD_CORE</text><text x="675.3" y="298.7" textLength="21.4" lengthAdjust="spacingAndGlyphs">DVDD_CORE</text><text x="675.3" y="302.8" textLength="21.4" lengthAdjust="spacingAndGlyphs">DVDD_CORE</text><text x="675.3" y="306.9" textLength="21.4" lengthAdjust="spacingAndGlyphs">DVDD_CORE</text><text x="675.3" y="311.0" textLength="21.4" lengthAdjust="spacingAndGlyphs">DVDD_CORE</text><text x="675.3" y="315.1" textLength="21.4" lengthAdjust="spacingAndGlyphs">DVDD_CORE</text><text x="675.3" y="319.2" textLength="21.4" lengthAdjust="spacingAndGlyphs">DVDD_CORE</text><text x="675.3" y="323.3" textLength="21.4" lengthAdjust="spacingAndGlyphs">DVDD_CORE</text><text x="675.3" y="327.4" textLength="21.4" lengthAdjust="spacingAndGlyphs">DVDD_CORE</text><text x="675.3" y="331.5" textLength="21.4" lengthAdjust="spacingAndGlyphs">DVDD_CORE</text><text x="675.3" y="335.6" textLength="21.4" lengthAdjust="spacingAndGlyphs">DVDD_CORE</text><text x="675.3" y="339.7" textLength="21.4" lengthAdjust="spacingAndGlyphs">DVDD_CORE</text><text x="675.3" y="343.8" textLength="21.4" lengthAdjust="spacingAndGlyphs">DVDD_CORE</text><text x="675.3" y="347.9" textLength="21.4" lengthAdjust="spacingAndGlyphs">DVDD_CORE</text><text x="675.3" y="352.0" textLength="21.4" lengthAdjust="spacingAndGlyphs">DVDD_CORE</text><text x="675.3" y="356.0" textLength="21.4" lengthAdjust="spacingAndGlyphs">DVDD_CORE</text><text x="675.3" y="360.1" textLength="21.4" lengthAdjust="spacingAndGlyphs">DVDD_CORE</text><text x="675.3" y="364.2" textLength="21.4" lengthAdjust="spacingAndGlyphs">DVDD_CORE</text><text x="675.3" y="368.3" textLength="21.4" lengthAdjust="spacingAndGlyphs">DVDD_CORE</text><text x="675.3" y="372.4" textLength="21.4" lengthAdjust="spacingAndGlyphs">DVDD_CORE</text><text x="675.3" y="376.5" textLength="21.4" lengthAdjust="spacingAndGlyphs">DVDD_CORE</text><text x="675.3" y="380.6" textLength="21.4" lengthAdjust="spacingAndGlyphs">DVDD_CORE</text><text x="799.2" y="216.8" text-anchor="end" textLength="19.6" lengthAdjust="spacingAndGlyphs">DVDD_CPU</text><text x="799.2" y="220.9" text-anchor="end" textLength="19.6" lengthAdjust="spacingAndGlyphs">DVDD_CPU</text><text x="799.2" y="225.0" text-anchor="end" textLength="19.6" lengthAdjust="spacingAndGlyphs">DVDD_CPU</text><text x="799.2" y="229.1" text-anchor="end" textLength="19.6" lengthAdjust="spacingAndGlyphs">DVDD_CPU</text><text x="799.2" y="233.2" text-anchor="end" textLength="19.6" lengthAdjust="spacingAndGlyphs">DVDD_CPU</text><text x="799.2" y="237.3" text-anchor="end" textLength="19.6" lengthAdjust="spacingAndGlyphs">DVDD_CPU</text><text x="799.2" y="241.4" text-anchor="end" textLength="19.6" lengthAdjust="spacingAndGlyphs">DVDD_CPU</text><text x="799.2" y="245.5" text-anchor="end" textLength="19.6" lengthAdjust="spacingAndGlyphs">DVDD_CPU</text><text x="799.2" y="249.6" text-anchor="end" textLength="19.6" lengthAdjust="spacingAndGlyphs">DVDD_CPU</text><text x="799.2" y="253.7" text-anchor="end" textLength="19.6" lengthAdjust="spacingAndGlyphs">DVDD_CPU</text><text x="799.2" y="257.8" text-anchor="end" textLength="19.6" lengthAdjust="spacingAndGlyphs">DVDD_CPU</text><text x="799.2" y="261.9" text-anchor="end" textLength="19.6" lengthAdjust="spacingAndGlyphs">DVDD_CPU</text><text x="799.2" y="266.0" text-anchor="end" textLength="19.6" lengthAdjust="spacingAndGlyphs">DVDD_CPU</text><text x="799.2" y="270.1" text-anchor="end" textLength="19.6" lengthAdjust="spacingAndGlyphs">DVDD_CPU</text><text x="799.2" y="274.2" text-anchor="end" textLength="19.6" lengthAdjust="spacingAndGlyphs">DVDD_CPU</text><text x="799.2" y="278.3" text-anchor="end" textLength="19.6" lengthAdjust="spacingAndGlyphs">DVDD_CPU</text><text x="799.2" y="282.4" text-anchor="end" textLength="19.6" lengthAdjust="spacingAndGlyphs">DVDD_CPU</text><text x="799.2" y="286.4" text-anchor="end" textLength="19.6" lengthAdjust="spacingAndGlyphs">DVDD_CPU</text><text x="799.2" y="290.5" text-anchor="end" textLength="19.6" lengthAdjust="spacingAndGlyphs">DVDD_CPU</text><text x="799.2" y="294.6" text-anchor="end" textLength="19.6" lengthAdjust="spacingAndGlyphs">DVDD_CPU</text><text x="799.2" y="298.7" text-anchor="end" textLength="19.6" lengthAdjust="spacingAndGlyphs">DVDD_CPU</text><text x="799.2" y="302.8" text-anchor="end" textLength="19.6" lengthAdjust="spacingAndGlyphs">DVDD_CPU</text><text x="799.2" y="306.9" text-anchor="end" textLength="19.6" lengthAdjust="spacingAndGlyphs">DVDD_CPU</text><text x="799.2" y="311.0" text-anchor="end" textLength="19.6" lengthAdjust="spacingAndGlyphs">DVDD_CPU</text><text x="799.2" y="315.1" text-anchor="end" textLength="19.6" lengthAdjust="spacingAndGlyphs">DVDD_CPU</text><text x="799.2" y="319.2" text-anchor="end" textLength="19.6" lengthAdjust="spacingAndGlyphs">DVDD_CPU</text><text x="799.2" y="323.3" text-anchor="end" textLength="19.6" lengthAdjust="spacingAndGlyphs">DVDD_CPU</text><text x="799.2" y="327.4" text-anchor="end" textLength="19.6" lengthAdjust="spacingAndGlyphs">DVDD_CPU</text><text x="799.2" y="331.5" text-anchor="end" textLength="19.6" lengthAdjust="spacingAndGlyphs">DVDD_CPU</text><text x="799.2" y="335.6" text-anchor="end" textLength="19.6" lengthAdjust="spacingAndGlyphs">DVDD_CPU</text><text x="799.2" y="339.7" text-anchor="end" textLength="19.6" lengthAdjust="spacingAndGlyphs">DVDD_CPU</text><text x="799.2" y="343.8" text-anchor="end" textLength="19.6" lengthAdjust="spacingAndGlyphs">DVDD_CPU</text><text x="799.2" y="347.9" text-anchor="end" textLength="19.6" lengthAdjust="spacingAndGlyphs">DVDD_CPU</text><text x="799.2" y="352.0" text-anchor="end" textLength="19.6" lengthAdjust="spacingAndGlyphs">DVDD_CPU</text><text x="799.2" y="356.0" text-anchor="end" textLength="19.6" lengthAdjust="spacingAndGlyphs">DVDD_CPU</text><text x="799.2" y="360.1" text-anchor="end" textLength="19.6" lengthAdjust="spacingAndGlyphs">DVDD_CPU</text><text x="799.2" y="364.2" text-anchor="end" textLength="19.6" lengthAdjust="spacingAndGlyphs">DVDD_CPU</text><text x="799.2" y="368.3" text-anchor="end" textLength="19.6" lengthAdjust="spacingAndGlyphs">DVDD_CPU</text><text x="799.2" y="372.4" text-anchor="end" textLength="19.6" lengthAdjust="spacingAndGlyphs">DVDD_CPU</text><text x="799.2" y="376.5" text-anchor="end" textLength="19.6" lengthAdjust="spacingAndGlyphs">DVDD_CPU</text><text x="799.2" y="380.6" text-anchor="end" textLength="19.6" lengthAdjust="spacingAndGlyphs">DVDD_CPU</text><text x="675.3" y="413.0" textLength="17.8" lengthAdjust="spacingAndGlyphs">DVDD_LTE</text><text x="675.3" y="417.1" textLength="17.8" lengthAdjust="spacingAndGlyphs">DVDD_LTE</text><text x="675.3" y="421.2" textLength="17.8" lengthAdjust="spacingAndGlyphs">DVDD_LTE</text><text x="675.3" y="425.3" textLength="17.8" lengthAdjust="spacingAndGlyphs">DVDD_LTE</text><text x="675.3" y="429.5" textLength="17.8" lengthAdjust="spacingAndGlyphs">DVDD_LTE</text><text x="675.3" y="433.6" textLength="17.8" lengthAdjust="spacingAndGlyphs">DVDD_LTE</text><text x="675.3" y="437.7" textLength="17.8" lengthAdjust="spacingAndGlyphs">DVDD_LTE</text><text x="675.3" y="441.8" textLength="17.8" lengthAdjust="spacingAndGlyphs">DVDD_LTE</text><text x="675.3" y="445.9" textLength="17.8" lengthAdjust="spacingAndGlyphs">DVDD_LTE</text><text x="675.3" y="450.0" textLength="17.8" lengthAdjust="spacingAndGlyphs">DVDD_LTE</text><text x="675.3" y="454.1" textLength="17.8" lengthAdjust="spacingAndGlyphs">DVDD_LTE</text><text x="675.3" y="458.3" textLength="17.8" lengthAdjust="spacingAndGlyphs">DVDD_LTE</text><text x="675.3" y="462.4" textLength="17.8" lengthAdjust="spacingAndGlyphs">DVDD_LTE</text><text x="675.3" y="466.5" textLength="17.8" lengthAdjust="spacingAndGlyphs">DVDD_LTE</text><text x="675.3" y="470.6" textLength="17.8" lengthAdjust="spacingAndGlyphs">DVDD_LTE</text><text x="675.3" y="474.7" textLength="17.8" lengthAdjust="spacingAndGlyphs">DVDD_LTE</text><text x="675.3" y="478.8" textLength="17.8" lengthAdjust="spacingAndGlyphs">DVDD_LTE</text><text x="675.3" y="483.0" textLength="17.8" lengthAdjust="spacingAndGlyphs">DVDD_LTE</text><text x="675.3" y="487.1" textLength="17.8" lengthAdjust="spacingAndGlyphs">DVDD_LTE</text><text x="675.3" y="491.2" textLength="17.8" lengthAdjust="spacingAndGlyphs">DVDD_LTE</text><text x="675.3" y="495.3" textLength="17.8" lengthAdjust="spacingAndGlyphs">DVDD_LTE</text><text x="675.3" y="499.4" textLength="17.8" lengthAdjust="spacingAndGlyphs">DVDD_LTE</text><text x="675.3" y="503.5" textLength="17.8" lengthAdjust="spacingAndGlyphs">DVDD_LTE</text><text x="675.3" y="507.6" textLength="17.8" lengthAdjust="spacingAndGlyphs">DVDD_LTE</text><text x="675.3" y="511.8" textLength="17.8" lengthAdjust="spacingAndGlyphs">DVDD_LTE</text><text x="675.3" y="515.9" textLength="17.8" lengthAdjust="spacingAndGlyphs">DVDD_LTE</text><text x="675.3" y="520.0" textLength="17.8" lengthAdjust="spacingAndGlyphs">DVDD_LTE</text><text x="675.3" y="524.1" textLength="17.8" lengthAdjust="spacingAndGlyphs">DVDD_LTE</text><text x="675.3" y="560.7" textLength="20.4" lengthAdjust="spacingAndGlyphs">VLTE_SRAM</text><text x="675.3" y="564.7" textLength="20.4" lengthAdjust="spacingAndGlyphs">VLTE_SRAM</text><text x="675.3" y="568.6" textLength="20.4" lengthAdjust="spacingAndGlyphs">VLTE_SRAM</text><text x="675.3" y="633.9" textLength="21.4" lengthAdjust="spacingAndGlyphs">DVDD_SRAM</text><text x="675.3" y="638.0" textLength="21.4" lengthAdjust="spacingAndGlyphs">DVDD_SRAM</text><text x="675.3" y="642.2" textLength="21.4" lengthAdjust="spacingAndGlyphs">DVDD_SRAM</text><text x="675.3" y="699.8" textLength="21.6" lengthAdjust="spacingAndGlyphs">DVDD12_EMI</text><text x="675.3" y="703.9" textLength="21.6" lengthAdjust="spacingAndGlyphs">DVDD12_EMI</text><text x="675.3" y="708.0" textLength="21.6" lengthAdjust="spacingAndGlyphs">DVDD12_EMI</text><text x="675.3" y="712.1" textLength="21.6" lengthAdjust="spacingAndGlyphs">DVDD12_EMI</text><text x="675.3" y="716.2" textLength="21.6" lengthAdjust="spacingAndGlyphs">DVDD12_EMI</text><text x="675.3" y="720.3" textLength="21.6" lengthAdjust="spacingAndGlyphs">DVDD12_EMI</text><text x="675.3" y="724.3" textLength="21.6" lengthAdjust="spacingAndGlyphs">DVDD12_EMI</text><text x="675.3" y="728.4" textLength="21.6" lengthAdjust="spacingAndGlyphs">DVDD12_EMI</text><text x="675.3" y="732.5" textLength="21.6" lengthAdjust="spacingAndGlyphs">DVDD12_EMI</text><text x="675.3" y="736.6" textLength="21.6" lengthAdjust="spacingAndGlyphs">DVDD12_EMI</text><text x="798.4" y="454.0" text-anchor="end" textLength="9.4" lengthAdjust="spacingAndGlyphs">DVSS</text><text x="798.4" y="458.1" text-anchor="end" textLength="9.4" lengthAdjust="spacingAndGlyphs">DVSS</text><text x="798.4" y="462.2" text-anchor="end" textLength="9.4" lengthAdjust="spacingAndGlyphs">DVSS</text><text x="798.4" y="466.3" text-anchor="end" textLength="9.4" lengthAdjust="spacingAndGlyphs">DVSS</text><text x="798.4" y="470.4" text-anchor="end" textLength="9.4" lengthAdjust="spacingAndGlyphs">DVSS</text><text x="798.4" y="474.5" text-anchor="end" textLength="9.4" lengthAdjust="spacingAndGlyphs">DVSS</text><text x="798.4" y="478.6" text-anchor="end" textLength="9.4" lengthAdjust="spacingAndGlyphs">DVSS</text><text x="798.4" y="482.7" text-anchor="end" textLength="9.4" lengthAdjust="spacingAndGlyphs">DVSS</text><text x="798.4" y="486.8" text-anchor="end" textLength="9.4" lengthAdjust="spacingAndGlyphs">DVSS</text><text x="798.4" y="490.9" text-anchor="end" textLength="9.4" lengthAdjust="spacingAndGlyphs">DVSS</text><text x="798.4" y="495.0" text-anchor="end" textLength="9.4" lengthAdjust="spacingAndGlyphs">DVSS</text><text x="798.4" y="499.1" text-anchor="end" textLength="9.4" lengthAdjust="spacingAndGlyphs">DVSS</text><text x="798.4" y="503.2" text-anchor="end" textLength="9.4" lengthAdjust="spacingAndGlyphs">DVSS</text><text x="798.4" y="507.2" text-anchor="end" textLength="9.4" lengthAdjust="spacingAndGlyphs">DVSS</text><text x="798.4" y="511.3" text-anchor="end" textLength="9.4" lengthAdjust="spacingAndGlyphs">DVSS</text><text x="798.4" y="515.4" text-anchor="end" textLength="9.4" lengthAdjust="spacingAndGlyphs">DVSS</text><text x="798.4" y="519.5" text-anchor="end" textLength="9.4" lengthAdjust="spacingAndGlyphs">DVSS</text><text x="798.4" y="523.6" text-anchor="end" textLength="9.4" lengthAdjust="spacingAndGlyphs">DVSS</text><text x="798.4" y="527.7" text-anchor="end" textLength="9.4" lengthAdjust="spacingAndGlyphs">DVSS</text><text x="798.4" y="531.8" text-anchor="end" textLength="9.4" lengthAdjust="spacingAndGlyphs">DVSS</text><text x="798.4" y="535.9" text-anchor="end" textLength="9.4" lengthAdjust="spacingAndGlyphs">DVSS</text><text x="798.4" y="540.0" text-anchor="end" textLength="9.4" lengthAdjust="spacingAndGlyphs">DVSS</text><text x="798.4" y="544.1" text-anchor="end" textLength="9.4" lengthAdjust="spacingAndGlyphs">DVSS</text><text x="798.4" y="548.2" text-anchor="end" textLength="9.4" lengthAdjust="spacingAndGlyphs">DVSS</text><text x="798.4" y="552.3" text-anchor="end" textLength="9.4" lengthAdjust="spacingAndGlyphs">DVSS</text><text x="798.4" y="556.4" text-anchor="end" textLength="9.4" lengthAdjust="spacingAndGlyphs">DVSS</text><text x="798.4" y="560.5" text-anchor="end" textLength="9.4" lengthAdjust="spacingAndGlyphs">DVSS</text><text x="798.4" y="564.6" text-anchor="end" textLength="9.4" lengthAdjust="spacingAndGlyphs">DVSS</text><text x="798.4" y="568.7" text-anchor="end" textLength="9.4" lengthAdjust="spacingAndGlyphs">DVSS</text><text x="798.4" y="572.8" text-anchor="end" textLength="9.4" lengthAdjust="spacingAndGlyphs">DVSS</text><text x="798.4" y="576.9" text-anchor="end" textLength="9.4" lengthAdjust="spacingAndGlyphs">DVSS</text><text x="798.4" y="581.0" text-anchor="end" textLength="9.4" lengthAdjust="spacingAndGlyphs">DVSS</text><text x="798.4" y="585.1" text-anchor="end" textLength="9.4" lengthAdjust="spacingAndGlyphs">DVSS</text><text x="798.4" y="589.2" text-anchor="end" textLength="9.4" lengthAdjust="spacingAndGlyphs">DVSS</text><text x="798.4" y="593.3" text-anchor="end" textLength="9.4" lengthAdjust="spacingAndGlyphs">DVSS</text><text x="798.4" y="597.4" text-anchor="end" textLength="9.4" lengthAdjust="spacingAndGlyphs">DVSS</text><text x="798.4" y="601.5" text-anchor="end" textLength="9.4" lengthAdjust="spacingAndGlyphs">DVSS</text><text x="798.4" y="605.5" text-anchor="end" textLength="9.4" lengthAdjust="spacingAndGlyphs">DVSS</text><text x="798.4" y="609.6" text-anchor="end" textLength="9.4" lengthAdjust="spacingAndGlyphs">DVSS</text><text x="798.4" y="613.7" text-anchor="end" textLength="9.4" lengthAdjust="spacingAndGlyphs">DVSS</text><text x="798.4" y="617.8" text-anchor="end" textLength="9.4" lengthAdjust="spacingAndGlyphs">DVSS</text><text x="798.4" y="621.9" text-anchor="end" textLength="9.4" lengthAdjust="spacingAndGlyphs">DVSS</text><text x="798.4" y="626.0" text-anchor="end" textLength="9.4" lengthAdjust="spacingAndGlyphs">DVSS</text><text x="798.4" y="630.1" text-anchor="end" textLength="9.4" lengthAdjust="spacingAndGlyphs">DVSS</text><text x="798.4" y="634.2" text-anchor="end" textLength="9.4" lengthAdjust="spacingAndGlyphs">DVSS</text><text x="798.4" y="638.3" text-anchor="end" textLength="9.4" lengthAdjust="spacingAndGlyphs">DVSS</text><text x="798.4" y="642.4" text-anchor="end" textLength="9.4" lengthAdjust="spacingAndGlyphs">DVSS</text><text x="798.4" y="646.5" text-anchor="end" textLength="9.4" lengthAdjust="spacingAndGlyphs">DVSS</text><text x="798.4" y="650.6" text-anchor="end" textLength="9.4" lengthAdjust="spacingAndGlyphs">DVSS</text><text x="798.4" y="654.7" text-anchor="end" textLength="9.4" lengthAdjust="spacingAndGlyphs">DVSS</text><text x="798.4" y="658.8" text-anchor="end" textLength="9.4" lengthAdjust="spacingAndGlyphs">DVSS</text><text x="798.4" y="662.9" text-anchor="end" textLength="9.4" lengthAdjust="spacingAndGlyphs">DVSS</text><text x="798.4" y="667.0" text-anchor="end" textLength="9.4" lengthAdjust="spacingAndGlyphs">DVSS</text><text x="798.4" y="671.1" text-anchor="end" textLength="9.4" lengthAdjust="spacingAndGlyphs">DVSS</text><text x="798.4" y="675.2" text-anchor="end" textLength="9.4" lengthAdjust="spacingAndGlyphs">DVSS</text><text x="798.4" y="679.3" text-anchor="end" textLength="9.4" lengthAdjust="spacingAndGlyphs">DVSS</text><text x="798.4" y="683.4" text-anchor="end" textLength="9.4" lengthAdjust="spacingAndGlyphs">DVSS</text><text x="798.4" y="687.5" text-anchor="end" textLength="9.4" lengthAdjust="spacingAndGlyphs">DVSS</text><text x="798.4" y="691.6" text-anchor="end" textLength="9.4" lengthAdjust="spacingAndGlyphs">DVSS</text><text x="798.4" y="695.7" text-anchor="end" textLength="9.4" lengthAdjust="spacingAndGlyphs">DVSS</text><text x="798.4" y="699.8" text-anchor="end" textLength="9.4" lengthAdjust="spacingAndGlyphs">DVSS</text><text x="798.4" y="703.8" text-anchor="end" textLength="9.4" lengthAdjust="spacingAndGlyphs">DVSS</text><text x="798.4" y="707.9" text-anchor="end" textLength="9.4" lengthAdjust="spacingAndGlyphs">DVSS</text><text x="798.4" y="712.0" text-anchor="end" textLength="9.4" lengthAdjust="spacingAndGlyphs">DVSS</text><text x="798.4" y="716.1" text-anchor="end" textLength="9.4" lengthAdjust="spacingAndGlyphs">DVSS</text><text x="798.4" y="720.2" text-anchor="end" textLength="9.4" lengthAdjust="spacingAndGlyphs">DVSS</text><text x="798.4" y="724.3" text-anchor="end" textLength="9.4" lengthAdjust="spacingAndGlyphs">DVSS</text><text x="798.4" y="728.4" text-anchor="end" textLength="9.4" lengthAdjust="spacingAndGlyphs">DVSS</text><text x="798.4" y="732.5" text-anchor="end" textLength="9.4" lengthAdjust="spacingAndGlyphs">DVSS</text><text x="798.4" y="736.6" text-anchor="end" textLength="9.4" lengthAdjust="spacingAndGlyphs">DVSS</text><text x="798.4" y="740.7" text-anchor="end" textLength="9.4" lengthAdjust="spacingAndGlyphs">DVSS</text><text x="798.4" y="744.8" text-anchor="end" textLength="9.4" lengthAdjust="spacingAndGlyphs">DVSS</text><text x="798.4" y="748.9" text-anchor="end" textLength="9.4" lengthAdjust="spacingAndGlyphs">DVSS</text><text x="798.4" y="753.0" text-anchor="end" textLength="9.4" lengthAdjust="spacingAndGlyphs">DVSS</text><text x="1068.4" y="206.8" textLength="9.4" lengthAdjust="spacingAndGlyphs">DVSS</text><text x="1068.4" y="210.9" textLength="9.4" lengthAdjust="spacingAndGlyphs">DVSS</text><text x="1068.4" y="215.0" textLength="9.4" lengthAdjust="spacingAndGlyphs">DVSS</text><text x="1068.4" y="219.0" textLength="9.4" lengthAdjust="spacingAndGlyphs">DVSS</text><text x="1068.4" y="223.1" textLength="9.4" lengthAdjust="spacingAndGlyphs">DVSS</text><text x="1068.4" y="227.2" textLength="9.4" lengthAdjust="spacingAndGlyphs">DVSS</text><text x="1068.4" y="231.3" textLength="9.4" lengthAdjust="spacingAndGlyphs">DVSS</text><text x="1068.4" y="235.4" textLength="9.4" lengthAdjust="spacingAndGlyphs">DVSS</text><text x="1068.4" y="239.5" textLength="9.4" lengthAdjust="spacingAndGlyphs">DVSS</text><text x="1068.4" y="243.5" textLength="9.4" lengthAdjust="spacingAndGlyphs">DVSS</text><text x="1068.4" y="247.6" textLength="9.4" lengthAdjust="spacingAndGlyphs">DVSS</text><text x="1068.4" y="251.7" textLength="9.4" lengthAdjust="spacingAndGlyphs">DVSS</text><text x="1068.4" y="255.8" textLength="9.4" lengthAdjust="spacingAndGlyphs">DVSS</text><text x="1068.4" y="259.9" textLength="9.4" lengthAdjust="spacingAndGlyphs">DVSS</text><text x="1068.4" y="264.0" textLength="9.4" lengthAdjust="spacingAndGlyphs">DVSS</text><text x="1068.4" y="268.0" textLength="9.4" lengthAdjust="spacingAndGlyphs">DVSS</text><text x="1068.4" y="272.1" textLength="9.4" lengthAdjust="spacingAndGlyphs">DVSS</text><text x="1068.4" y="276.2" textLength="9.4" lengthAdjust="spacingAndGlyphs">DVSS</text><text x="1068.4" y="280.3" textLength="9.4" lengthAdjust="spacingAndGlyphs">DVSS</text><text x="1068.4" y="284.4" textLength="9.4" lengthAdjust="spacingAndGlyphs">DVSS</text><text x="1068.4" y="288.5" textLength="9.4" lengthAdjust="spacingAndGlyphs">DVSS</text><text x="1068.4" y="292.5" textLength="9.4" lengthAdjust="spacingAndGlyphs">DVSS</text><text x="1068.4" y="296.6" textLength="9.4" lengthAdjust="spacingAndGlyphs">DVSS</text><text x="1068.4" y="300.7" textLength="9.4" lengthAdjust="spacingAndGlyphs">DVSS</text><text x="1068.4" y="304.8" textLength="9.4" lengthAdjust="spacingAndGlyphs">DVSS</text><text x="1068.4" y="308.9" textLength="9.4" lengthAdjust="spacingAndGlyphs">DVSS</text><text x="1068.4" y="313.0" textLength="9.4" lengthAdjust="spacingAndGlyphs">DVSS</text><text x="1068.4" y="317.0" textLength="9.4" lengthAdjust="spacingAndGlyphs">DVSS</text><text x="1068.4" y="321.1" textLength="9.4" lengthAdjust="spacingAndGlyphs">DVSS</text><text x="1068.4" y="325.2" textLength="9.4" lengthAdjust="spacingAndGlyphs">DVSS</text><text x="1068.4" y="329.3" textLength="9.4" lengthAdjust="spacingAndGlyphs">DVSS</text><text x="1068.4" y="333.4" textLength="9.4" lengthAdjust="spacingAndGlyphs">DVSS</text><text x="1068.4" y="337.5" textLength="9.4" lengthAdjust="spacingAndGlyphs">DVSS</text><text x="1068.4" y="341.5" textLength="9.4" lengthAdjust="spacingAndGlyphs">DVSS</text><text x="1068.4" y="345.6" textLength="9.4" lengthAdjust="spacingAndGlyphs">DVSS</text><text x="1068.4" y="349.7" textLength="9.4" lengthAdjust="spacingAndGlyphs">DVSS</text><text x="1068.4" y="353.8" textLength="9.4" lengthAdjust="spacingAndGlyphs">DVSS</text><text x="1068.4" y="357.9" textLength="9.4" lengthAdjust="spacingAndGlyphs">DVSS</text><text x="1068.4" y="362.0" textLength="9.4" lengthAdjust="spacingAndGlyphs">DVSS</text><text x="1068.4" y="366.0" textLength="9.4" lengthAdjust="spacingAndGlyphs">DVSS</text><text x="1068.4" y="370.1" textLength="9.4" lengthAdjust="spacingAndGlyphs">DVSS</text><text x="1068.4" y="374.2" textLength="9.4" lengthAdjust="spacingAndGlyphs">DVSS</text><text x="1068.4" y="378.3" textLength="9.4" lengthAdjust="spacingAndGlyphs">DVSS</text><text x="1068.4" y="382.4" textLength="9.4" lengthAdjust="spacingAndGlyphs">DVSS</text><text x="1068.4" y="386.5" textLength="9.4" lengthAdjust="spacingAndGlyphs">DVSS</text><text x="1068.4" y="390.5" textLength="9.4" lengthAdjust="spacingAndGlyphs">DVSS</text><text x="1068.4" y="394.6" textLength="9.4" lengthAdjust="spacingAndGlyphs">DVSS</text><text x="1068.4" y="398.7" textLength="9.4" lengthAdjust="spacingAndGlyphs">DVSS</text><text x="1068.4" y="402.8" textLength="9.4" lengthAdjust="spacingAndGlyphs">DVSS</text><text x="1068.4" y="406.9" textLength="9.4" lengthAdjust="spacingAndGlyphs">DVSS</text><text x="1068.4" y="411.0" textLength="9.4" lengthAdjust="spacingAndGlyphs">DVSS</text><text x="1068.4" y="415.0" textLength="9.4" lengthAdjust="spacingAndGlyphs">DVSS</text><text x="1068.4" y="419.1" textLength="9.4" lengthAdjust="spacingAndGlyphs">DVSS</text><text x="1068.4" y="423.2" textLength="9.4" lengthAdjust="spacingAndGlyphs">DVSS</text><text x="1068.4" y="427.3" textLength="9.4" lengthAdjust="spacingAndGlyphs">DVSS</text><text x="1068.4" y="431.4" textLength="9.4" lengthAdjust="spacingAndGlyphs">DVSS</text><text x="1068.4" y="435.5" textLength="9.4" lengthAdjust="spacingAndGlyphs">DVSS</text><text x="1068.4" y="439.5" textLength="9.4" lengthAdjust="spacingAndGlyphs">DVSS</text><text x="1068.4" y="443.6" textLength="9.4" lengthAdjust="spacingAndGlyphs">DVSS</text><text x="1068.4" y="447.7" textLength="9.4" lengthAdjust="spacingAndGlyphs">DVSS</text></g>
<g font-size="3"><text x="547.3" y="212.6" textLength="20.0" lengthAdjust="spacingAndGlyphs">VCORE_PMU</text><text x="558.2" y="217.8" textLength="26.8" lengthAdjust="spacingAndGlyphs">VCORE_PMIC_FB</text><text x="558.6" y="221.8" textLength="26.4" lengthAdjust="spacingAndGlyphs">GND_VCORE_FB</text><text x="872.0" y="199.7" textLength="20.0" lengthAdjust="spacingAndGlyphs">VPROC_PMU</text><text x="559.7" y="390.1" textLength="17.4" lengthAdjust="spacingAndGlyphs">VLTE_PMU</text><text x="552.4" y="394.0" textLength="24.6" lengthAdjust="spacingAndGlyphs">VLTE_PMIC_FB</text><text x="553.3" y="397.7" textLength="23.8" lengthAdjust="spacingAndGlyphs">GND_VLTE_FB</text><text x="564.2" y="526.6" textLength="16.8" lengthAdjust="spacingAndGlyphs">VLTE_PMU</text><text x="602.0" y="571.9" textLength="7.8" lengthAdjust="spacingAndGlyphs">C128</text><text x="602.0" y="581.7" textLength="8.4" lengthAdjust="spacingAndGlyphs">4.7uF</text><text x="623.4" y="571.9" textLength="7.8" lengthAdjust="spacingAndGlyphs">C130</text><text x="623.4" y="581.7" textLength="8.4" lengthAdjust="spacingAndGlyphs">100nF</text><text x="565.0" y="606.1" textLength="20.0" lengthAdjust="spacingAndGlyphs">VSRAM_PMU</text><text x="610.0" y="645.5" textLength="7.8" lengthAdjust="spacingAndGlyphs">C127</text><text x="610.0" y="655.1" textLength="8.4" lengthAdjust="spacingAndGlyphs">4.7uF</text><text x="625.4" y="645.5" textLength="7.8" lengthAdjust="spacingAndGlyphs">C131</text><text x="625.4" y="655.1" textLength="8.4" lengthAdjust="spacingAndGlyphs">100nF</text><text x="581.2" y="672.8" textLength="21.8" lengthAdjust="spacingAndGlyphs">DVDD12_EMI</text><text x="555.9" y="752.4" textLength="7.6" lengthAdjust="spacingAndGlyphs">C999</text><text x="556.7" y="758.7" textLength="8.2" lengthAdjust="spacingAndGlyphs">100nF</text><text x="570.3" y="752.4" textLength="7.6" lengthAdjust="spacingAndGlyphs">C998</text><text x="571.1" y="758.7" textLength="8.2" lengthAdjust="spacingAndGlyphs">2.2uF</text><text x="582.8" y="752.4" textLength="7.6" lengthAdjust="spacingAndGlyphs">C997</text><text x="583.6" y="758.7" textLength="8.2" lengthAdjust="spacingAndGlyphs">4.7uF</text><text x="596.9" y="752.4" textLength="7.6" lengthAdjust="spacingAndGlyphs">C996</text><text x="597.7" y="758.7" textLength="8.2" lengthAdjust="spacingAndGlyphs">100nF</text><text x="609.0" y="752.4" textLength="7.6" lengthAdjust="spacingAndGlyphs">C125</text><text x="609.8" y="758.7" textLength="8.2" lengthAdjust="spacingAndGlyphs">100nF</text><text x="621.6" y="752.4" textLength="7.6" lengthAdjust="spacingAndGlyphs">C126</text><text x="622.4" y="758.7" textLength="8.2" lengthAdjust="spacingAndGlyphs">100nF</text><text x="634.0" y="752.4" textLength="7.6" lengthAdjust="spacingAndGlyphs">C129</text><text x="634.8" y="758.7" textLength="8.2" lengthAdjust="spacingAndGlyphs">100nF</text><text x="1244.4" y="184.6" text-anchor="middle" textLength="19.4" lengthAdjust="spacingAndGlyphs">VIO18_PMU</text><text x="1271.0" y="184.6" text-anchor="middle" textLength="24.0" lengthAdjust="spacingAndGlyphs">VTCXO_0_PMU</text><text x="1284.5" y="320.4" textLength="19.0" lengthAdjust="spacingAndGlyphs">VIO18_PMU</text><text x="1284.5" y="328.4" textLength="19.0" lengthAdjust="spacingAndGlyphs">VIO18_PMU</text><text x="1204.2" y="368.8" textLength="18.6" lengthAdjust="spacingAndGlyphs">VIO18_PMU</text><text x="1280.0" y="435.8" textLength="18.6" lengthAdjust="spacingAndGlyphs">VMC0_PMU</text><text x="1280.0" y="447.8" textLength="15.6" lengthAdjust="spacingAndGlyphs">VMC_PMU</text><text x="1280.0" y="480.6" textLength="18.6" lengthAdjust="spacingAndGlyphs">VSIM1_PMU</text><text x="1280.0" y="493.1" textLength="18.6" lengthAdjust="spacingAndGlyphs">VSIM2_PMU</text><text x="1282.7" y="521.6" textLength="19.0" lengthAdjust="spacingAndGlyphs">VIO18_PMU</text><text x="1283.6" y="530.0" textLength="18.4" lengthAdjust="spacingAndGlyphs">VIO18_PMU</text><text x="1252.4" y="565.4" text-anchor="middle" textLength="19.0" lengthAdjust="spacingAndGlyphs">VIO18_PMU</text><text x="1283.0" y="565.4" text-anchor="middle" textLength="21.6" lengthAdjust="spacingAndGlyphs">VBUS33_PMU</text><text x="1253.0" y="632.6" textLength="18.8" lengthAdjust="spacingAndGlyphs">VCN18_PMU</text></g>
<g font-size="2.6"><text x="599.6" y="217.9" text-anchor="middle">[5]</text><text x="599.6" y="221.9" text-anchor="middle">[5]</text><text x="918.4" y="218.5" text-anchor="middle">[5]</text><text x="918.4" y="238.8" text-anchor="middle">[5]</text><text x="593.4" y="387.4" text-anchor="middle">[5,6]</text><text x="1253.4" y="421.6">0R</text><text x="1262.0" y="422.4">R999</text><text x="1278.6" y="425.2" text-anchor="middle">[5]</text><text x="843.0" y="789.6" textLength="11.0" lengthAdjust="spacingAndGlyphs" fill="#222">COMPANY:</text><text x="1065.4" y="788.2" textLength="15.6" lengthAdjust="spacingAndGlyphs" fill="#222">MT6735M</text></g>
<g font-size="2.7"><text x="587.5" y="232.4" text-anchor="middle" textLength="18.6" lengthAdjust="spacingAndGlyphs">HT-COPPER</text><text x="626.4" y="232.4" text-anchor="middle" textLength="18.6" lengthAdjust="spacingAndGlyphs">HT-COPPER</text><text x="890.4" y="215.6" text-anchor="middle" textLength="18.6" lengthAdjust="spacingAndGlyphs">HT-COPPER</text><text x="890.4" y="235.9" text-anchor="middle" textLength="18.6" lengthAdjust="spacingAndGlyphs">HT-COPPER</text><text x="873.6" y="370.6">GND</text><text x="585.5" y="408.2" text-anchor="middle" textLength="18.6" lengthAdjust="spacingAndGlyphs">HT-COPPER</text><text x="624.6" y="408.2" text-anchor="middle" textLength="18.6" lengthAdjust="spacingAndGlyphs">HT-COPPER</text><text x="1277.7" y="419.6">GND</text></g>
<g font-size="2.4"><text x="579.5" y="234.2">2</text><text x="594.5" y="234.2">1</text><text x="617.8" y="234.2">2</text><text x="633.9" y="234.2">1</text><text x="880.4" y="218.1">2</text><text x="898.2" y="218.1">1</text><text x="880.4" y="238.4">1</text><text x="898.2" y="238.4">2</text><text x="577.0" y="410.0">2</text><text x="592.7" y="410.0">1</text><text x="615.9" y="410.0">2</text><text x="632.2" y="410.0">1</text><text x="1284.6" y="341.2" textLength="13.0" lengthAdjust="spacingAndGlyphs">2.02.07.07</text></g>
<g font-size="2.8"><text x="570.4" y="241.8" textLength="7.6" lengthAdjust="spacingAndGlyphs">R102</text><text x="634.0" y="241.8" textLength="7.6" lengthAdjust="spacingAndGlyphs">R104</text><text x="890.4" y="226.7" text-anchor="middle" textLength="7.6" lengthAdjust="spacingAndGlyphs">R103</text><text x="890.4" y="247.0" text-anchor="middle" textLength="7.6" lengthAdjust="spacingAndGlyphs">R105</text><text x="596.2" y="407.6" textLength="7.6" lengthAdjust="spacingAndGlyphs">R101</text><text x="635.0" y="407.6" textLength="7.6" lengthAdjust="spacingAndGlyphs">R103</text><text x="638.5" y="597.8">GND</text><text x="852.4" y="547.8">GND</text><text x="517.8" y="829.0" text-anchor="middle" textLength="7.0" lengthAdjust="spacingAndGlyphs">SH00</text><text x="517.8" y="835.2" text-anchor="middle" textLength="22.0" lengthAdjust="spacingAndGlyphs">SH-BB-J5088</text><text x="542.7" y="829.0" text-anchor="middle" textLength="7.0" lengthAdjust="spacingAndGlyphs">SH01</text><text x="542.7" y="835.2" text-anchor="middle" textLength="22.0" lengthAdjust="spacingAndGlyphs">SH-CPU-J5088</text><text x="566.9" y="829.0" text-anchor="middle" textLength="7.0" lengthAdjust="spacingAndGlyphs">SH02</text><text x="566.9" y="835.2" text-anchor="middle" textLength="22.0" lengthAdjust="spacingAndGlyphs">SH-RF-J5088</text><text x="593.4" y="829.0" text-anchor="middle" textLength="7.0" lengthAdjust="spacingAndGlyphs">SH03</text><text x="593.4" y="835.2" text-anchor="middle" textLength="22.0" lengthAdjust="spacingAndGlyphs">SH-WIFA-J5088</text><text x="1050.0" y="454.6">GND</text><text x="1226.0" y="262.4">GND</text><text x="1228.0" y="346.3">GND</text><text x="1228.0" y="362.6">GND</text><text x="1226.6" y="437.6" textLength="7.4" lengthAdjust="spacingAndGlyphs">C147</text><text x="1246.0" y="437.6" textLength="8.4" lengthAdjust="spacingAndGlyphs">100nF</text><text x="1226.6" y="449.4" textLength="7.4" lengthAdjust="spacingAndGlyphs">C149</text><text x="1246.0" y="449.4" textLength="8.4" lengthAdjust="spacingAndGlyphs">4.7uF</text><text x="1227.0" y="482.4" textLength="8.8" lengthAdjust="spacingAndGlyphs">100nF</text><text x="1243.6" y="482.2" textLength="7.4" lengthAdjust="spacingAndGlyphs">C146</text><text x="1227.0" y="494.9" textLength="8.8" lengthAdjust="spacingAndGlyphs">100nF</text><text x="1243.6" y="494.7" textLength="7.4" lengthAdjust="spacingAndGlyphs">C157</text><text x="1238.3" y="554.8">GND</text><text x="1224.2" y="608.0">GND</text><text x="1224.2" y="675.6">GND</text></g>
<g font-size="3.1"><text x="602.4" y="247.3" text-anchor="end">C995</text><text x="609.6" y="247.5">47uF</text><text x="602.4" y="255.4" text-anchor="end">C994</text><text x="609.6" y="255.6">22uF</text><text x="602.4" y="263.5" text-anchor="end">C993</text><text x="609.6" y="263.7">22uF</text><text x="602.4" y="271.5" text-anchor="end">C127</text><text x="609.6" y="271.7">22uF</text><text x="602.4" y="279.6" text-anchor="end">C108</text><text x="609.6" y="279.8">4.7uF</text><text x="602.4" y="287.7" text-anchor="end">C109</text><text x="609.6" y="287.9">4.7uF</text><text x="602.4" y="295.8" text-anchor="end">C110</text><text x="609.6" y="296.0">1uF</text><text x="602.4" y="303.9" text-anchor="end">C111</text><text x="609.6" y="304.1">1uF</text><text x="602.4" y="311.9" text-anchor="end">C112</text><text x="609.6" y="312.1">1uF</text><text x="602.4" y="320.0" text-anchor="end">C113</text><text x="609.6" y="320.2">1uF</text><text x="602.4" y="328.1" text-anchor="end">C114</text><text x="609.6" y="328.3">1uF</text><text x="602.4" y="336.2" text-anchor="end">C115</text><text x="609.6" y="336.4">1uF</text><text x="602.4" y="344.3" text-anchor="end">C166</text><text x="609.6" y="344.5">22uF NC</text><text x="840.0" y="239.1" text-anchor="end">22uF</text><text x="846.6" y="239.1">C133</text><text x="840.0" y="249.2" text-anchor="end">22uF</text><text x="846.6" y="249.2">C134</text><text x="840.0" y="259.2" text-anchor="end">22uF</text><text x="846.6" y="259.2">C135</text><text x="840.0" y="269.3" text-anchor="end">4.7uF</text><text x="846.6" y="269.3">C136</text><text x="840.0" y="279.4" text-anchor="end">4.7uF</text><text x="846.6" y="279.4">C137</text><text x="840.0" y="289.5" text-anchor="end">C138</text><text x="846.6" y="289.5">1uF</text><text x="840.0" y="299.5" text-anchor="end">C139</text><text x="846.6" y="299.5">1uF</text><text x="840.0" y="309.6" text-anchor="end">C140</text><text x="846.6" y="309.6">1uF</text><text x="840.0" y="319.7" text-anchor="end">C141</text><text x="846.6" y="319.7">1uF</text><text x="840.0" y="329.7" text-anchor="end">C142</text><text x="846.6" y="329.7">1uF</text><text x="840.0" y="339.8" text-anchor="end">C143</text><text x="846.6" y="339.8">1uF</text><text x="840.0" y="349.9" text-anchor="end">C132</text><text x="846.6" y="349.9">47uF</text><text x="840.0" y="359.9" text-anchor="end">C167</text><text x="846.6" y="359.9">22uF NC</text><text x="604.0" y="419.2" text-anchor="end">C122</text><text x="611.4" y="419.4">22uF</text><text x="604.0" y="427.4" text-anchor="end">C125</text><text x="611.4" y="427.6">22uF</text><text x="604.0" y="435.6" text-anchor="end">C124</text><text x="611.4" y="435.8">4.7uF</text><text x="604.0" y="443.9" text-anchor="end">C126</text><text x="611.4" y="444.1">4.7uF</text><text x="604.0" y="452.1" text-anchor="end">C117</text><text x="611.4" y="452.3">1uF</text><text x="604.0" y="460.3" text-anchor="end">C118</text><text x="611.4" y="460.5">1uF</text><text x="604.0" y="468.5" text-anchor="end">C119</text><text x="611.4" y="468.7">1uF</text><text x="604.0" y="476.7" text-anchor="end">C120</text><text x="611.4" y="476.9">1uF</text><text x="604.0" y="485.0" text-anchor="end">C121</text><text x="611.4" y="485.2">22uF-NC</text></g>
<g font-size="2.2"><text x="849.4" y="547.7">1</text><text x="1262.4" y="433.6">0R/nc</text><text x="1262.4" y="445.4">0R/nc</text></g>
<g font-size="2.3"><text x="1265.4" y="325.8">0R/nc</text><text x="1272.0" y="441.8" textLength="12.0" lengthAdjust="spacingAndGlyphs">2.02.07.07</text><text x="1272.0" y="453.6" textLength="12.0" lengthAdjust="spacingAndGlyphs">2.02.07.07</text></g>
<g font-size="9.2"><text x="843.4" y="824.9" textLength="33.0" lengthAdjust="spacingAndGlyphs" fill="#222">DRAWN</text><text x="958.4" y="824.9" textLength="28.6" lengthAdjust="spacingAndGlyphs" fill="#222">DATED</text><text x="843.4" y="842.9" textLength="42.0" lengthAdjust="spacingAndGlyphs" fill="#222">CHECKED</text><text x="958.4" y="842.9" textLength="28.6" lengthAdjust="spacingAndGlyphs" fill="#222">DATED</text><text x="1051.2" y="802.1" textLength="33.4" lengthAdjust="spacingAndGlyphs" fill="#222">MODEL:</text><text x="1052.2" y="833.2" textLength="25.8" lengthAdjust="spacingAndGlyphs" fill="#222">TITLE:</text></g>
<g font-size="7.6"><text x="893.4" y="824.7" textLength="25.8" lengthAdjust="spacingAndGlyphs" fill="#222">YANXU</text><text x="893.4" y="841.2" textLength="24.0" lengthAdjust="spacingAndGlyphs" fill="#222">Wu Xu</text><text x="1001.0" y="841.4" fill="#222">&lt;-&gt;</text></g>
<g font-size="11.8"><text x="1123.7" y="802.2" textLength="66.2" lengthAdjust="spacingAndGlyphs" fill="#222">J5088_V1.2</text></g>
<g font-size="8.6"><text x="1260.4" y="802.1" textLength="62.0" lengthAdjust="spacingAndGlyphs" fill="#222">Modified Date:</text><text x="1368.0" y="802.1" textLength="44.6" lengthAdjust="spacingAndGlyphs" fill="#222">2016/4/19</text><text x="1260.4" y="832.6" textLength="42.4" lengthAdjust="spacingAndGlyphs" fill="#222">VERSION:</text><text x="1313.4" y="832.0" textLength="19.2" lengthAdjust="spacingAndGlyphs" fill="#222">V1.2</text><text x="1350.0" y="832.6" textLength="31.6" lengthAdjust="spacingAndGlyphs" fill="#222">SHEET:</text><text x="1389.0" y="832.0" fill="#222">1</text><text x="1417.0" y="832.6" textLength="9.4" lengthAdjust="spacingAndGlyphs" fill="#222">Of</text></g>
<g font-size="8.2"><text x="1426.6" y="831.4" textLength="9.0" lengthAdjust="spacingAndGlyphs" fill="#222">16</text></g>
</svg>
<div id="sb"></div><div id="sbt">XZZ Schematics https://www.xzztools.com</div>
</body></html>
